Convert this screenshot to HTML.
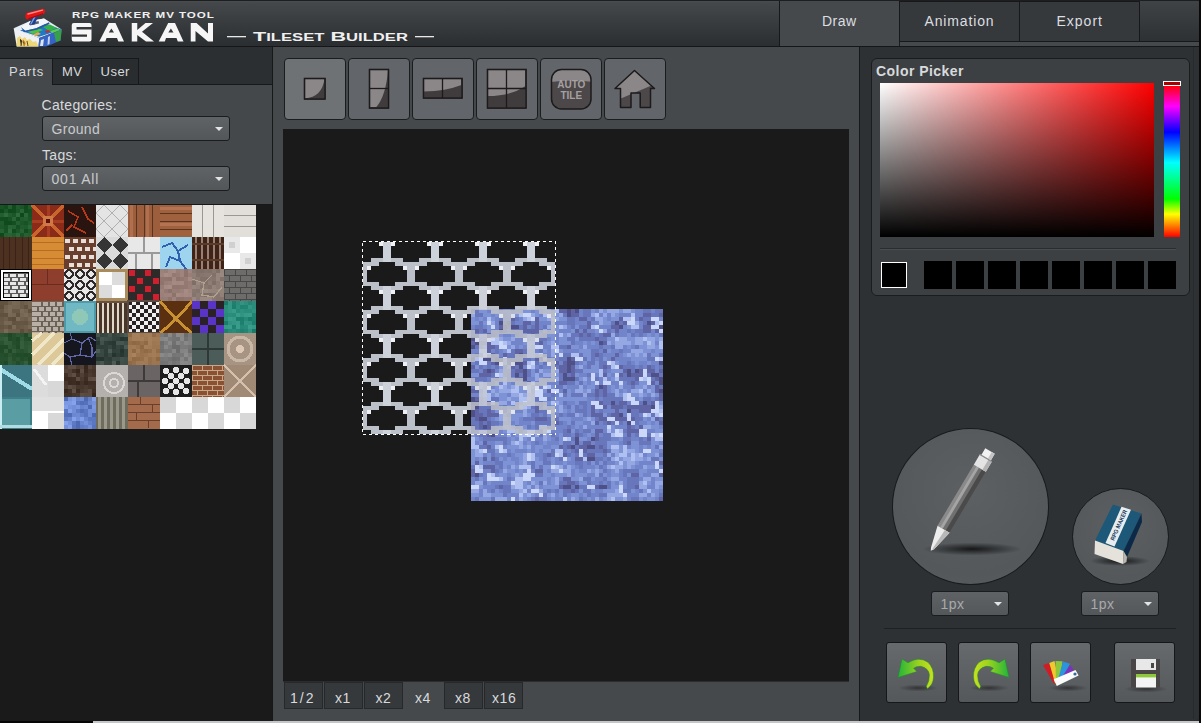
<!DOCTYPE html>
<html><head><meta charset="utf-8">
<style>
*{box-sizing:border-box;margin:0;padding:0}
html,body{width:1201px;height:723px;overflow:hidden;background:#2c2f32;font-family:"Liberation Sans",sans-serif;position:relative}
.a{position:absolute}
.t{white-space:nowrap;line-height:normal}
.dd{border:1px solid #1a1c1e;border-radius:3px;background:linear-gradient(#606366,#54575a)}
.dd:after{content:"";position:absolute;right:6px;top:10px;border-left:4px solid transparent;border-right:4px solid transparent;border-top:4px solid #e4e4e4}
.tb{top:58px;width:62px;height:62px;border:1.5px solid #1a1c1e;border-radius:4px}
.rb{top:642px;width:61px;height:61px;border:1.5px solid #151719;border-radius:3px;background:linear-gradient(#676a6d,#55585b)}
.circ{border-radius:50%;border:1.5px solid #181a1c;background:radial-gradient(circle at 50% 40%,#5c6063,#54585b 70%,#5a5e61)}
</style></head><body>
<div class="a" style="left:0;top:0;width:1201px;height:47px;background:linear-gradient(#4a4d50,#45484b 4%,#2c2f32 96%);border-top:1px solid #1c1e20;border-bottom:1px solid #141618"></div>
<svg class="a" style="left:0;top:0" width="70" height="47">
<path d="M13.7 28.3L30 21L44 18.6L49 21.6L61.7 29.6L39.2 38L16 30Z" fill="#e4eef8"/>
<path d="M20 30.5L44 23.5L61.7 29.6L39.2 36.8Z" fill="#1e78c8"/>
<path d="M27 31.5L38 28L43 30L33 34Z" fill="#4cc43c"/>
<path d="M42 26L50 24.5L57 28L49 31Z" fill="#38b048"/>
<path d="M50 31L58 28.5L60 30L52 33Z" fill="#5ad040"/>
<path d="M33 34.5L38 32L41 34L36 36Z" fill="#e0a848"/>
<path d="M45 31L49 30L50 32L46 33Z" fill="#d02828"/>
<path d="M21 27.1L30.1 21L44.1 18.6L49 22.3L36.2 28.3L25.2 30.8Z" fill="#f2f6fa"/>
<path d="M21 27.1L25.2 30.8L36.2 28.3L49 22.3L49.5 24L37 29.8L24 32.5Z" fill="#2a58a8"/>
<path d="M29.5 23L38.6 21L39 23.5L30 25.5Z" fill="#5a6274"/>
<path d="M13.7 28.3L39.2 38L38.6 46.6H16.7Z" fill="#eef0f2"/>
<path d="M16.7 46.6L17 38L20 36L22 39L25 37L27 40L30 39L33 42L36 41L38.6 46.6Z" fill="#ecd878"/>
<path d="M20 39L22 41L21 46M27 41L28 46" stroke="#6a4a20" stroke-width="1"/>
<path d="M23 40L25 43L24 46" stroke="#d07a30" stroke-width="1.2"/>
<path d="M39.2 38L61.7 29.6L60.5 40.5L46.5 46.6H38.6Z" fill="#3564c4"/>
<path d="M54 33L61.7 29.6L60.5 40.5L56 42Z" fill="#38a048"/>
<path d="M41 40L44 39L43 46H40Z" fill="#dfe6f0"/>
<path d="M48 37L50 36L49.5 44L47.5 45Z" fill="#c8d4ec"/>
<path d="M33.5 15L39 14.5L34.5 24.5L29 24.8Z" fill="#1e3c90"/>
<path d="M34.5 15.5L36.5 15.2L31.5 24.3L30 24.5Z" fill="#7aa0e0"/>
<path d="M25.3 16.2Q25.3 12.8 28.5 12.3L42 8.9Q45 8.6 45.2 11.2Q45.3 13.5 42.8 14.2L29.5 19.2Q25.3 20 25.3 16.2Z" fill="#e41414"/>
<path d="M28 14L42.5 10.2" stroke="#ff8a8a" stroke-width="1.3" stroke-linecap="round"/>
<path d="M28.5 18.7L43 13.8" stroke="#9a0a14" stroke-width="1.1"/>
</svg>
<svg class="a" style="left:60px;top:0" width="400" height="47">
<text transform="translate(12,17.8) scale(1.32,1)" font-family="Liberation Sans" font-weight="bold" font-size="8.8" fill="#f0f0f0" textLength="107.5" lengthAdjust="spacing">RPG MAKER MV TOOL</text>
<path transform="translate(-60,0)" fill="#f6f6f6" fill-rule="evenodd" d="M73.8 23H89.5Q91.5 23 91.5 25V39.5Q91.5 41.5 89.5 41.5H73.8Q71.75 41.5 71.75 39.5V25Q71.75 23 73.8 23ZM76.5 27H91.6V29.5H76.5ZM71.6 34.5H87V36.75H71.6Z
M108.7 23H115.5L124 41.5H118.3L117 38H106.5L105.3 41.5H99.2ZM111.4 28.6L114 32.4H108.8Z
M168.2 23H175L183.5 41.5H177.8L176.5 38H166L164.8 41.5H158.7ZM170.9 28.6L173.5 32.4H168.3Z
M131.75 23H137.25V30L145.5 23H153L142 31.75L154 41.5H146L137.25 35V41.5H131.75Z
M190.75 23H196.5L208 33.5V23H213V41.5H208L195.5 31V41.5H190.75Z"/>
<rect x="167" y="36" width="19" height="1.3" fill="#e8e8e8"/>
<text x="193" y="40.5" font-family="Liberation Sans" font-weight="bold" font-size="13" fill="#f0f0f0" textLength="155" lengthAdjust="spacingAndGlyphs">T<tspan font-size="10">ILESET</tspan> B<tspan font-size="10">UILDER</tspan></text>
<rect x="355" y="36" width="19" height="1.3" fill="#e8e8e8"/>
</svg>
<div class="a" style="left:779px;top:1px;width:421px;height:45px;background:#46494c"></div>
<div class="a" style="left:779px;top:1px;width:121px;height:45px;border-left:1.5px solid #16181a;border-right:1px solid #1a1c1e"></div>
<div class="a" style="left:899px;top:1px;width:121px;height:41px;background:#36393c;border:1px solid #16181a"></div>
<div class="a" style="left:1019px;top:1px;width:121px;height:41px;background:#36393c;border:1px solid #16181a"></div>
<div class="a" style="left:1140px;top:1px;width:59px;height:41px;background:linear-gradient(#404346,#2e3134);border-bottom:1px solid #16181a"></div>
<div class="a" style="left:1199px;top:0;width:2px;height:723px;background:#0a0a0a"></div>
<div class="a t" style="left:822px;top:13.13px;font-size:14px;color:#dcdee0;letter-spacing:0.5px;">Draw</div>
<div class="a t" style="left:924.5px;top:13.13px;font-size:14px;color:#dcdee0;letter-spacing:0.85px;">Animation</div>
<div class="a t" style="left:1056.5px;top:13.13px;font-size:14px;color:#dcdee0;letter-spacing:1px;">Export</div>
<div class="a" style="left:0;top:85px;width:272px;height:119px;background:#45484b"></div>
<div class="a" style="left:0;top:58px;width:52.5px;height:27px;background:#45484b;border-top:1px solid #16181a"></div>
<div class="a" style="left:52px;top:58px;width:40px;height:27px;background:#2a2d30;border:1px solid #16181a;border-bottom:none"></div>
<div class="a" style="left:91px;top:58px;width:48px;height:27px;background:#2a2d30;border:1px solid #16181a;border-bottom:none"></div>
<div class="a" style="left:52px;top:84px;width:220px;height:1px;background:#16181a"></div>
<div class="a t" style="left:9px;top:63.94px;font-size:13px;color:#d8dadc;letter-spacing:1.0px;">Parts</div>
<div class="a t" style="left:62px;top:63.94px;font-size:13px;color:#d8dadc;letter-spacing:0.5px;">MV</div>
<div class="a t" style="left:100.5px;top:63.94px;font-size:13px;color:#d8dadc;letter-spacing:0.5px;">User</div>
<div class="a t" style="left:41.5px;top:97.33px;font-size:14px;color:#d8dadc;letter-spacing:0.35px;">Categories:</div>
<div class="a dd" style="left:42px;top:116px;width:188px;height:25px"></div>
<div class="a t" style="left:51.5px;top:121.33px;font-size:14px;color:#c8cacc;letter-spacing:0.3px;">Ground</div>
<div class="a t" style="left:42px;top:147.33px;font-size:14px;color:#d8dadc;letter-spacing:0.3px;">Tags:</div>
<div class="a dd" style="left:42px;top:166px;width:188px;height:25px"></div>
<div class="a t" style="left:51.5px;top:171.33px;font-size:14px;color:#c8cacc;letter-spacing:0.8px;">001 All</div>
<div class="a" style="left:0;top:204px;width:273px;height:1px;background:#16181a"></div>
<div class="a" style="left:0;top:205px;width:272px;height:516px;background:#1a1a1a"></div>
<svg class="a" style="left:0;top:205px" width="256" height="224" viewBox="0 0 256 224" shape-rendering="crispEdges"><rect x="0" y="0" width="4" height="4" fill="#185325"/><rect x="4" y="0" width="4" height="4" fill="#124d1f"/><rect x="8" y="0" width="4" height="4" fill="#245f31"/><rect x="12" y="0" width="4" height="4" fill="#0f4a1c"/><rect x="16" y="0" width="4" height="4" fill="#205b2d"/><rect x="20" y="0" width="4" height="4" fill="#1a5527"/><rect x="24" y="0" width="4" height="4" fill="#0f4a1c"/><rect x="28" y="0" width="4" height="4" fill="#1f5a2c"/><rect x="0" y="4" width="4" height="4" fill="#0e491b"/><rect x="4" y="4" width="4" height="4" fill="#1c5729"/><rect x="8" y="4" width="4" height="4" fill="#0f4a1c"/><rect x="12" y="4" width="4" height="4" fill="#104b1d"/><rect x="16" y="4" width="4" height="4" fill="#1c5729"/><rect x="20" y="4" width="4" height="4" fill="#2a6537"/><rect x="24" y="4" width="4" height="4" fill="#114c1e"/><rect x="28" y="4" width="4" height="4" fill="#155022"/><rect x="0" y="8" width="4" height="4" fill="#235e30"/><rect x="4" y="8" width="4" height="4" fill="#2f6a3c"/><rect x="8" y="8" width="4" height="4" fill="#215c2e"/><rect x="12" y="8" width="4" height="4" fill="#1b5628"/><rect x="16" y="8" width="4" height="4" fill="#306b3d"/><rect x="20" y="8" width="4" height="4" fill="#0e491b"/><rect x="24" y="8" width="4" height="4" fill="#2b6638"/><rect x="28" y="8" width="4" height="4" fill="#175224"/><rect x="0" y="12" width="4" height="4" fill="#124d1f"/><rect x="4" y="12" width="4" height="4" fill="#114c1e"/><rect x="8" y="12" width="4" height="4" fill="#185325"/><rect x="12" y="12" width="4" height="4" fill="#2a6537"/><rect x="16" y="12" width="4" height="4" fill="#134e20"/><rect x="20" y="12" width="4" height="4" fill="#215c2e"/><rect x="24" y="12" width="4" height="4" fill="#245f31"/><rect x="28" y="12" width="4" height="4" fill="#1a5527"/><rect x="0" y="16" width="4" height="4" fill="#205b2d"/><rect x="4" y="16" width="4" height="4" fill="#0f4a1c"/><rect x="8" y="16" width="4" height="4" fill="#0f4a1c"/><rect x="12" y="16" width="4" height="4" fill="#144f21"/><rect x="16" y="16" width="4" height="4" fill="#256032"/><rect x="20" y="16" width="4" height="4" fill="#1c5729"/><rect x="24" y="16" width="4" height="4" fill="#185325"/><rect x="28" y="16" width="4" height="4" fill="#225d2f"/><rect x="0" y="20" width="4" height="4" fill="#1d582a"/><rect x="4" y="20" width="4" height="4" fill="#175224"/><rect x="8" y="20" width="4" height="4" fill="#296436"/><rect x="12" y="20" width="4" height="4" fill="#266133"/><rect x="16" y="20" width="4" height="4" fill="#155022"/><rect x="20" y="20" width="4" height="4" fill="#215c2e"/><rect x="24" y="20" width="4" height="4" fill="#1f5a2c"/><rect x="28" y="20" width="4" height="4" fill="#2c6739"/><rect x="0" y="24" width="4" height="4" fill="#276234"/><rect x="4" y="24" width="4" height="4" fill="#175224"/><rect x="8" y="24" width="4" height="4" fill="#306b3d"/><rect x="12" y="24" width="4" height="4" fill="#114c1e"/><rect x="16" y="24" width="4" height="4" fill="#1c5729"/><rect x="20" y="24" width="4" height="4" fill="#286335"/><rect x="24" y="24" width="4" height="4" fill="#124d1f"/><rect x="28" y="24" width="4" height="4" fill="#1e592b"/><rect x="0" y="28" width="4" height="4" fill="#0e491b"/><rect x="4" y="28" width="4" height="4" fill="#256032"/><rect x="8" y="28" width="4" height="4" fill="#286335"/><rect x="12" y="28" width="4" height="4" fill="#215c2e"/><rect x="16" y="28" width="4" height="4" fill="#2c6739"/><rect x="20" y="28" width="4" height="4" fill="#185325"/><rect x="24" y="28" width="4" height="4" fill="#266133"/><rect x="28" y="28" width="4" height="4" fill="#225d2f"/><rect x="32" y="0" width="32" height="32" fill="#8a2a18"/><path d="M32 0L64 32M64 0L32 32" stroke="#c8642c" stroke-width="4"/><path d="M48 0V32M32 16H64" stroke="#a83c20" stroke-width="3"/><rect x="43" y="11" width="10" height="10" fill="#d07848"/><rect x="46" y="14" width="4" height="4" fill="#5a1408"/><rect x="64" y="0" width="32" height="32" fill="#2a1410"/><path d="M68 6L78 12L74 22L86 28M82 2L88 14L94 18M66 26L72 20" stroke="#b8381a" stroke-width="1.6" fill="none"/><rect x="96" y="0" width="32" height="32" fill="#e4e4e4"/><path d="M96 8L104 0M96 24L120 0M104 32L128 8M120 32L128 24M104 0L128 24M96 8L120 32M120 0L128 8M96 24L104 32" stroke="#b0b0b0" stroke-width="1"/><rect x="128" y="0" width="32" height="32" fill="#9c5e3c"/><rect x="136" y="0" width="1" height="32" fill="#5a3420"/><rect x="144" y="0" width="1" height="32" fill="#5a3420"/><rect x="152" y="0" width="1" height="32" fill="#5a3420"/><rect x="130" y="0" width="3" height="32" fill="#b07050"/><rect x="146" y="0" width="3" height="32" fill="#b07050"/><rect x="160" y="0" width="32" height="32" fill="#a0623e"/><rect x="160" y="8" width="32" height="1" fill="#5a3420"/><rect x="160" y="16" width="32" height="1" fill="#5a3420"/><rect x="160" y="24" width="32" height="1" fill="#5a3420"/><rect x="160" y="2" width="32" height="3" fill="#b47454"/><rect x="160" y="18" width="32" height="3" fill="#b47454"/><rect x="192" y="0" width="32" height="32" fill="#e6e3df"/><rect x="202" y="0" width="1" height="32" fill="#9a9894"/><rect x="213" y="0" width="1" height="32" fill="#9a9894"/><rect x="224" y="0" width="32" height="32" fill="#e2dfdb"/><rect x="224" y="10" width="32" height="1" fill="#9a9894"/><rect x="224" y="21" width="32" height="1" fill="#9a9894"/><rect x="0" y="32" width="32" height="32" fill="#4c3020"/><rect x="3" y="32" width="1" height="32" fill="#3a2216"/><rect x="9" y="32" width="1" height="32" fill="#3a2216"/><rect x="15" y="32" width="1" height="32" fill="#3a2216"/><rect x="22" y="32" width="1" height="32" fill="#3a2216"/><rect x="28" y="32" width="1" height="32" fill="#3a2216"/><rect x="32" y="32" width="32" height="32" fill="#d68c34"/><rect x="32" y="37" width="32" height="1" fill="#b86c20"/><rect x="32" y="45" width="32" height="1" fill="#b86c20"/><rect x="32" y="53" width="32" height="1" fill="#b86c20"/><rect x="32" y="59" width="32" height="1" fill="#b86c20"/><rect x="64" y="32" width="32" height="32" fill="#6a3e2c"/><rect x="65" y="34" width="5" height="4" fill="#e8e0d8"/><rect x="73" y="34" width="5" height="4" fill="#e8e0d8"/><rect x="81" y="34" width="5" height="4" fill="#e8e0d8"/><rect x="89" y="34" width="5" height="4" fill="#e8e0d8"/><rect x="69" y="42" width="5" height="4" fill="#e8e0d8"/><rect x="77" y="42" width="5" height="4" fill="#e8e0d8"/><rect x="85" y="42" width="5" height="4" fill="#e8e0d8"/><rect x="93" y="42" width="5" height="4" fill="#e8e0d8"/><rect x="65" y="50" width="5" height="4" fill="#e8e0d8"/><rect x="73" y="50" width="5" height="4" fill="#e8e0d8"/><rect x="81" y="50" width="5" height="4" fill="#e8e0d8"/><rect x="89" y="50" width="5" height="4" fill="#e8e0d8"/><rect x="69" y="58" width="5" height="4" fill="#e8e0d8"/><rect x="77" y="58" width="5" height="4" fill="#e8e0d8"/><rect x="85" y="58" width="5" height="4" fill="#e8e0d8"/><rect x="93" y="58" width="5" height="4" fill="#e8e0d8"/><rect x="96" y="32" width="32" height="32" fill="#dadada"/><path d="M104 32L112 40L104 48L96 40ZM120 32L128 40L120 48L112 40ZM104 48L112 56L104 64L96 56ZM120 48L128 56L120 64L112 56Z" fill="#353535"/><rect x="128" y="32" width="32" height="32" fill="#e8e8e8"/><rect x="128" y="47" width="32" height="2" fill="#9a9a9a"/><rect x="143" y="32" width="2" height="15" fill="#9a9a9a"/><rect x="135" y="49" width="2" height="15" fill="#9a9a9a"/><rect x="151" y="49" width="2" height="15" fill="#9a9a9a"/><rect x="160" y="32" width="32" height="32" fill="#9ed4ee"/><path d="M162 42L172 38L178 46L188 40M166 62L170 52L180 56L186 64M178 46L180 56" stroke="#3060b0" stroke-width="2" fill="none"/><rect x="192" y="32" width="32" height="32" fill="#3e2418"/><rect x="195" y="32" width="2" height="32" fill="#9a8070"/><rect x="201" y="32" width="2" height="32" fill="#9a8070"/><rect x="207" y="32" width="2" height="32" fill="#9a8070"/><rect x="213" y="32" width="2" height="32" fill="#9a8070"/><rect x="219" y="32" width="2" height="32" fill="#9a8070"/><rect x="192" y="38" width="32" height="2" fill="#5a3a28"/><rect x="192" y="54" width="32" height="2" fill="#5a3a28"/><rect x="224" y="32" width="32" height="32" fill="#ffffff"/><rect x="224" y="32" width="16" height="16" fill="#e8e8e8"/><rect x="240" y="48" width="16" height="16" fill="#e8e8e8"/><rect x="229" y="37" width="6" height="6" fill="#d0d0d0"/><rect x="245" y="53" width="6" height="6" fill="#d0d0d0"/><rect x="0" y="64" width="32" height="32" fill="#000"/><rect x="1" y="65" width="30" height="30" fill="#fff"/><rect x="3" y="67" width="26" height="26" fill="#000"/><rect x="4" y="68" width="24" height="24" fill="#5a5a5a"/><rect x="4" y="68.5" width="4" height="3" fill="#e6e6e6"/><rect x="10" y="68.5" width="6" height="3" fill="#e6e6e6"/><rect x="18" y="68.5" width="6" height="3" fill="#e6e6e6"/><rect x="26" y="68.5" width="2" height="3" fill="#e6e6e6"/><rect x="4" y="72.5" width="6" height="3" fill="#e6e6e6"/><rect x="12" y="72.5" width="6" height="3" fill="#e6e6e6"/><rect x="20" y="72.5" width="6" height="3" fill="#e6e6e6"/><rect x="4" y="76.5" width="4" height="3" fill="#e6e6e6"/><rect x="10" y="76.5" width="6" height="3" fill="#e6e6e6"/><rect x="18" y="76.5" width="6" height="3" fill="#e6e6e6"/><rect x="26" y="76.5" width="2" height="3" fill="#e6e6e6"/><rect x="4" y="80.5" width="6" height="3" fill="#e6e6e6"/><rect x="12" y="80.5" width="6" height="3" fill="#e6e6e6"/><rect x="20" y="80.5" width="6" height="3" fill="#e6e6e6"/><rect x="4" y="84.5" width="4" height="3" fill="#e6e6e6"/><rect x="10" y="84.5" width="6" height="3" fill="#e6e6e6"/><rect x="18" y="84.5" width="6" height="3" fill="#e6e6e6"/><rect x="26" y="84.5" width="2" height="3" fill="#e6e6e6"/><rect x="4" y="88.5" width="6" height="3" fill="#e6e6e6"/><rect x="12" y="88.5" width="6" height="3" fill="#e6e6e6"/><rect x="20" y="88.5" width="6" height="3" fill="#e6e6e6"/><rect x="32" y="64" width="32" height="32" fill="#8e3e2c"/><rect x="32" y="79" width="32" height="1" fill="#6a2c20"/><rect x="47" y="64" width="1" height="15" fill="#6a2c20"/><rect x="64" y="64" width="32" height="32" fill="#e8e8e8"/><circle cx="69" cy="69" r="3.8" fill="none" stroke="#2e2828" stroke-width="2.2"/><circle cx="80" cy="69" r="3.8" fill="none" stroke="#2e2828" stroke-width="2.2"/><circle cx="91" cy="69" r="3.8" fill="none" stroke="#2e2828" stroke-width="2.2"/><circle cx="69" cy="80" r="3.8" fill="none" stroke="#2e2828" stroke-width="2.2"/><circle cx="80" cy="80" r="3.8" fill="none" stroke="#2e2828" stroke-width="2.2"/><circle cx="91" cy="80" r="3.8" fill="none" stroke="#2e2828" stroke-width="2.2"/><circle cx="69" cy="91" r="3.8" fill="none" stroke="#2e2828" stroke-width="2.2"/><circle cx="80" cy="91" r="3.8" fill="none" stroke="#2e2828" stroke-width="2.2"/><circle cx="91" cy="91" r="3.8" fill="none" stroke="#2e2828" stroke-width="2.2"/><rect x="96" y="64" width="32" height="32" fill="#a88c5c"/><rect x="99" y="67" width="26" height="26" fill="#dcdcdc"/><rect x="99" y="67" width="13" height="13" fill="#ffffff"/><rect x="112" y="80" width="13" height="13" fill="#ffffff"/><rect x="128" y="64" width="32" height="32" fill="#2e2a2a"/><rect x="129" y="65" width="6" height="6" fill="#d02030"/><rect x="145" y="65" width="6" height="6" fill="#d02030"/><rect x="137" y="73" width="6" height="6" fill="#d02030"/><rect x="153" y="73" width="6" height="6" fill="#d02030"/><rect x="129" y="81" width="6" height="6" fill="#d02030"/><rect x="145" y="81" width="6" height="6" fill="#d02030"/><rect x="137" y="89" width="6" height="6" fill="#d02030"/><rect x="153" y="89" width="6" height="6" fill="#d02030"/><rect x="160" y="64" width="4" height="4" fill="#9c827a"/><rect x="164" y="64" width="4" height="4" fill="#987e76"/><rect x="168" y="64" width="4" height="4" fill="#a38981"/><rect x="172" y="64" width="4" height="4" fill="#a68c84"/><rect x="176" y="64" width="4" height="4" fill="#997f77"/><rect x="180" y="64" width="4" height="4" fill="#9e847c"/><rect x="184" y="64" width="4" height="4" fill="#8d736b"/><rect x="188" y="64" width="4" height="4" fill="#9f857d"/><rect x="160" y="68" width="4" height="4" fill="#9e847c"/><rect x="164" y="68" width="4" height="4" fill="#a78d85"/><rect x="168" y="68" width="4" height="4" fill="#a38981"/><rect x="172" y="68" width="4" height="4" fill="#937971"/><rect x="176" y="68" width="4" height="4" fill="#967c74"/><rect x="180" y="68" width="4" height="4" fill="#9e847c"/><rect x="184" y="68" width="4" height="4" fill="#8c726a"/><rect x="188" y="68" width="4" height="4" fill="#987e76"/><rect x="160" y="72" width="4" height="4" fill="#90766e"/><rect x="164" y="72" width="4" height="4" fill="#8f756d"/><rect x="168" y="72" width="4" height="4" fill="#8d736b"/><rect x="172" y="72" width="4" height="4" fill="#a1877f"/><rect x="176" y="72" width="4" height="4" fill="#8f756d"/><rect x="180" y="72" width="4" height="4" fill="#927870"/><rect x="184" y="72" width="4" height="4" fill="#967c74"/><rect x="188" y="72" width="4" height="4" fill="#a48a82"/><rect x="160" y="76" width="4" height="4" fill="#8e746c"/><rect x="164" y="76" width="4" height="4" fill="#987e76"/><rect x="168" y="76" width="4" height="4" fill="#9b8179"/><rect x="172" y="76" width="4" height="4" fill="#a48a82"/><rect x="176" y="76" width="4" height="4" fill="#a28880"/><rect x="180" y="76" width="4" height="4" fill="#a48a82"/><rect x="184" y="76" width="4" height="4" fill="#937971"/><rect x="188" y="76" width="4" height="4" fill="#977d75"/><rect x="160" y="80" width="4" height="4" fill="#967c74"/><rect x="164" y="80" width="4" height="4" fill="#a48a82"/><rect x="168" y="80" width="4" height="4" fill="#a68c84"/><rect x="172" y="80" width="4" height="4" fill="#90766e"/><rect x="176" y="80" width="4" height="4" fill="#90766e"/><rect x="180" y="80" width="4" height="4" fill="#927870"/><rect x="184" y="80" width="4" height="4" fill="#927870"/><rect x="188" y="80" width="4" height="4" fill="#997f77"/><rect x="160" y="84" width="4" height="4" fill="#9c827a"/><rect x="164" y="84" width="4" height="4" fill="#937971"/><rect x="168" y="84" width="4" height="4" fill="#8c726a"/><rect x="172" y="84" width="4" height="4" fill="#977d75"/><rect x="176" y="84" width="4" height="4" fill="#967c74"/><rect x="180" y="84" width="4" height="4" fill="#9b8179"/><rect x="184" y="84" width="4" height="4" fill="#a68c84"/><rect x="188" y="84" width="4" height="4" fill="#9f857d"/><rect x="160" y="88" width="4" height="4" fill="#9a8078"/><rect x="164" y="88" width="4" height="4" fill="#9d837b"/><rect x="168" y="88" width="4" height="4" fill="#9e847c"/><rect x="172" y="88" width="4" height="4" fill="#8d736b"/><rect x="176" y="88" width="4" height="4" fill="#a58b83"/><rect x="180" y="88" width="4" height="4" fill="#a1877f"/><rect x="184" y="88" width="4" height="4" fill="#a48a82"/><rect x="188" y="88" width="4" height="4" fill="#a28880"/><rect x="160" y="92" width="4" height="4" fill="#967c74"/><rect x="164" y="92" width="4" height="4" fill="#977d75"/><rect x="168" y="92" width="4" height="4" fill="#8e746c"/><rect x="172" y="92" width="4" height="4" fill="#9d837b"/><rect x="176" y="92" width="4" height="4" fill="#8d736b"/><rect x="180" y="92" width="4" height="4" fill="#8d736b"/><rect x="184" y="92" width="4" height="4" fill="#91776f"/><rect x="188" y="92" width="4" height="4" fill="#90766e"/><rect x="192" y="64" width="4" height="4" fill="#87776f"/><rect x="196" y="64" width="4" height="4" fill="#7f6f67"/><rect x="200" y="64" width="4" height="4" fill="#7e6e66"/><rect x="204" y="64" width="4" height="4" fill="#82726a"/><rect x="208" y="64" width="4" height="4" fill="#807068"/><rect x="212" y="64" width="4" height="4" fill="#887870"/><rect x="216" y="64" width="4" height="4" fill="#7e6e66"/><rect x="220" y="64" width="4" height="4" fill="#96867e"/><rect x="192" y="68" width="4" height="4" fill="#8f7f77"/><rect x="196" y="68" width="4" height="4" fill="#82726a"/><rect x="200" y="68" width="4" height="4" fill="#85756d"/><rect x="204" y="68" width="4" height="4" fill="#87776f"/><rect x="208" y="68" width="4" height="4" fill="#887870"/><rect x="212" y="68" width="4" height="4" fill="#817169"/><rect x="216" y="68" width="4" height="4" fill="#95857d"/><rect x="220" y="68" width="4" height="4" fill="#998981"/><rect x="192" y="72" width="4" height="4" fill="#8b7b73"/><rect x="196" y="72" width="4" height="4" fill="#8b7b73"/><rect x="200" y="72" width="4" height="4" fill="#807068"/><rect x="204" y="72" width="4" height="4" fill="#807068"/><rect x="208" y="72" width="4" height="4" fill="#87776f"/><rect x="212" y="72" width="4" height="4" fill="#85756d"/><rect x="216" y="72" width="4" height="4" fill="#95857d"/><rect x="220" y="72" width="4" height="4" fill="#82726a"/><rect x="192" y="76" width="4" height="4" fill="#7e6e66"/><rect x="196" y="76" width="4" height="4" fill="#988880"/><rect x="200" y="76" width="4" height="4" fill="#8c7c74"/><rect x="204" y="76" width="4" height="4" fill="#82726a"/><rect x="208" y="76" width="4" height="4" fill="#8d7d75"/><rect x="212" y="76" width="4" height="4" fill="#7e6e66"/><rect x="216" y="76" width="4" height="4" fill="#8c7c74"/><rect x="220" y="76" width="4" height="4" fill="#998981"/><rect x="192" y="80" width="4" height="4" fill="#96867e"/><rect x="196" y="80" width="4" height="4" fill="#918179"/><rect x="200" y="80" width="4" height="4" fill="#85756d"/><rect x="204" y="80" width="4" height="4" fill="#887870"/><rect x="208" y="80" width="4" height="4" fill="#82726a"/><rect x="212" y="80" width="4" height="4" fill="#93837b"/><rect x="216" y="80" width="4" height="4" fill="#8c7c74"/><rect x="220" y="80" width="4" height="4" fill="#93837b"/><rect x="192" y="84" width="4" height="4" fill="#87776f"/><rect x="196" y="84" width="4" height="4" fill="#84746c"/><rect x="200" y="84" width="4" height="4" fill="#94847c"/><rect x="204" y="84" width="4" height="4" fill="#998981"/><rect x="208" y="84" width="4" height="4" fill="#95857d"/><rect x="212" y="84" width="4" height="4" fill="#94847c"/><rect x="216" y="84" width="4" height="4" fill="#94847c"/><rect x="220" y="84" width="4" height="4" fill="#92827a"/><rect x="192" y="88" width="4" height="4" fill="#84746c"/><rect x="196" y="88" width="4" height="4" fill="#8c7c74"/><rect x="200" y="88" width="4" height="4" fill="#87776f"/><rect x="204" y="88" width="4" height="4" fill="#7e6e66"/><rect x="208" y="88" width="4" height="4" fill="#7e6e66"/><rect x="212" y="88" width="4" height="4" fill="#85756d"/><rect x="216" y="88" width="4" height="4" fill="#85756d"/><rect x="220" y="88" width="4" height="4" fill="#918179"/><rect x="192" y="92" width="4" height="4" fill="#988880"/><rect x="196" y="92" width="4" height="4" fill="#8a7a72"/><rect x="200" y="92" width="4" height="4" fill="#988880"/><rect x="204" y="92" width="4" height="4" fill="#998981"/><rect x="208" y="92" width="4" height="4" fill="#988880"/><rect x="212" y="92" width="4" height="4" fill="#887870"/><rect x="216" y="92" width="4" height="4" fill="#84746c"/><rect x="220" y="92" width="4" height="4" fill="#84746c"/><path d="M192 74L204 78L212 70M204 78L202 90L214 92L222 82" stroke="#b0a090" stroke-width="1.2" fill="none"/><rect x="224" y="64" width="32" height="32" fill="#6e6c6a"/><rect x="224" y="64" width="32" height="1" fill="#4a4846"/><rect x="224" y="64" width="1" height="6" fill="#4a4846"/><rect x="235" y="64" width="1" height="6" fill="#4a4846"/><rect x="246" y="64" width="1" height="6" fill="#4a4846"/><rect x="224" y="70" width="32" height="1" fill="#4a4846"/><rect x="229" y="70" width="1" height="6" fill="#4a4846"/><rect x="240" y="70" width="1" height="6" fill="#4a4846"/><rect x="251" y="70" width="1" height="6" fill="#4a4846"/><rect x="224" y="76" width="32" height="1" fill="#4a4846"/><rect x="224" y="76" width="1" height="6" fill="#4a4846"/><rect x="235" y="76" width="1" height="6" fill="#4a4846"/><rect x="246" y="76" width="1" height="6" fill="#4a4846"/><rect x="224" y="82" width="32" height="1" fill="#4a4846"/><rect x="229" y="82" width="1" height="6" fill="#4a4846"/><rect x="240" y="82" width="1" height="6" fill="#4a4846"/><rect x="251" y="82" width="1" height="6" fill="#4a4846"/><rect x="224" y="88" width="32" height="1" fill="#4a4846"/><rect x="224" y="88" width="1" height="6" fill="#4a4846"/><rect x="235" y="88" width="1" height="6" fill="#4a4846"/><rect x="246" y="88" width="1" height="6" fill="#4a4846"/><rect x="224" y="94" width="32" height="1" fill="#4a4846"/><rect x="229" y="94" width="1" height="6" fill="#4a4846"/><rect x="240" y="94" width="1" height="6" fill="#4a4846"/><rect x="251" y="94" width="1" height="6" fill="#4a4846"/><rect x="0" y="96" width="4" height="4" fill="#625240"/><rect x="4" y="96" width="4" height="4" fill="#625240"/><rect x="8" y="96" width="4" height="4" fill="#6f5f4d"/><rect x="12" y="96" width="4" height="4" fill="#786856"/><rect x="16" y="96" width="4" height="4" fill="#766654"/><rect x="20" y="96" width="4" height="4" fill="#6b5b49"/><rect x="24" y="96" width="4" height="4" fill="#70604e"/><rect x="28" y="96" width="4" height="4" fill="#756553"/><rect x="0" y="100" width="4" height="4" fill="#5e4e3c"/><rect x="4" y="100" width="4" height="4" fill="#71614f"/><rect x="8" y="100" width="4" height="4" fill="#796957"/><rect x="12" y="100" width="4" height="4" fill="#756553"/><rect x="16" y="100" width="4" height="4" fill="#746452"/><rect x="20" y="100" width="4" height="4" fill="#6b5b49"/><rect x="24" y="100" width="4" height="4" fill="#61513f"/><rect x="28" y="100" width="4" height="4" fill="#756553"/><rect x="0" y="104" width="4" height="4" fill="#665644"/><rect x="4" y="104" width="4" height="4" fill="#756553"/><rect x="8" y="104" width="4" height="4" fill="#7b6b59"/><rect x="12" y="104" width="4" height="4" fill="#685846"/><rect x="16" y="104" width="4" height="4" fill="#685846"/><rect x="20" y="104" width="4" height="4" fill="#7a6a58"/><rect x="24" y="104" width="4" height="4" fill="#736351"/><rect x="28" y="104" width="4" height="4" fill="#61513f"/><rect x="0" y="108" width="4" height="4" fill="#60503e"/><rect x="4" y="108" width="4" height="4" fill="#60503e"/><rect x="8" y="108" width="4" height="4" fill="#786856"/><rect x="12" y="108" width="4" height="4" fill="#756553"/><rect x="16" y="108" width="4" height="4" fill="#60503e"/><rect x="20" y="108" width="4" height="4" fill="#766654"/><rect x="24" y="108" width="4" height="4" fill="#7b6b59"/><rect x="28" y="108" width="4" height="4" fill="#71614f"/><rect x="0" y="112" width="4" height="4" fill="#675745"/><rect x="4" y="112" width="4" height="4" fill="#6d5d4b"/><rect x="8" y="112" width="4" height="4" fill="#60503e"/><rect x="12" y="112" width="4" height="4" fill="#5c4c3a"/><rect x="16" y="112" width="4" height="4" fill="#7b6b59"/><rect x="20" y="112" width="4" height="4" fill="#70604e"/><rect x="24" y="112" width="4" height="4" fill="#6c5c4a"/><rect x="28" y="112" width="4" height="4" fill="#796957"/><rect x="0" y="116" width="4" height="4" fill="#695947"/><rect x="4" y="116" width="4" height="4" fill="#776755"/><rect x="8" y="116" width="4" height="4" fill="#766654"/><rect x="12" y="116" width="4" height="4" fill="#625240"/><rect x="16" y="116" width="4" height="4" fill="#645442"/><rect x="20" y="116" width="4" height="4" fill="#655543"/><rect x="24" y="116" width="4" height="4" fill="#635341"/><rect x="28" y="116" width="4" height="4" fill="#6e5e4c"/><rect x="0" y="120" width="4" height="4" fill="#645442"/><rect x="4" y="120" width="4" height="4" fill="#695947"/><rect x="8" y="120" width="4" height="4" fill="#60503e"/><rect x="12" y="120" width="4" height="4" fill="#796957"/><rect x="16" y="120" width="4" height="4" fill="#675745"/><rect x="20" y="120" width="4" height="4" fill="#6a5a48"/><rect x="24" y="120" width="4" height="4" fill="#6e5e4c"/><rect x="28" y="120" width="4" height="4" fill="#786856"/><rect x="0" y="124" width="4" height="4" fill="#695947"/><rect x="4" y="124" width="4" height="4" fill="#796957"/><rect x="8" y="124" width="4" height="4" fill="#6c5c4a"/><rect x="12" y="124" width="4" height="4" fill="#6d5d4b"/><rect x="16" y="124" width="4" height="4" fill="#6c5c4a"/><rect x="20" y="124" width="4" height="4" fill="#5c4c3a"/><rect x="24" y="124" width="4" height="4" fill="#6a5a48"/><rect x="28" y="124" width="4" height="4" fill="#61513f"/><rect x="32" y="96" width="32" height="32" fill="#6a6258"/><rect x="32" y="97" width="5" height="3.5" fill="#b8b0a4"/><rect x="36" y="97" width="5" height="3.5" fill="#b8b0a4"/><rect x="43" y="97" width="5" height="3.5" fill="#b8b0a4"/><rect x="50" y="97" width="5" height="3.5" fill="#b8b0a4"/><rect x="57" y="97" width="5" height="3.5" fill="#b8b0a4"/><rect x="32" y="102" width="5" height="3.5" fill="#b8b0a4"/><rect x="39" y="102" width="5" height="3.5" fill="#b8b0a4"/><rect x="46" y="102" width="5" height="3.5" fill="#b8b0a4"/><rect x="53" y="102" width="5" height="3.5" fill="#b8b0a4"/><rect x="60" y="102" width="4" height="3.5" fill="#b8b0a4"/><rect x="32" y="107" width="5" height="3.5" fill="#b8b0a4"/><rect x="36" y="107" width="5" height="3.5" fill="#b8b0a4"/><rect x="43" y="107" width="5" height="3.5" fill="#b8b0a4"/><rect x="50" y="107" width="5" height="3.5" fill="#b8b0a4"/><rect x="57" y="107" width="5" height="3.5" fill="#b8b0a4"/><rect x="32" y="112" width="5" height="3.5" fill="#b8b0a4"/><rect x="39" y="112" width="5" height="3.5" fill="#b8b0a4"/><rect x="46" y="112" width="5" height="3.5" fill="#b8b0a4"/><rect x="53" y="112" width="5" height="3.5" fill="#b8b0a4"/><rect x="60" y="112" width="4" height="3.5" fill="#b8b0a4"/><rect x="32" y="117" width="5" height="3.5" fill="#b8b0a4"/><rect x="36" y="117" width="5" height="3.5" fill="#b8b0a4"/><rect x="43" y="117" width="5" height="3.5" fill="#b8b0a4"/><rect x="50" y="117" width="5" height="3.5" fill="#b8b0a4"/><rect x="57" y="117" width="5" height="3.5" fill="#b8b0a4"/><rect x="32" y="122" width="5" height="3.5" fill="#b8b0a4"/><rect x="39" y="122" width="5" height="3.5" fill="#b8b0a4"/><rect x="46" y="122" width="5" height="3.5" fill="#b8b0a4"/><rect x="53" y="122" width="5" height="3.5" fill="#b8b0a4"/><rect x="60" y="122" width="4" height="3.5" fill="#b8b0a4"/><rect x="32" y="127" width="5" height="3.5" fill="#b8b0a4"/><rect x="36" y="127" width="5" height="3.5" fill="#b8b0a4"/><rect x="43" y="127" width="5" height="3.5" fill="#b8b0a4"/><rect x="50" y="127" width="5" height="3.5" fill="#b8b0a4"/><rect x="57" y="127" width="5" height="3.5" fill="#b8b0a4"/><rect x="64" y="96" width="32" height="32" fill="#4e9aa8"/><rect x="66" y="98" width="28" height="28" fill="#70b8c4"/><circle cx="80" cy="112" r="8" fill="#90c8b8"/><rect x="96" y="96" width="32" height="32" fill="#4a3628"/><rect x="97" y="98" width="2" height="30" fill="#e0d8c8"/><rect x="102" y="98" width="2" height="30" fill="#e0d8c8"/><rect x="107" y="98" width="2" height="30" fill="#e0d8c8"/><rect x="112" y="98" width="2" height="30" fill="#e0d8c8"/><rect x="117" y="98" width="2" height="30" fill="#e0d8c8"/><rect x="122" y="98" width="2" height="30" fill="#e0d8c8"/><rect x="127" y="98" width="2" height="30" fill="#e0d8c8"/><rect x="96" y="96" width="32" height="2" fill="#6a5040"/><rect x="128" y="96" width="32" height="32" fill="#f0f0f0"/><rect x="128" y="96" width="4" height="4" fill="#2a2222"/><rect x="136" y="96" width="4" height="4" fill="#2a2222"/><rect x="144" y="96" width="4" height="4" fill="#2a2222"/><rect x="152" y="96" width="4" height="4" fill="#2a2222"/><rect x="132" y="100" width="4" height="4" fill="#2a2222"/><rect x="140" y="100" width="4" height="4" fill="#2a2222"/><rect x="148" y="100" width="4" height="4" fill="#2a2222"/><rect x="156" y="100" width="4" height="4" fill="#2a2222"/><rect x="128" y="104" width="4" height="4" fill="#2a2222"/><rect x="136" y="104" width="4" height="4" fill="#2a2222"/><rect x="144" y="104" width="4" height="4" fill="#2a2222"/><rect x="152" y="104" width="4" height="4" fill="#2a2222"/><rect x="132" y="108" width="4" height="4" fill="#2a2222"/><rect x="140" y="108" width="4" height="4" fill="#2a2222"/><rect x="148" y="108" width="4" height="4" fill="#2a2222"/><rect x="156" y="108" width="4" height="4" fill="#2a2222"/><rect x="128" y="112" width="4" height="4" fill="#2a2222"/><rect x="136" y="112" width="4" height="4" fill="#2a2222"/><rect x="144" y="112" width="4" height="4" fill="#2a2222"/><rect x="152" y="112" width="4" height="4" fill="#2a2222"/><rect x="132" y="116" width="4" height="4" fill="#2a2222"/><rect x="140" y="116" width="4" height="4" fill="#2a2222"/><rect x="148" y="116" width="4" height="4" fill="#2a2222"/><rect x="156" y="116" width="4" height="4" fill="#2a2222"/><rect x="128" y="120" width="4" height="4" fill="#2a2222"/><rect x="136" y="120" width="4" height="4" fill="#2a2222"/><rect x="144" y="120" width="4" height="4" fill="#2a2222"/><rect x="152" y="120" width="4" height="4" fill="#2a2222"/><rect x="132" y="124" width="4" height="4" fill="#2a2222"/><rect x="140" y="124" width="4" height="4" fill="#2a2222"/><rect x="148" y="124" width="4" height="4" fill="#2a2222"/><rect x="156" y="124" width="4" height="4" fill="#2a2222"/><rect x="128" y="96" width="32" height="32" fill="none" stroke="#5a4a40" stroke-width="2"/><rect x="160" y="96" width="32" height="32" fill="#5a3010"/><path d="M160 96Q176 116 192 128M192 96Q176 116 160 128" stroke="#c89030" stroke-width="3" fill="none"/><rect x="192" y="96" width="32" height="32" fill="#2a2226"/><rect x="192" y="96" width="8" height="8" fill="#5a34c8"/><rect x="208" y="96" width="8" height="8" fill="#5a34c8"/><rect x="200" y="104" width="8" height="8" fill="#5a34c8"/><rect x="216" y="104" width="8" height="8" fill="#5a34c8"/><rect x="192" y="112" width="8" height="8" fill="#5a34c8"/><rect x="208" y="112" width="8" height="8" fill="#5a34c8"/><rect x="200" y="120" width="8" height="8" fill="#5a34c8"/><rect x="216" y="120" width="8" height="8" fill="#5a34c8"/><rect x="224" y="96" width="4" height="4" fill="#187a68"/><rect x="228" y="96" width="4" height="4" fill="#349684"/><rect x="232" y="96" width="4" height="4" fill="#1e806e"/><rect x="236" y="96" width="4" height="4" fill="#298b79"/><rect x="240" y="96" width="4" height="4" fill="#329482"/><rect x="244" y="96" width="4" height="4" fill="#2c8e7c"/><rect x="248" y="96" width="4" height="4" fill="#238573"/><rect x="252" y="96" width="4" height="4" fill="#2a8c7a"/><rect x="224" y="100" width="4" height="4" fill="#2b8d7b"/><rect x="228" y="100" width="4" height="4" fill="#349684"/><rect x="232" y="100" width="4" height="4" fill="#1b7d6b"/><rect x="236" y="100" width="4" height="4" fill="#2c8e7c"/><rect x="240" y="100" width="4" height="4" fill="#208270"/><rect x="244" y="100" width="4" height="4" fill="#218371"/><rect x="248" y="100" width="4" height="4" fill="#339583"/><rect x="252" y="100" width="4" height="4" fill="#2a8c7a"/><rect x="224" y="104" width="4" height="4" fill="#2c8e7c"/><rect x="228" y="104" width="4" height="4" fill="#339583"/><rect x="232" y="104" width="4" height="4" fill="#389a88"/><rect x="236" y="104" width="4" height="4" fill="#278977"/><rect x="240" y="104" width="4" height="4" fill="#2e907e"/><rect x="244" y="104" width="4" height="4" fill="#2a8c7a"/><rect x="248" y="104" width="4" height="4" fill="#2a8c7a"/><rect x="252" y="104" width="4" height="4" fill="#309280"/><rect x="224" y="108" width="4" height="4" fill="#288a78"/><rect x="228" y="108" width="4" height="4" fill="#2b8d7b"/><rect x="232" y="108" width="4" height="4" fill="#298b79"/><rect x="236" y="108" width="4" height="4" fill="#399b89"/><rect x="240" y="108" width="4" height="4" fill="#319381"/><rect x="244" y="108" width="4" height="4" fill="#379987"/><rect x="248" y="108" width="4" height="4" fill="#399b89"/><rect x="252" y="108" width="4" height="4" fill="#218371"/><rect x="224" y="112" width="4" height="4" fill="#2c8e7c"/><rect x="228" y="112" width="4" height="4" fill="#399b89"/><rect x="232" y="112" width="4" height="4" fill="#369886"/><rect x="236" y="112" width="4" height="4" fill="#1c7e6c"/><rect x="240" y="112" width="4" height="4" fill="#1c7e6c"/><rect x="244" y="112" width="4" height="4" fill="#278977"/><rect x="248" y="112" width="4" height="4" fill="#1a7c6a"/><rect x="252" y="112" width="4" height="4" fill="#208270"/><rect x="224" y="116" width="4" height="4" fill="#1a7c6a"/><rect x="228" y="116" width="4" height="4" fill="#309280"/><rect x="232" y="116" width="4" height="4" fill="#349684"/><rect x="236" y="116" width="4" height="4" fill="#389a88"/><rect x="240" y="116" width="4" height="4" fill="#1d7f6d"/><rect x="244" y="116" width="4" height="4" fill="#319381"/><rect x="248" y="116" width="4" height="4" fill="#2f917f"/><rect x="252" y="116" width="4" height="4" fill="#1d7f6d"/><rect x="224" y="120" width="4" height="4" fill="#379987"/><rect x="228" y="120" width="4" height="4" fill="#3a9c8a"/><rect x="232" y="120" width="4" height="4" fill="#1f816f"/><rect x="236" y="120" width="4" height="4" fill="#3a9c8a"/><rect x="240" y="120" width="4" height="4" fill="#268876"/><rect x="244" y="120" width="4" height="4" fill="#298b79"/><rect x="248" y="120" width="4" height="4" fill="#3b9d8b"/><rect x="252" y="120" width="4" height="4" fill="#359785"/><rect x="224" y="124" width="4" height="4" fill="#1d7f6d"/><rect x="228" y="124" width="4" height="4" fill="#278977"/><rect x="232" y="124" width="4" height="4" fill="#2a8c7a"/><rect x="236" y="124" width="4" height="4" fill="#248674"/><rect x="240" y="124" width="4" height="4" fill="#1f816f"/><rect x="244" y="124" width="4" height="4" fill="#238573"/><rect x="248" y="124" width="4" height="4" fill="#319381"/><rect x="252" y="124" width="4" height="4" fill="#187a68"/><rect x="0" y="128" width="4" height="4" fill="#2b5533"/><rect x="4" y="128" width="4" height="4" fill="#285230"/><rect x="8" y="128" width="4" height="4" fill="#1e4826"/><rect x="12" y="128" width="4" height="4" fill="#254f2d"/><rect x="16" y="128" width="4" height="4" fill="#2c5634"/><rect x="20" y="128" width="4" height="4" fill="#2a5432"/><rect x="24" y="128" width="4" height="4" fill="#1f4927"/><rect x="28" y="128" width="4" height="4" fill="#355f3d"/><rect x="0" y="132" width="4" height="4" fill="#305a38"/><rect x="4" y="132" width="4" height="4" fill="#355f3d"/><rect x="8" y="132" width="4" height="4" fill="#204a28"/><rect x="12" y="132" width="4" height="4" fill="#244e2c"/><rect x="16" y="132" width="4" height="4" fill="#1e4826"/><rect x="20" y="132" width="4" height="4" fill="#305a38"/><rect x="24" y="132" width="4" height="4" fill="#244e2c"/><rect x="28" y="132" width="4" height="4" fill="#214b29"/><rect x="0" y="136" width="4" height="4" fill="#285230"/><rect x="4" y="136" width="4" height="4" fill="#335d3b"/><rect x="8" y="136" width="4" height="4" fill="#315b39"/><rect x="12" y="136" width="4" height="4" fill="#244e2c"/><rect x="16" y="136" width="4" height="4" fill="#214b29"/><rect x="20" y="136" width="4" height="4" fill="#345e3c"/><rect x="24" y="136" width="4" height="4" fill="#2b5533"/><rect x="28" y="136" width="4" height="4" fill="#2e5836"/><rect x="0" y="140" width="4" height="4" fill="#204a28"/><rect x="4" y="140" width="4" height="4" fill="#1f4927"/><rect x="8" y="140" width="4" height="4" fill="#2e5836"/><rect x="12" y="140" width="4" height="4" fill="#285230"/><rect x="16" y="140" width="4" height="4" fill="#1f4927"/><rect x="20" y="140" width="4" height="4" fill="#345e3c"/><rect x="24" y="140" width="4" height="4" fill="#2d5735"/><rect x="28" y="140" width="4" height="4" fill="#315b39"/><rect x="0" y="144" width="4" height="4" fill="#204a28"/><rect x="4" y="144" width="4" height="4" fill="#325c3a"/><rect x="8" y="144" width="4" height="4" fill="#1f4927"/><rect x="12" y="144" width="4" height="4" fill="#325c3a"/><rect x="16" y="144" width="4" height="4" fill="#285230"/><rect x="20" y="144" width="4" height="4" fill="#26502e"/><rect x="24" y="144" width="4" height="4" fill="#2b5533"/><rect x="28" y="144" width="4" height="4" fill="#345e3c"/><rect x="0" y="148" width="4" height="4" fill="#244e2c"/><rect x="4" y="148" width="4" height="4" fill="#214b29"/><rect x="8" y="148" width="4" height="4" fill="#2a5432"/><rect x="12" y="148" width="4" height="4" fill="#234d2b"/><rect x="16" y="148" width="4" height="4" fill="#204a28"/><rect x="20" y="148" width="4" height="4" fill="#214b29"/><rect x="24" y="148" width="4" height="4" fill="#1f4927"/><rect x="28" y="148" width="4" height="4" fill="#224c2a"/><rect x="0" y="152" width="4" height="4" fill="#254f2d"/><rect x="4" y="152" width="4" height="4" fill="#254f2d"/><rect x="8" y="152" width="4" height="4" fill="#305a38"/><rect x="12" y="152" width="4" height="4" fill="#244e2c"/><rect x="16" y="152" width="4" height="4" fill="#2a5432"/><rect x="20" y="152" width="4" height="4" fill="#224c2a"/><rect x="24" y="152" width="4" height="4" fill="#26502e"/><rect x="28" y="152" width="4" height="4" fill="#1e4826"/><rect x="0" y="156" width="4" height="4" fill="#244e2c"/><rect x="4" y="156" width="4" height="4" fill="#1e4826"/><rect x="8" y="156" width="4" height="4" fill="#2f5937"/><rect x="12" y="156" width="4" height="4" fill="#2b5533"/><rect x="16" y="156" width="4" height="4" fill="#224c2a"/><rect x="20" y="156" width="4" height="4" fill="#295331"/><rect x="24" y="156" width="4" height="4" fill="#345e3c"/><rect x="28" y="156" width="4" height="4" fill="#204a28"/><rect x="32" y="128" width="32" height="32" fill="#dcc898"/><path d="M32 136L42 128M32 150L54 128M38 160L64 134M52 160L64 148" stroke="#f0e6c8" stroke-width="3"/><rect x="64" y="128" width="32" height="32" fill="#16161e"/><path d="M64 138L72 134L82 138L90 132L96 136M72 134L70 128M82 138L80 150L70 152L64 148M80 150L92 152L96 146M70 152L72 160M88 132L92 142L92 152" stroke="#6068a8" stroke-width="1.2" fill="none"/><rect x="96" y="128" width="4" height="4" fill="#465450"/><rect x="100" y="128" width="4" height="4" fill="#374541"/><rect x="104" y="128" width="4" height="4" fill="#394743"/><rect x="108" y="128" width="4" height="4" fill="#475551"/><rect x="112" y="128" width="4" height="4" fill="#35433f"/><rect x="116" y="128" width="4" height="4" fill="#3a4844"/><rect x="120" y="128" width="4" height="4" fill="#414f4b"/><rect x="124" y="128" width="4" height="4" fill="#4d5b57"/><rect x="96" y="132" width="4" height="4" fill="#33413d"/><rect x="100" y="132" width="4" height="4" fill="#475551"/><rect x="104" y="132" width="4" height="4" fill="#42504c"/><rect x="108" y="132" width="4" height="4" fill="#3f4d49"/><rect x="112" y="132" width="4" height="4" fill="#364440"/><rect x="116" y="132" width="4" height="4" fill="#33413d"/><rect x="120" y="132" width="4" height="4" fill="#283632"/><rect x="124" y="132" width="4" height="4" fill="#2b3935"/><rect x="96" y="136" width="4" height="4" fill="#283632"/><rect x="100" y="136" width="4" height="4" fill="#43514d"/><rect x="104" y="136" width="4" height="4" fill="#303e3a"/><rect x="108" y="136" width="4" height="4" fill="#2c3a36"/><rect x="112" y="136" width="4" height="4" fill="#293733"/><rect x="116" y="136" width="4" height="4" fill="#475551"/><rect x="120" y="136" width="4" height="4" fill="#485652"/><rect x="124" y="136" width="4" height="4" fill="#404e4a"/><rect x="96" y="140" width="4" height="4" fill="#313f3b"/><rect x="100" y="140" width="4" height="4" fill="#2f3d39"/><rect x="104" y="140" width="4" height="4" fill="#313f3b"/><rect x="108" y="140" width="4" height="4" fill="#384642"/><rect x="112" y="140" width="4" height="4" fill="#2c3a36"/><rect x="116" y="140" width="4" height="4" fill="#374541"/><rect x="120" y="140" width="4" height="4" fill="#303e3a"/><rect x="124" y="140" width="4" height="4" fill="#4c5a56"/><rect x="96" y="144" width="4" height="4" fill="#4c5a56"/><rect x="100" y="144" width="4" height="4" fill="#3b4945"/><rect x="104" y="144" width="4" height="4" fill="#2f3d39"/><rect x="108" y="144" width="4" height="4" fill="#4c5a56"/><rect x="112" y="144" width="4" height="4" fill="#32403c"/><rect x="116" y="144" width="4" height="4" fill="#34423e"/><rect x="120" y="144" width="4" height="4" fill="#263430"/><rect x="124" y="144" width="4" height="4" fill="#35433f"/><rect x="96" y="148" width="4" height="4" fill="#384642"/><rect x="100" y="148" width="4" height="4" fill="#3a4844"/><rect x="104" y="148" width="4" height="4" fill="#2e3c38"/><rect x="108" y="148" width="4" height="4" fill="#3a4844"/><rect x="112" y="148" width="4" height="4" fill="#263430"/><rect x="116" y="148" width="4" height="4" fill="#303e3a"/><rect x="120" y="148" width="4" height="4" fill="#293733"/><rect x="124" y="148" width="4" height="4" fill="#35433f"/><rect x="96" y="152" width="4" height="4" fill="#273531"/><rect x="100" y="152" width="4" height="4" fill="#263430"/><rect x="104" y="152" width="4" height="4" fill="#32403c"/><rect x="108" y="152" width="4" height="4" fill="#2f3d39"/><rect x="112" y="152" width="4" height="4" fill="#3d4b47"/><rect x="116" y="152" width="4" height="4" fill="#3b4945"/><rect x="120" y="152" width="4" height="4" fill="#44524e"/><rect x="124" y="152" width="4" height="4" fill="#404e4a"/><rect x="96" y="156" width="4" height="4" fill="#42504c"/><rect x="100" y="156" width="4" height="4" fill="#495753"/><rect x="104" y="156" width="4" height="4" fill="#35433f"/><rect x="108" y="156" width="4" height="4" fill="#33413d"/><rect x="112" y="156" width="4" height="4" fill="#4d5b57"/><rect x="116" y="156" width="4" height="4" fill="#2b3935"/><rect x="120" y="156" width="4" height="4" fill="#42504c"/><rect x="124" y="156" width="4" height="4" fill="#3f4d49"/><rect x="128" y="128" width="4" height="4" fill="#8f6943"/><rect x="132" y="128" width="4" height="4" fill="#a57f59"/><rect x="136" y="128" width="4" height="4" fill="#a6805a"/><rect x="140" y="128" width="4" height="4" fill="#9f7953"/><rect x="144" y="128" width="4" height="4" fill="#a27c56"/><rect x="148" y="128" width="4" height="4" fill="#a47e58"/><rect x="152" y="128" width="4" height="4" fill="#916b45"/><rect x="156" y="128" width="4" height="4" fill="#9c7650"/><rect x="128" y="132" width="4" height="4" fill="#9c7650"/><rect x="132" y="132" width="4" height="4" fill="#a57f59"/><rect x="136" y="132" width="4" height="4" fill="#a47e58"/><rect x="140" y="132" width="4" height="4" fill="#a57f59"/><rect x="144" y="132" width="4" height="4" fill="#9e7852"/><rect x="148" y="132" width="4" height="4" fill="#a6805a"/><rect x="152" y="132" width="4" height="4" fill="#a17b55"/><rect x="156" y="132" width="4" height="4" fill="#a17b55"/><rect x="128" y="136" width="4" height="4" fill="#946e48"/><rect x="132" y="136" width="4" height="4" fill="#8e6842"/><rect x="136" y="136" width="4" height="4" fill="#916b45"/><rect x="140" y="136" width="4" height="4" fill="#98724c"/><rect x="144" y="136" width="4" height="4" fill="#906a44"/><rect x="148" y="136" width="4" height="4" fill="#a57f59"/><rect x="152" y="136" width="4" height="4" fill="#9d7751"/><rect x="156" y="136" width="4" height="4" fill="#9f7953"/><rect x="128" y="140" width="4" height="4" fill="#9f7953"/><rect x="132" y="140" width="4" height="4" fill="#a17b55"/><rect x="136" y="140" width="4" height="4" fill="#9b754f"/><rect x="140" y="140" width="4" height="4" fill="#8e6842"/><rect x="144" y="140" width="4" height="4" fill="#a47e58"/><rect x="148" y="140" width="4" height="4" fill="#a27c56"/><rect x="152" y="140" width="4" height="4" fill="#9c7650"/><rect x="156" y="140" width="4" height="4" fill="#9c7650"/><rect x="128" y="144" width="4" height="4" fill="#a07a54"/><rect x="132" y="144" width="4" height="4" fill="#8f6943"/><rect x="136" y="144" width="4" height="4" fill="#a27c56"/><rect x="140" y="144" width="4" height="4" fill="#956f49"/><rect x="144" y="144" width="4" height="4" fill="#906a44"/><rect x="148" y="144" width="4" height="4" fill="#956f49"/><rect x="152" y="144" width="4" height="4" fill="#a27c56"/><rect x="156" y="144" width="4" height="4" fill="#936d47"/><rect x="128" y="148" width="4" height="4" fill="#a27c56"/><rect x="132" y="148" width="4" height="4" fill="#a9835d"/><rect x="136" y="148" width="4" height="4" fill="#9b754f"/><rect x="140" y="148" width="4" height="4" fill="#98724c"/><rect x="144" y="148" width="4" height="4" fill="#9b754f"/><rect x="148" y="148" width="4" height="4" fill="#a17b55"/><rect x="152" y="148" width="4" height="4" fill="#a37d57"/><rect x="156" y="148" width="4" height="4" fill="#9f7953"/><rect x="128" y="152" width="4" height="4" fill="#9f7953"/><rect x="132" y="152" width="4" height="4" fill="#906a44"/><rect x="136" y="152" width="4" height="4" fill="#926c46"/><rect x="140" y="152" width="4" height="4" fill="#956f49"/><rect x="144" y="152" width="4" height="4" fill="#a27c56"/><rect x="148" y="152" width="4" height="4" fill="#96704a"/><rect x="152" y="152" width="4" height="4" fill="#9d7751"/><rect x="156" y="152" width="4" height="4" fill="#8e6842"/><rect x="128" y="156" width="4" height="4" fill="#8f6943"/><rect x="132" y="156" width="4" height="4" fill="#956f49"/><rect x="136" y="156" width="4" height="4" fill="#a07a54"/><rect x="140" y="156" width="4" height="4" fill="#a17b55"/><rect x="144" y="156" width="4" height="4" fill="#a07a54"/><rect x="148" y="156" width="4" height="4" fill="#96704a"/><rect x="152" y="156" width="4" height="4" fill="#9c7650"/><rect x="156" y="156" width="4" height="4" fill="#9b754f"/><rect x="160" y="128" width="4" height="4" fill="#7a7a7a"/><rect x="164" y="128" width="4" height="4" fill="#6f6f6f"/><rect x="168" y="128" width="4" height="4" fill="#888888"/><rect x="172" y="128" width="4" height="4" fill="#727272"/><rect x="176" y="128" width="4" height="4" fill="#8b8b8b"/><rect x="180" y="128" width="4" height="4" fill="#898989"/><rect x="184" y="128" width="4" height="4" fill="#6c6c6c"/><rect x="188" y="128" width="4" height="4" fill="#7a7a7a"/><rect x="160" y="132" width="4" height="4" fill="#868686"/><rect x="164" y="132" width="4" height="4" fill="#8a8a8a"/><rect x="168" y="132" width="4" height="4" fill="#7a7a7a"/><rect x="172" y="132" width="4" height="4" fill="#747474"/><rect x="176" y="132" width="4" height="4" fill="#727272"/><rect x="180" y="132" width="4" height="4" fill="#8a8a8a"/><rect x="184" y="132" width="4" height="4" fill="#727272"/><rect x="188" y="132" width="4" height="4" fill="#7e7e7e"/><rect x="160" y="136" width="4" height="4" fill="#707070"/><rect x="164" y="136" width="4" height="4" fill="#7c7c7c"/><rect x="168" y="136" width="4" height="4" fill="#8a8a8a"/><rect x="172" y="136" width="4" height="4" fill="#707070"/><rect x="176" y="136" width="4" height="4" fill="#868686"/><rect x="180" y="136" width="4" height="4" fill="#7c7c7c"/><rect x="184" y="136" width="4" height="4" fill="#888888"/><rect x="188" y="136" width="4" height="4" fill="#828282"/><rect x="160" y="140" width="4" height="4" fill="#737373"/><rect x="164" y="140" width="4" height="4" fill="#888888"/><rect x="168" y="140" width="4" height="4" fill="#7b7b7b"/><rect x="172" y="140" width="4" height="4" fill="#6c6c6c"/><rect x="176" y="140" width="4" height="4" fill="#6c6c6c"/><rect x="180" y="140" width="4" height="4" fill="#7b7b7b"/><rect x="184" y="140" width="4" height="4" fill="#7a7a7a"/><rect x="188" y="140" width="4" height="4" fill="#757575"/><rect x="160" y="144" width="4" height="4" fill="#707070"/><rect x="164" y="144" width="4" height="4" fill="#777777"/><rect x="168" y="144" width="4" height="4" fill="#767676"/><rect x="172" y="144" width="4" height="4" fill="#868686"/><rect x="176" y="144" width="4" height="4" fill="#6c6c6c"/><rect x="180" y="144" width="4" height="4" fill="#848484"/><rect x="184" y="144" width="4" height="4" fill="#868686"/><rect x="188" y="144" width="4" height="4" fill="#6f6f6f"/><rect x="160" y="148" width="4" height="4" fill="#898989"/><rect x="164" y="148" width="4" height="4" fill="#828282"/><rect x="168" y="148" width="4" height="4" fill="#888888"/><rect x="172" y="148" width="4" height="4" fill="#757575"/><rect x="176" y="148" width="4" height="4" fill="#777777"/><rect x="180" y="148" width="4" height="4" fill="#787878"/><rect x="184" y="148" width="4" height="4" fill="#8b8b8b"/><rect x="188" y="148" width="4" height="4" fill="#7e7e7e"/><rect x="160" y="152" width="4" height="4" fill="#777777"/><rect x="164" y="152" width="4" height="4" fill="#797979"/><rect x="168" y="152" width="4" height="4" fill="#747474"/><rect x="172" y="152" width="4" height="4" fill="#6d6d6d"/><rect x="176" y="152" width="4" height="4" fill="#6f6f6f"/><rect x="180" y="152" width="4" height="4" fill="#868686"/><rect x="184" y="152" width="4" height="4" fill="#757575"/><rect x="188" y="152" width="4" height="4" fill="#898989"/><rect x="160" y="156" width="4" height="4" fill="#737373"/><rect x="164" y="156" width="4" height="4" fill="#747474"/><rect x="168" y="156" width="4" height="4" fill="#7c7c7c"/><rect x="172" y="156" width="4" height="4" fill="#727272"/><rect x="176" y="156" width="4" height="4" fill="#777777"/><rect x="180" y="156" width="4" height="4" fill="#8a8a8a"/><rect x="184" y="156" width="4" height="4" fill="#888888"/><rect x="188" y="156" width="4" height="4" fill="#858585"/><rect x="192" y="128" width="32" height="32" fill="#4c5c58"/><rect x="192" y="143" width="32" height="2" fill="#2e3836"/><rect x="207" y="128" width="2" height="32" fill="#2e3836"/><rect x="224" y="128" width="32" height="32" fill="#a89482"/><circle cx="240" cy="144" r="12" fill="none" stroke="#cab8a6" stroke-width="3"/><circle cx="240" cy="144" r="4" fill="#dcc8b4"/><rect x="0" y="160" width="32" height="32" fill="#3c7480"/><path d="M0 164L32 184" stroke="#a0dce8" stroke-width="4"/><rect x="0" y="160" width="2" height="32" fill="#c8eef4"/><rect x="32" y="160" width="32" height="32" fill="#ffffff"/><rect x="48" y="176" width="16" height="16" fill="#d8d8d8"/><rect x="32" y="160" width="16" height="32" fill="#dcdcdc"/><path d="M34 164L46 180" stroke="#f4f4f4" stroke-width="3"/><rect x="64" y="160" width="4" height="4" fill="#4f3f35"/><rect x="68" y="160" width="4" height="4" fill="#5c4c42"/><rect x="72" y="160" width="4" height="4" fill="#5d4d43"/><rect x="76" y="160" width="4" height="4" fill="#4c3c32"/><rect x="80" y="160" width="4" height="4" fill="#534339"/><rect x="84" y="160" width="4" height="4" fill="#36261c"/><rect x="88" y="160" width="4" height="4" fill="#54443a"/><rect x="92" y="160" width="4" height="4" fill="#47372d"/><rect x="64" y="164" width="4" height="4" fill="#55453b"/><rect x="68" y="164" width="4" height="4" fill="#504036"/><rect x="72" y="164" width="4" height="4" fill="#403026"/><rect x="76" y="164" width="4" height="4" fill="#36261c"/><rect x="80" y="164" width="4" height="4" fill="#5c4c42"/><rect x="84" y="164" width="4" height="4" fill="#39291f"/><rect x="88" y="164" width="4" height="4" fill="#48382e"/><rect x="92" y="164" width="4" height="4" fill="#433329"/><rect x="64" y="168" width="4" height="4" fill="#413127"/><rect x="68" y="168" width="4" height="4" fill="#54443a"/><rect x="72" y="168" width="4" height="4" fill="#5e4e44"/><rect x="76" y="168" width="4" height="4" fill="#3f2f25"/><rect x="80" y="168" width="4" height="4" fill="#504036"/><rect x="84" y="168" width="4" height="4" fill="#413127"/><rect x="88" y="168" width="4" height="4" fill="#4c3c32"/><rect x="92" y="168" width="4" height="4" fill="#45352b"/><rect x="64" y="172" width="4" height="4" fill="#3b2b21"/><rect x="68" y="172" width="4" height="4" fill="#3b2b21"/><rect x="72" y="172" width="4" height="4" fill="#3d2d23"/><rect x="76" y="172" width="4" height="4" fill="#5b4b41"/><rect x="80" y="172" width="4" height="4" fill="#49392f"/><rect x="84" y="172" width="4" height="4" fill="#3d2d23"/><rect x="88" y="172" width="4" height="4" fill="#5b4b41"/><rect x="92" y="172" width="4" height="4" fill="#5f4f45"/><rect x="64" y="176" width="4" height="4" fill="#47372d"/><rect x="68" y="176" width="4" height="4" fill="#3a2a20"/><rect x="72" y="176" width="4" height="4" fill="#3c2c22"/><rect x="76" y="176" width="4" height="4" fill="#37271d"/><rect x="80" y="176" width="4" height="4" fill="#433329"/><rect x="84" y="176" width="4" height="4" fill="#38281e"/><rect x="88" y="176" width="4" height="4" fill="#3e2e24"/><rect x="92" y="176" width="4" height="4" fill="#3f2f25"/><rect x="64" y="180" width="4" height="4" fill="#4d3d33"/><rect x="68" y="180" width="4" height="4" fill="#5b4b41"/><rect x="72" y="180" width="4" height="4" fill="#54443a"/><rect x="76" y="180" width="4" height="4" fill="#46362c"/><rect x="80" y="180" width="4" height="4" fill="#46362c"/><rect x="84" y="180" width="4" height="4" fill="#4b3b31"/><rect x="88" y="180" width="4" height="4" fill="#44342a"/><rect x="92" y="180" width="4" height="4" fill="#423228"/><rect x="64" y="184" width="4" height="4" fill="#36261c"/><rect x="68" y="184" width="4" height="4" fill="#403026"/><rect x="72" y="184" width="4" height="4" fill="#5e4e44"/><rect x="76" y="184" width="4" height="4" fill="#39291f"/><rect x="80" y="184" width="4" height="4" fill="#4a3a30"/><rect x="84" y="184" width="4" height="4" fill="#4f3f35"/><rect x="88" y="184" width="4" height="4" fill="#59493f"/><rect x="92" y="184" width="4" height="4" fill="#3d2d23"/><rect x="64" y="188" width="4" height="4" fill="#3f2f25"/><rect x="68" y="188" width="4" height="4" fill="#3e2e24"/><rect x="72" y="188" width="4" height="4" fill="#45352b"/><rect x="76" y="188" width="4" height="4" fill="#47372d"/><rect x="80" y="188" width="4" height="4" fill="#5d4d43"/><rect x="84" y="188" width="4" height="4" fill="#59493f"/><rect x="88" y="188" width="4" height="4" fill="#5a4a40"/><rect x="92" y="188" width="4" height="4" fill="#34241a"/><rect x="96" y="160" width="32" height="32" fill="#b4b0ae"/><circle cx="114" cy="178" r="10" fill="none" stroke="#dcd8d6" stroke-width="2"/><circle cx="114" cy="178" r="4" fill="none" stroke="#dcd8d6" stroke-width="2"/><rect x="128" y="160" width="32" height="32" fill="#6a6464"/><rect x="128" y="175" width="32" height="2" fill="#3e3a3a"/><rect x="143" y="160" width="2" height="15" fill="#3e3a3a"/><rect x="137" y="177" width="2" height="15" fill="#3e3a3a"/><rect x="160" y="160" width="32" height="32" fill="#1e1e1e"/><circle cx="166" cy="166" r="3.2" fill="#e6e6e6"/><circle cx="176" cy="165" r="3.2" fill="#e6e6e6"/><circle cx="186" cy="166" r="3.2" fill="#e6e6e6"/><circle cx="165" cy="176" r="3.2" fill="#e6e6e6"/><circle cx="176" cy="176" r="3.2" fill="#e6e6e6"/><circle cx="187" cy="176" r="3.2" fill="#e6e6e6"/><circle cx="166" cy="186" r="3.2" fill="#e6e6e6"/><circle cx="176" cy="187" r="3.2" fill="#e6e6e6"/><circle cx="186" cy="186" r="3.2" fill="#e6e6e6"/><circle cx="171" cy="171" r="3.2" fill="#e6e6e6"/><circle cx="181" cy="171" r="3.2" fill="#e6e6e6"/><circle cx="171" cy="181" r="3.2" fill="#e6e6e6"/><circle cx="181" cy="181" r="3.2" fill="#e6e6e6"/><rect x="192" y="160" width="32" height="32" fill="#8a5232"/><rect x="192" y="160" width="32" height="1" fill="#c8a888"/><rect x="192" y="160" width="1" height="5" fill="#c8a888"/><rect x="202" y="160" width="1" height="5" fill="#c8a888"/><rect x="212" y="160" width="1" height="5" fill="#c8a888"/><rect x="222" y="160" width="1" height="5" fill="#c8a888"/><rect x="192" y="165" width="32" height="1" fill="#c8a888"/><rect x="197" y="165" width="1" height="5" fill="#c8a888"/><rect x="207" y="165" width="1" height="5" fill="#c8a888"/><rect x="217" y="165" width="1" height="5" fill="#c8a888"/><rect x="192" y="170" width="32" height="1" fill="#c8a888"/><rect x="192" y="170" width="1" height="5" fill="#c8a888"/><rect x="202" y="170" width="1" height="5" fill="#c8a888"/><rect x="212" y="170" width="1" height="5" fill="#c8a888"/><rect x="222" y="170" width="1" height="5" fill="#c8a888"/><rect x="192" y="175" width="32" height="1" fill="#c8a888"/><rect x="197" y="175" width="1" height="5" fill="#c8a888"/><rect x="207" y="175" width="1" height="5" fill="#c8a888"/><rect x="217" y="175" width="1" height="5" fill="#c8a888"/><rect x="192" y="180" width="32" height="1" fill="#c8a888"/><rect x="192" y="180" width="1" height="5" fill="#c8a888"/><rect x="202" y="180" width="1" height="5" fill="#c8a888"/><rect x="212" y="180" width="1" height="5" fill="#c8a888"/><rect x="222" y="180" width="1" height="5" fill="#c8a888"/><rect x="192" y="185" width="32" height="1" fill="#c8a888"/><rect x="197" y="185" width="1" height="5" fill="#c8a888"/><rect x="207" y="185" width="1" height="5" fill="#c8a888"/><rect x="217" y="185" width="1" height="5" fill="#c8a888"/><rect x="192" y="190" width="32" height="1" fill="#c8a888"/><rect x="192" y="190" width="1" height="5" fill="#c8a888"/><rect x="202" y="190" width="1" height="5" fill="#c8a888"/><rect x="212" y="190" width="1" height="5" fill="#c8a888"/><rect x="222" y="190" width="1" height="5" fill="#c8a888"/><rect x="224" y="160" width="32" height="32" fill="#a08a76"/><path d="M224 160L256 192M256 160L224 192" stroke="#d4c0ac" stroke-width="2"/><rect x="0" y="192" width="32" height="32" fill="#3e8088"/><rect x="2" y="194" width="28" height="26" fill="#5a9ea4"/><rect x="0" y="192" width="2" height="32" fill="#c8eef4"/><rect x="0" y="220" width="32" height="3" fill="#b0dce4"/><rect x="32" y="192" width="32" height="32" fill="#ffffff"/><rect x="48" y="208" width="16" height="16" fill="#d8d8d8"/><rect x="32" y="192" width="32" height="14" fill="#e0e0e0"/><rect x="64" y="192" width="4" height="4" fill="#4d69b3"/><rect x="68" y="192" width="4" height="4" fill="#7692dc"/><rect x="72" y="192" width="4" height="4" fill="#819de7"/><rect x="76" y="192" width="4" height="4" fill="#6884ce"/><rect x="80" y="192" width="4" height="4" fill="#6f8bd5"/><rect x="84" y="192" width="4" height="4" fill="#4c68b2"/><rect x="88" y="192" width="4" height="4" fill="#637fc9"/><rect x="92" y="192" width="4" height="4" fill="#839fe9"/><rect x="64" y="196" width="4" height="4" fill="#7d99e3"/><rect x="68" y="196" width="4" height="4" fill="#7f9be5"/><rect x="72" y="196" width="4" height="4" fill="#86a2ec"/><rect x="76" y="196" width="4" height="4" fill="#5a76c0"/><rect x="80" y="196" width="4" height="4" fill="#526eb8"/><rect x="84" y="196" width="4" height="4" fill="#5571bb"/><rect x="88" y="196" width="4" height="4" fill="#6b87d1"/><rect x="92" y="196" width="4" height="4" fill="#7490da"/><rect x="64" y="200" width="4" height="4" fill="#84a0ea"/><rect x="68" y="200" width="4" height="4" fill="#7793dd"/><rect x="72" y="200" width="4" height="4" fill="#728ed8"/><rect x="76" y="200" width="4" height="4" fill="#7995df"/><rect x="80" y="200" width="4" height="4" fill="#6783cd"/><rect x="84" y="200" width="4" height="4" fill="#6d89d3"/><rect x="88" y="200" width="4" height="4" fill="#4e6ab4"/><rect x="92" y="200" width="4" height="4" fill="#7a96e0"/><rect x="64" y="204" width="4" height="4" fill="#5975bf"/><rect x="68" y="204" width="4" height="4" fill="#839fe9"/><rect x="72" y="204" width="4" height="4" fill="#728ed8"/><rect x="76" y="204" width="4" height="4" fill="#5e7ac4"/><rect x="80" y="204" width="4" height="4" fill="#536fb9"/><rect x="84" y="204" width="4" height="4" fill="#5b77c1"/><rect x="88" y="204" width="4" height="4" fill="#728ed8"/><rect x="92" y="204" width="4" height="4" fill="#7591db"/><rect x="64" y="208" width="4" height="4" fill="#526eb8"/><rect x="68" y="208" width="4" height="4" fill="#506cb6"/><rect x="72" y="208" width="4" height="4" fill="#6b87d1"/><rect x="76" y="208" width="4" height="4" fill="#6e8ad4"/><rect x="80" y="208" width="4" height="4" fill="#637fc9"/><rect x="84" y="208" width="4" height="4" fill="#5975bf"/><rect x="88" y="208" width="4" height="4" fill="#708cd6"/><rect x="92" y="208" width="4" height="4" fill="#4c68b2"/><rect x="64" y="212" width="4" height="4" fill="#5e7ac4"/><rect x="68" y="212" width="4" height="4" fill="#6783cd"/><rect x="72" y="212" width="4" height="4" fill="#85a1eb"/><rect x="76" y="212" width="4" height="4" fill="#728ed8"/><rect x="80" y="212" width="4" height="4" fill="#819de7"/><rect x="84" y="212" width="4" height="4" fill="#6884ce"/><rect x="88" y="212" width="4" height="4" fill="#5a76c0"/><rect x="92" y="212" width="4" height="4" fill="#5a76c0"/><rect x="64" y="216" width="4" height="4" fill="#85a1eb"/><rect x="68" y="216" width="4" height="4" fill="#7692dc"/><rect x="72" y="216" width="4" height="4" fill="#5e7ac4"/><rect x="76" y="216" width="4" height="4" fill="#4d69b3"/><rect x="80" y="216" width="4" height="4" fill="#6985cf"/><rect x="84" y="216" width="4" height="4" fill="#7490da"/><rect x="88" y="216" width="4" height="4" fill="#6581cb"/><rect x="92" y="216" width="4" height="4" fill="#5b77c1"/><rect x="64" y="220" width="4" height="4" fill="#7490da"/><rect x="68" y="220" width="4" height="4" fill="#839fe9"/><rect x="72" y="220" width="4" height="4" fill="#5975bf"/><rect x="76" y="220" width="4" height="4" fill="#4e6ab4"/><rect x="80" y="220" width="4" height="4" fill="#607cc6"/><rect x="84" y="220" width="4" height="4" fill="#6581cb"/><rect x="88" y="220" width="4" height="4" fill="#7490da"/><rect x="92" y="220" width="4" height="4" fill="#5773bd"/><rect x="96" y="192" width="32" height="32" fill="#6e6c5c"/><rect x="98" y="192" width="3" height="32" fill="#9a988a"/><rect x="104" y="192" width="3" height="32" fill="#9a988a"/><rect x="110" y="192" width="3" height="32" fill="#9a988a"/><rect x="116" y="192" width="3" height="32" fill="#9a988a"/><rect x="122" y="192" width="3" height="32" fill="#9a988a"/><rect x="128" y="192" width="32" height="32" fill="#a46a4c"/><rect x="128" y="199" width="32" height="1" fill="#6a3e2a"/><rect x="128" y="207" width="32" height="1" fill="#6a3e2a"/><rect x="128" y="215" width="32" height="1" fill="#6a3e2a"/><rect x="140" y="192" width="1" height="7" fill="#6a3e2a"/><rect x="152" y="200" width="1" height="7" fill="#6a3e2a"/><rect x="136" y="208" width="1" height="7" fill="#6a3e2a"/><rect x="148" y="216" width="1" height="7" fill="#6a3e2a"/><rect x="160" y="192" width="32" height="32" fill="#ffffff"/><rect x="160" y="192" width="16" height="16" fill="#d8d8d8"/><rect x="176" y="208" width="16" height="16" fill="#d8d8d8"/><rect x="192" y="192" width="32" height="32" fill="#ffffff"/><rect x="192" y="192" width="16" height="16" fill="#d8d8d8"/><rect x="208" y="208" width="16" height="16" fill="#d8d8d8"/><rect x="224" y="192" width="32" height="32" fill="#ffffff"/><rect x="224" y="192" width="16" height="16" fill="#d8d8d8"/><rect x="240" y="208" width="16" height="16" fill="#d8d8d8"/></svg>
<div class="a" style="left:272px;top:47px;width:1px;height:674px;background:#16181a"></div>
<div class="a" style="left:273px;top:47px;width:586px;height:674px;background:#46494c"></div>
<div class="a" style="left:859px;top:47px;width:1px;height:674px;background:#16181a"></div>
<div class="a tb" style="left:284px;background:#6e7275"></div>
<div class="a tb" style="left:348px;background:#62666a"></div>
<div class="a tb" style="left:412px;background:#62666a"></div>
<div class="a tb" style="left:476px;background:#62666a"></div>
<div class="a tb" style="left:540px;background:#62666a"></div>
<div class="a tb" style="left:604px;background:#62666a"></div>
<div class="a" style="left:283px;top:129px;width:566px;height:553px;background:#1a1a1a;border-bottom:1px solid #2a2c2e"></div>
<svg class="a" style="left:283px;top:129px" width="566" height="553" shape-rendering="crispEdges">
<defs><pattern id="pt" x="80" y="113" width="48" height="48" patternUnits="userSpaceOnUse"><rect x="0" y="20" width="4" height="4" fill="#bcc0c8"/><rect x="0" y="24" width="4" height="4" fill="#bcc0c8"/><rect x="0" y="28" width="4" height="4" fill="#bcc0c8"/><rect x="0" y="32" width="4" height="4" fill="#bcc0c8"/><rect x="0" y="36" width="4" height="4" fill="#bcc0c8"/><rect x="0" y="40" width="4" height="4" fill="#bcc0c8"/><rect x="4" y="20" width="4" height="4" fill="#bcc0c8"/><rect x="4" y="40" width="4" height="4" fill="#bcc0c8"/><rect x="8" y="16" width="4" height="4" fill="#bcc0c8"/><rect x="8" y="20" width="4" height="4" fill="#bcc0c8"/><rect x="8" y="40" width="4" height="4" fill="#bcc0c8"/><rect x="8" y="44" width="4" height="4" fill="#bcc0c8"/><rect x="12" y="16" width="4" height="4" fill="#bcc0c8"/><rect x="12" y="20" width="4" height="4" fill="#bcc0c8"/><rect x="12" y="40" width="4" height="4" fill="#bcc0c8"/><rect x="12" y="44" width="4" height="4" fill="#bcc0c8"/><rect x="16" y="16" width="4" height="4" fill="#bcc0c8"/><rect x="16" y="44" width="4" height="4" fill="#bcc0c8"/><rect x="20" y="0" width="4" height="4" fill="#cdd1d9"/><rect x="20" y="4" width="4" height="4" fill="#cdd1d9"/><rect x="20" y="8" width="4" height="4" fill="#cdd1d9"/><rect x="20" y="12" width="4" height="4" fill="#cdd1d9"/><rect x="20" y="16" width="4" height="4" fill="#cdd1d9"/><rect x="20" y="44" width="4" height="4" fill="#cdd1d9"/><rect x="24" y="0" width="4" height="4" fill="#cdd1d9"/><rect x="24" y="4" width="4" height="4" fill="#cdd1d9"/><rect x="24" y="8" width="4" height="4" fill="#cdd1d9"/><rect x="24" y="12" width="4" height="4" fill="#cdd1d9"/><rect x="24" y="16" width="4" height="4" fill="#cdd1d9"/><rect x="24" y="44" width="4" height="4" fill="#cdd1d9"/><rect x="28" y="16" width="4" height="4" fill="#bcc0c8"/><rect x="28" y="44" width="4" height="4" fill="#bcc0c8"/><rect x="32" y="16" width="4" height="4" fill="#bcc0c8"/><rect x="32" y="20" width="4" height="4" fill="#bcc0c8"/><rect x="32" y="40" width="4" height="4" fill="#bcc0c8"/><rect x="32" y="44" width="4" height="4" fill="#bcc0c8"/><rect x="36" y="16" width="4" height="4" fill="#bcc0c8"/><rect x="36" y="20" width="4" height="4" fill="#bcc0c8"/><rect x="36" y="40" width="4" height="4" fill="#bcc0c8"/><rect x="36" y="44" width="4" height="4" fill="#bcc0c8"/><rect x="40" y="20" width="4" height="4" fill="#bcc0c8"/><rect x="40" y="40" width="4" height="4" fill="#bcc0c8"/><rect x="44" y="20" width="4" height="4" fill="#bcc0c8"/><rect x="44" y="24" width="4" height="4" fill="#bcc0c8"/><rect x="44" y="28" width="4" height="4" fill="#bcc0c8"/><rect x="44" y="32" width="4" height="4" fill="#bcc0c8"/><rect x="44" y="36" width="4" height="4" fill="#bcc0c8"/><rect x="44" y="40" width="4" height="4" fill="#bcc0c8"/><rect x="4" y="24" width="4" height="4" fill="#eef0f4"/><rect x="16" y="0" width="4" height="4" fill="#eef0f4"/><rect x="28" y="0" width="4" height="4" fill="#eef0f4"/><rect x="40" y="24" width="4" height="4" fill="#eef0f4"/></pattern></defs>
<rect x="80" y="113" width="192" height="192" fill="url(#pt)"/>
<g transform="translate(188,180)"><rect x="0" y="0" width="8" height="4" fill="#6876bc"/><rect x="8" y="0" width="8" height="4" fill="#7e92d6"/><rect x="16" y="0" width="4" height="4" fill="#7284ca"/><rect x="20" y="0" width="8" height="4" fill="#96a8e4"/><rect x="28" y="0" width="4" height="4" fill="#7284ca"/><rect x="32" y="0" width="8" height="4" fill="#7e92d6"/><rect x="40" y="0" width="4" height="4" fill="#7284ca"/><rect x="44" y="0" width="16" height="4" fill="#7e92d6"/><rect x="60" y="0" width="4" height="4" fill="#7284ca"/><rect x="64" y="0" width="8" height="4" fill="#7e92d6"/><rect x="72" y="0" width="8" height="4" fill="#96a8e4"/><rect x="80" y="0" width="4" height="4" fill="#7e92d6"/><rect x="84" y="0" width="4" height="4" fill="#b0c0f0"/><rect x="88" y="0" width="8" height="4" fill="#5e64a4"/><rect x="96" y="0" width="4" height="4" fill="#505088"/><rect x="100" y="0" width="4" height="4" fill="#5e64a4"/><rect x="104" y="0" width="4" height="4" fill="#505088"/><rect x="108" y="0" width="4" height="4" fill="#7284ca"/><rect x="112" y="0" width="8" height="4" fill="#6876bc"/><rect x="120" y="0" width="4" height="4" fill="#7e92d6"/><rect x="124" y="0" width="4" height="4" fill="#7284ca"/><rect x="128" y="0" width="4" height="4" fill="#96a8e4"/><rect x="132" y="0" width="4" height="4" fill="#7e92d6"/><rect x="136" y="0" width="12" height="4" fill="#96a8e4"/><rect x="148" y="0" width="4" height="4" fill="#7e92d6"/><rect x="152" y="0" width="8" height="4" fill="#96a8e4"/><rect x="160" y="0" width="4" height="4" fill="#7e92d6"/><rect x="164" y="0" width="8" height="4" fill="#7284ca"/><rect x="172" y="0" width="8" height="4" fill="#6876bc"/><rect x="180" y="0" width="4" height="4" fill="#7284ca"/><rect x="184" y="0" width="8" height="4" fill="#6876bc"/><rect x="0" y="4" width="4" height="4" fill="#96a8e4"/><rect x="4" y="4" width="8" height="4" fill="#6876bc"/><rect x="12" y="4" width="8" height="4" fill="#7e92d6"/><rect x="20" y="4" width="4" height="4" fill="#7284ca"/><rect x="24" y="4" width="4" height="4" fill="#7e92d6"/><rect x="28" y="4" width="4" height="4" fill="#96a8e4"/><rect x="32" y="4" width="4" height="4" fill="#7284ca"/><rect x="36" y="4" width="4" height="4" fill="#7e92d6"/><rect x="40" y="4" width="4" height="4" fill="#7284ca"/><rect x="44" y="4" width="4" height="4" fill="#7e92d6"/><rect x="48" y="4" width="4" height="4" fill="#b0c0f0"/><rect x="52" y="4" width="8" height="4" fill="#ccd8fa"/><rect x="60" y="4" width="4" height="4" fill="#96a8e4"/><rect x="64" y="4" width="4" height="4" fill="#7e92d6"/><rect x="68" y="4" width="4" height="4" fill="#7284ca"/><rect x="72" y="4" width="4" height="4" fill="#b0c0f0"/><rect x="76" y="4" width="8" height="4" fill="#96a8e4"/><rect x="84" y="4" width="4" height="4" fill="#7e92d6"/><rect x="88" y="4" width="4" height="4" fill="#96a8e4"/><rect x="92" y="4" width="4" height="4" fill="#6876bc"/><rect x="96" y="4" width="4" height="4" fill="#505088"/><rect x="100" y="4" width="8" height="4" fill="#5e64a4"/><rect x="108" y="4" width="4" height="4" fill="#7284ca"/><rect x="112" y="4" width="8" height="4" fill="#6876bc"/><rect x="120" y="4" width="4" height="4" fill="#96a8e4"/><rect x="124" y="4" width="4" height="4" fill="#b0c0f0"/><rect x="128" y="4" width="4" height="4" fill="#7284ca"/><rect x="132" y="4" width="4" height="4" fill="#96a8e4"/><rect x="136" y="4" width="4" height="4" fill="#7284ca"/><rect x="140" y="4" width="4" height="4" fill="#96a8e4"/><rect x="144" y="4" width="4" height="4" fill="#7e92d6"/><rect x="148" y="4" width="12" height="4" fill="#7284ca"/><rect x="160" y="4" width="4" height="4" fill="#b0c0f0"/><rect x="164" y="4" width="8" height="4" fill="#7284ca"/><rect x="172" y="4" width="8" height="4" fill="#5e64a4"/><rect x="180" y="4" width="8" height="4" fill="#6876bc"/><rect x="188" y="4" width="4" height="4" fill="#5e64a4"/><rect x="0" y="8" width="4" height="4" fill="#7e92d6"/><rect x="4" y="8" width="4" height="4" fill="#7284ca"/><rect x="8" y="8" width="4" height="4" fill="#7e92d6"/><rect x="12" y="8" width="4" height="4" fill="#7284ca"/><rect x="16" y="8" width="4" height="4" fill="#b0c0f0"/><rect x="20" y="8" width="4" height="4" fill="#7e92d6"/><rect x="24" y="8" width="4" height="4" fill="#7284ca"/><rect x="28" y="8" width="4" height="4" fill="#6876bc"/><rect x="32" y="8" width="8" height="4" fill="#7284ca"/><rect x="40" y="8" width="4" height="4" fill="#5e64a4"/><rect x="44" y="8" width="4" height="4" fill="#6876bc"/><rect x="48" y="8" width="4" height="4" fill="#7284ca"/><rect x="52" y="8" width="4" height="4" fill="#96a8e4"/><rect x="56" y="8" width="4" height="4" fill="#b0c0f0"/><rect x="60" y="8" width="4" height="4" fill="#ccd8fa"/><rect x="64" y="8" width="4" height="4" fill="#5e64a4"/><rect x="68" y="8" width="8" height="4" fill="#7e92d6"/><rect x="76" y="8" width="4" height="4" fill="#96a8e4"/><rect x="80" y="8" width="4" height="4" fill="#b0c0f0"/><rect x="84" y="8" width="4" height="4" fill="#96a8e4"/><rect x="88" y="8" width="8" height="4" fill="#7e92d6"/><rect x="96" y="8" width="8" height="4" fill="#6876bc"/><rect x="104" y="8" width="4" height="4" fill="#7284ca"/><rect x="108" y="8" width="8" height="4" fill="#5e64a4"/><rect x="116" y="8" width="4" height="4" fill="#7284ca"/><rect x="120" y="8" width="4" height="4" fill="#6876bc"/><rect x="124" y="8" width="8" height="4" fill="#96a8e4"/><rect x="132" y="8" width="4" height="4" fill="#7e92d6"/><rect x="136" y="8" width="4" height="4" fill="#7284ca"/><rect x="140" y="8" width="8" height="4" fill="#7e92d6"/><rect x="148" y="8" width="4" height="4" fill="#5e64a4"/><rect x="152" y="8" width="8" height="4" fill="#b0c0f0"/><rect x="160" y="8" width="4" height="4" fill="#ccd8fa"/><rect x="164" y="8" width="4" height="4" fill="#7284ca"/><rect x="168" y="8" width="4" height="4" fill="#5e64a4"/><rect x="172" y="8" width="8" height="4" fill="#6876bc"/><rect x="180" y="8" width="8" height="4" fill="#ccd8fa"/><rect x="188" y="8" width="4" height="4" fill="#7284ca"/><rect x="0" y="12" width="8" height="4" fill="#7e92d6"/><rect x="8" y="12" width="4" height="4" fill="#6876bc"/><rect x="12" y="12" width="4" height="4" fill="#7e92d6"/><rect x="16" y="12" width="4" height="4" fill="#ccd8fa"/><rect x="20" y="12" width="4" height="4" fill="#96a8e4"/><rect x="24" y="12" width="4" height="4" fill="#7284ca"/><rect x="28" y="12" width="4" height="4" fill="#505088"/><rect x="32" y="12" width="4" height="4" fill="#6876bc"/><rect x="36" y="12" width="4" height="4" fill="#505088"/><rect x="40" y="12" width="4" height="4" fill="#6876bc"/><rect x="44" y="12" width="8" height="4" fill="#7284ca"/><rect x="52" y="12" width="8" height="4" fill="#5e64a4"/><rect x="60" y="12" width="4" height="4" fill="#7284ca"/><rect x="64" y="12" width="4" height="4" fill="#5e64a4"/><rect x="68" y="12" width="12" height="4" fill="#7284ca"/><rect x="80" y="12" width="4" height="4" fill="#96a8e4"/><rect x="84" y="12" width="12" height="4" fill="#7284ca"/><rect x="96" y="12" width="8" height="4" fill="#6876bc"/><rect x="104" y="12" width="12" height="4" fill="#7284ca"/><rect x="116" y="12" width="4" height="4" fill="#5e64a4"/><rect x="120" y="12" width="8" height="4" fill="#7284ca"/><rect x="128" y="12" width="4" height="4" fill="#96a8e4"/><rect x="132" y="12" width="8" height="4" fill="#7e92d6"/><rect x="140" y="12" width="4" height="4" fill="#6876bc"/><rect x="144" y="12" width="4" height="4" fill="#505088"/><rect x="148" y="12" width="4" height="4" fill="#6876bc"/><rect x="152" y="12" width="4" height="4" fill="#5e64a4"/><rect x="156" y="12" width="8" height="4" fill="#ccd8fa"/><rect x="164" y="12" width="4" height="4" fill="#96a8e4"/><rect x="168" y="12" width="4" height="4" fill="#7284ca"/><rect x="172" y="12" width="4" height="4" fill="#6876bc"/><rect x="176" y="12" width="4" height="4" fill="#505088"/><rect x="180" y="12" width="4" height="4" fill="#5e64a4"/><rect x="184" y="12" width="4" height="4" fill="#b0c0f0"/><rect x="188" y="12" width="4" height="4" fill="#ccd8fa"/><rect x="0" y="16" width="4" height="4" fill="#7284ca"/><rect x="4" y="16" width="8" height="4" fill="#6876bc"/><rect x="12" y="16" width="4" height="4" fill="#7284ca"/><rect x="16" y="16" width="4" height="4" fill="#7e92d6"/><rect x="20" y="16" width="4" height="4" fill="#ccd8fa"/><rect x="24" y="16" width="4" height="4" fill="#7284ca"/><rect x="28" y="16" width="4" height="4" fill="#5e64a4"/><rect x="32" y="16" width="4" height="4" fill="#505088"/><rect x="36" y="16" width="4" height="4" fill="#5e64a4"/><rect x="40" y="16" width="8" height="4" fill="#505088"/><rect x="48" y="16" width="4" height="4" fill="#6876bc"/><rect x="52" y="16" width="4" height="4" fill="#5e64a4"/><rect x="56" y="16" width="4" height="4" fill="#7284ca"/><rect x="60" y="16" width="4" height="4" fill="#6876bc"/><rect x="64" y="16" width="4" height="4" fill="#5e64a4"/><rect x="68" y="16" width="4" height="4" fill="#7284ca"/><rect x="72" y="16" width="4" height="4" fill="#6876bc"/><rect x="76" y="16" width="4" height="4" fill="#96a8e4"/><rect x="80" y="16" width="4" height="4" fill="#7284ca"/><rect x="84" y="16" width="4" height="4" fill="#7e92d6"/><rect x="88" y="16" width="4" height="4" fill="#b0c0f0"/><rect x="92" y="16" width="4" height="4" fill="#96a8e4"/><rect x="96" y="16" width="4" height="4" fill="#7284ca"/><rect x="100" y="16" width="4" height="4" fill="#6876bc"/><rect x="104" y="16" width="4" height="4" fill="#7e92d6"/><rect x="108" y="16" width="8" height="4" fill="#6876bc"/><rect x="116" y="16" width="4" height="4" fill="#5e64a4"/><rect x="120" y="16" width="4" height="4" fill="#b0c0f0"/><rect x="124" y="16" width="4" height="4" fill="#ccd8fa"/><rect x="128" y="16" width="12" height="4" fill="#7284ca"/><rect x="140" y="16" width="8" height="4" fill="#5e64a4"/><rect x="148" y="16" width="4" height="4" fill="#505088"/><rect x="152" y="16" width="4" height="4" fill="#7284ca"/><rect x="156" y="16" width="4" height="4" fill="#7e92d6"/><rect x="160" y="16" width="8" height="4" fill="#b0c0f0"/><rect x="168" y="16" width="4" height="4" fill="#7284ca"/><rect x="172" y="16" width="8" height="4" fill="#5e64a4"/><rect x="180" y="16" width="8" height="4" fill="#ccd8fa"/><rect x="188" y="16" width="4" height="4" fill="#505088"/><rect x="0" y="20" width="4" height="4" fill="#6876bc"/><rect x="4" y="20" width="4" height="4" fill="#5e64a4"/><rect x="8" y="20" width="4" height="4" fill="#6876bc"/><rect x="12" y="20" width="4" height="4" fill="#5e64a4"/><rect x="16" y="20" width="4" height="4" fill="#7e92d6"/><rect x="20" y="20" width="8" height="4" fill="#7284ca"/><rect x="28" y="20" width="4" height="4" fill="#505088"/><rect x="32" y="20" width="4" height="4" fill="#5e64a4"/><rect x="36" y="20" width="4" height="4" fill="#7284ca"/><rect x="40" y="20" width="12" height="4" fill="#6876bc"/><rect x="52" y="20" width="16" height="4" fill="#5e64a4"/><rect x="68" y="20" width="4" height="4" fill="#6876bc"/><rect x="72" y="20" width="4" height="4" fill="#96a8e4"/><rect x="76" y="20" width="4" height="4" fill="#7284ca"/><rect x="80" y="20" width="8" height="4" fill="#7e92d6"/><rect x="88" y="20" width="12" height="4" fill="#7284ca"/><rect x="100" y="20" width="4" height="4" fill="#7e92d6"/><rect x="104" y="20" width="4" height="4" fill="#5e64a4"/><rect x="108" y="20" width="4" height="4" fill="#7284ca"/><rect x="112" y="20" width="4" height="4" fill="#5e64a4"/><rect x="116" y="20" width="8" height="4" fill="#7284ca"/><rect x="124" y="20" width="4" height="4" fill="#7e92d6"/><rect x="128" y="20" width="4" height="4" fill="#ccd8fa"/><rect x="132" y="20" width="4" height="4" fill="#96a8e4"/><rect x="136" y="20" width="4" height="4" fill="#6876bc"/><rect x="140" y="20" width="4" height="4" fill="#7284ca"/><rect x="144" y="20" width="4" height="4" fill="#5e64a4"/><rect x="148" y="20" width="8" height="4" fill="#7284ca"/><rect x="156" y="20" width="4" height="4" fill="#6876bc"/><rect x="160" y="20" width="4" height="4" fill="#7284ca"/><rect x="164" y="20" width="8" height="4" fill="#6876bc"/><rect x="172" y="20" width="8" height="4" fill="#5e64a4"/><rect x="180" y="20" width="4" height="4" fill="#7284ca"/><rect x="184" y="20" width="4" height="4" fill="#5e64a4"/><rect x="188" y="20" width="4" height="4" fill="#ccd8fa"/><rect x="0" y="24" width="8" height="4" fill="#6876bc"/><rect x="8" y="24" width="8" height="4" fill="#7284ca"/><rect x="16" y="24" width="4" height="4" fill="#5e64a4"/><rect x="20" y="24" width="4" height="4" fill="#6876bc"/><rect x="24" y="24" width="4" height="4" fill="#7284ca"/><rect x="28" y="24" width="4" height="4" fill="#7e92d6"/><rect x="32" y="24" width="8" height="4" fill="#7284ca"/><rect x="40" y="24" width="4" height="4" fill="#7e92d6"/><rect x="44" y="24" width="4" height="4" fill="#5e64a4"/><rect x="48" y="24" width="4" height="4" fill="#6876bc"/><rect x="52" y="24" width="4" height="4" fill="#7e92d6"/><rect x="56" y="24" width="4" height="4" fill="#6876bc"/><rect x="60" y="24" width="4" height="4" fill="#5e64a4"/><rect x="64" y="24" width="4" height="4" fill="#6876bc"/><rect x="68" y="24" width="4" height="4" fill="#7e92d6"/><rect x="72" y="24" width="4" height="4" fill="#7284ca"/><rect x="76" y="24" width="8" height="4" fill="#7e92d6"/><rect x="84" y="24" width="4" height="4" fill="#7284ca"/><rect x="88" y="24" width="4" height="4" fill="#b0c0f0"/><rect x="92" y="24" width="4" height="4" fill="#7e92d6"/><rect x="96" y="24" width="4" height="4" fill="#96a8e4"/><rect x="100" y="24" width="8" height="4" fill="#6876bc"/><rect x="108" y="24" width="4" height="4" fill="#5e64a4"/><rect x="112" y="24" width="4" height="4" fill="#6876bc"/><rect x="116" y="24" width="4" height="4" fill="#5e64a4"/><rect x="120" y="24" width="4" height="4" fill="#6876bc"/><rect x="124" y="24" width="4" height="4" fill="#7284ca"/><rect x="128" y="24" width="4" height="4" fill="#6876bc"/><rect x="132" y="24" width="8" height="4" fill="#5e64a4"/><rect x="140" y="24" width="4" height="4" fill="#96a8e4"/><rect x="144" y="24" width="4" height="4" fill="#6876bc"/><rect x="148" y="24" width="8" height="4" fill="#7284ca"/><rect x="156" y="24" width="4" height="4" fill="#7e92d6"/><rect x="160" y="24" width="4" height="4" fill="#6876bc"/><rect x="164" y="24" width="4" height="4" fill="#7284ca"/><rect x="168" y="24" width="4" height="4" fill="#6876bc"/><rect x="172" y="24" width="4" height="4" fill="#7284ca"/><rect x="176" y="24" width="4" height="4" fill="#7e92d6"/><rect x="180" y="24" width="4" height="4" fill="#7284ca"/><rect x="184" y="24" width="4" height="4" fill="#7e92d6"/><rect x="188" y="24" width="4" height="4" fill="#6876bc"/><rect x="0" y="28" width="4" height="4" fill="#505088"/><rect x="4" y="28" width="12" height="4" fill="#6876bc"/><rect x="16" y="28" width="4" height="4" fill="#5e64a4"/><rect x="20" y="28" width="4" height="4" fill="#ccd8fa"/><rect x="24" y="28" width="4" height="4" fill="#b0c0f0"/><rect x="28" y="28" width="4" height="4" fill="#96a8e4"/><rect x="32" y="28" width="8" height="4" fill="#7e92d6"/><rect x="40" y="28" width="4" height="4" fill="#96a8e4"/><rect x="44" y="28" width="12" height="4" fill="#7284ca"/><rect x="56" y="28" width="4" height="4" fill="#6876bc"/><rect x="60" y="28" width="8" height="4" fill="#7284ca"/><rect x="68" y="28" width="8" height="4" fill="#6876bc"/><rect x="76" y="28" width="4" height="4" fill="#7284ca"/><rect x="80" y="28" width="4" height="4" fill="#7e92d6"/><rect x="84" y="28" width="4" height="4" fill="#7284ca"/><rect x="88" y="28" width="8" height="4" fill="#7e92d6"/><rect x="96" y="28" width="8" height="4" fill="#6876bc"/><rect x="104" y="28" width="4" height="4" fill="#7e92d6"/><rect x="108" y="28" width="16" height="4" fill="#6876bc"/><rect x="124" y="28" width="4" height="4" fill="#5e64a4"/><rect x="128" y="28" width="8" height="4" fill="#6876bc"/><rect x="136" y="28" width="8" height="4" fill="#7e92d6"/><rect x="144" y="28" width="4" height="4" fill="#b0c0f0"/><rect x="148" y="28" width="8" height="4" fill="#96a8e4"/><rect x="156" y="28" width="8" height="4" fill="#7e92d6"/><rect x="164" y="28" width="8" height="4" fill="#96a8e4"/><rect x="172" y="28" width="4" height="4" fill="#b0c0f0"/><rect x="176" y="28" width="8" height="4" fill="#96a8e4"/><rect x="184" y="28" width="4" height="4" fill="#7e92d6"/><rect x="188" y="28" width="4" height="4" fill="#96a8e4"/><rect x="0" y="32" width="4" height="4" fill="#5e64a4"/><rect x="4" y="32" width="12" height="4" fill="#505088"/><rect x="16" y="32" width="4" height="4" fill="#5e64a4"/><rect x="20" y="32" width="8" height="4" fill="#b0c0f0"/><rect x="28" y="32" width="4" height="4" fill="#ccd8fa"/><rect x="32" y="32" width="4" height="4" fill="#b0c0f0"/><rect x="36" y="32" width="4" height="4" fill="#96a8e4"/><rect x="40" y="32" width="12" height="4" fill="#7284ca"/><rect x="52" y="32" width="12" height="4" fill="#7e92d6"/><rect x="64" y="32" width="4" height="4" fill="#6876bc"/><rect x="68" y="32" width="4" height="4" fill="#5e64a4"/><rect x="72" y="32" width="4" height="4" fill="#7284ca"/><rect x="76" y="32" width="4" height="4" fill="#7e92d6"/><rect x="80" y="32" width="4" height="4" fill="#96a8e4"/><rect x="84" y="32" width="4" height="4" fill="#7284ca"/><rect x="88" y="32" width="12" height="4" fill="#7e92d6"/><rect x="100" y="32" width="4" height="4" fill="#6876bc"/><rect x="104" y="32" width="8" height="4" fill="#7284ca"/><rect x="112" y="32" width="4" height="4" fill="#7e92d6"/><rect x="116" y="32" width="4" height="4" fill="#7284ca"/><rect x="120" y="32" width="4" height="4" fill="#7e92d6"/><rect x="124" y="32" width="4" height="4" fill="#7284ca"/><rect x="128" y="32" width="4" height="4" fill="#505088"/><rect x="132" y="32" width="4" height="4" fill="#5e64a4"/><rect x="136" y="32" width="4" height="4" fill="#96a8e4"/><rect x="140" y="32" width="4" height="4" fill="#7e92d6"/><rect x="144" y="32" width="16" height="4" fill="#96a8e4"/><rect x="160" y="32" width="4" height="4" fill="#7e92d6"/><rect x="164" y="32" width="8" height="4" fill="#96a8e4"/><rect x="172" y="32" width="4" height="4" fill="#7e92d6"/><rect x="176" y="32" width="4" height="4" fill="#b0c0f0"/><rect x="180" y="32" width="4" height="4" fill="#96a8e4"/><rect x="184" y="32" width="4" height="4" fill="#7284ca"/><rect x="188" y="32" width="4" height="4" fill="#b0c0f0"/><rect x="0" y="36" width="4" height="4" fill="#505088"/><rect x="4" y="36" width="4" height="4" fill="#6876bc"/><rect x="8" y="36" width="4" height="4" fill="#5e64a4"/><rect x="12" y="36" width="4" height="4" fill="#7284ca"/><rect x="16" y="36" width="8" height="4" fill="#5e64a4"/><rect x="24" y="36" width="4" height="4" fill="#6876bc"/><rect x="28" y="36" width="8" height="4" fill="#ccd8fa"/><rect x="36" y="36" width="4" height="4" fill="#7e92d6"/><rect x="40" y="36" width="4" height="4" fill="#96a8e4"/><rect x="44" y="36" width="4" height="4" fill="#7284ca"/><rect x="48" y="36" width="4" height="4" fill="#7e92d6"/><rect x="52" y="36" width="4" height="4" fill="#7284ca"/><rect x="56" y="36" width="4" height="4" fill="#7e92d6"/><rect x="60" y="36" width="4" height="4" fill="#7284ca"/><rect x="64" y="36" width="8" height="4" fill="#ccd8fa"/><rect x="72" y="36" width="8" height="4" fill="#7284ca"/><rect x="80" y="36" width="8" height="4" fill="#b0c0f0"/><rect x="88" y="36" width="8" height="4" fill="#6876bc"/><rect x="96" y="36" width="4" height="4" fill="#5e64a4"/><rect x="100" y="36" width="8" height="4" fill="#7e92d6"/><rect x="108" y="36" width="4" height="4" fill="#7284ca"/><rect x="112" y="36" width="4" height="4" fill="#96a8e4"/><rect x="116" y="36" width="12" height="4" fill="#7284ca"/><rect x="128" y="36" width="4" height="4" fill="#6876bc"/><rect x="132" y="36" width="8" height="4" fill="#7284ca"/><rect x="140" y="36" width="4" height="4" fill="#6876bc"/><rect x="144" y="36" width="8" height="4" fill="#96a8e4"/><rect x="152" y="36" width="4" height="4" fill="#7284ca"/><rect x="156" y="36" width="4" height="4" fill="#7e92d6"/><rect x="160" y="36" width="4" height="4" fill="#7284ca"/><rect x="164" y="36" width="4" height="4" fill="#6876bc"/><rect x="168" y="36" width="8" height="4" fill="#7e92d6"/><rect x="176" y="36" width="8" height="4" fill="#96a8e4"/><rect x="184" y="36" width="4" height="4" fill="#7e92d6"/><rect x="188" y="36" width="4" height="4" fill="#b0c0f0"/><rect x="0" y="40" width="8" height="4" fill="#7284ca"/><rect x="8" y="40" width="8" height="4" fill="#b0c0f0"/><rect x="16" y="40" width="4" height="4" fill="#5e64a4"/><rect x="20" y="40" width="4" height="4" fill="#7284ca"/><rect x="24" y="40" width="4" height="4" fill="#6876bc"/><rect x="28" y="40" width="4" height="4" fill="#7284ca"/><rect x="32" y="40" width="4" height="4" fill="#7e92d6"/><rect x="36" y="40" width="4" height="4" fill="#b0c0f0"/><rect x="40" y="40" width="4" height="4" fill="#6876bc"/><rect x="44" y="40" width="8" height="4" fill="#5e64a4"/><rect x="52" y="40" width="4" height="4" fill="#6876bc"/><rect x="56" y="40" width="12" height="4" fill="#7284ca"/><rect x="68" y="40" width="4" height="4" fill="#6876bc"/><rect x="72" y="40" width="4" height="4" fill="#7e92d6"/><rect x="76" y="40" width="4" height="4" fill="#7284ca"/><rect x="80" y="40" width="4" height="4" fill="#96a8e4"/><rect x="84" y="40" width="4" height="4" fill="#ccd8fa"/><rect x="88" y="40" width="4" height="4" fill="#7e92d6"/><rect x="92" y="40" width="16" height="4" fill="#7284ca"/><rect x="108" y="40" width="12" height="4" fill="#7e92d6"/><rect x="120" y="40" width="8" height="4" fill="#6876bc"/><rect x="128" y="40" width="4" height="4" fill="#7284ca"/><rect x="132" y="40" width="4" height="4" fill="#5e64a4"/><rect x="136" y="40" width="4" height="4" fill="#7e92d6"/><rect x="140" y="40" width="8" height="4" fill="#7284ca"/><rect x="148" y="40" width="4" height="4" fill="#6876bc"/><rect x="152" y="40" width="8" height="4" fill="#7284ca"/><rect x="160" y="40" width="12" height="4" fill="#96a8e4"/><rect x="172" y="40" width="8" height="4" fill="#7e92d6"/><rect x="180" y="40" width="4" height="4" fill="#7284ca"/><rect x="184" y="40" width="8" height="4" fill="#7e92d6"/><rect x="0" y="44" width="4" height="4" fill="#7284ca"/><rect x="4" y="44" width="4" height="4" fill="#6876bc"/><rect x="8" y="44" width="4" height="4" fill="#7284ca"/><rect x="12" y="44" width="8" height="4" fill="#ccd8fa"/><rect x="20" y="44" width="4" height="4" fill="#5e64a4"/><rect x="24" y="44" width="4" height="4" fill="#6876bc"/><rect x="28" y="44" width="4" height="4" fill="#7284ca"/><rect x="32" y="44" width="4" height="4" fill="#5e64a4"/><rect x="36" y="44" width="8" height="4" fill="#6876bc"/><rect x="44" y="44" width="4" height="4" fill="#5e64a4"/><rect x="48" y="44" width="4" height="4" fill="#505088"/><rect x="52" y="44" width="4" height="4" fill="#6876bc"/><rect x="56" y="44" width="8" height="4" fill="#7284ca"/><rect x="64" y="44" width="4" height="4" fill="#b0c0f0"/><rect x="68" y="44" width="4" height="4" fill="#ccd8fa"/><rect x="72" y="44" width="8" height="4" fill="#7284ca"/><rect x="80" y="44" width="4" height="4" fill="#96a8e4"/><rect x="84" y="44" width="4" height="4" fill="#7284ca"/><rect x="88" y="44" width="4" height="4" fill="#ccd8fa"/><rect x="92" y="44" width="8" height="4" fill="#6876bc"/><rect x="100" y="44" width="8" height="4" fill="#b0c0f0"/><rect x="108" y="44" width="4" height="4" fill="#6876bc"/><rect x="112" y="44" width="8" height="4" fill="#7e92d6"/><rect x="120" y="44" width="4" height="4" fill="#6876bc"/><rect x="124" y="44" width="4" height="4" fill="#5e64a4"/><rect x="128" y="44" width="4" height="4" fill="#6876bc"/><rect x="132" y="44" width="12" height="4" fill="#7284ca"/><rect x="144" y="44" width="4" height="4" fill="#5e64a4"/><rect x="148" y="44" width="4" height="4" fill="#7284ca"/><rect x="152" y="44" width="4" height="4" fill="#7e92d6"/><rect x="156" y="44" width="4" height="4" fill="#96a8e4"/><rect x="160" y="44" width="4" height="4" fill="#7e92d6"/><rect x="164" y="44" width="4" height="4" fill="#96a8e4"/><rect x="168" y="44" width="4" height="4" fill="#7e92d6"/><rect x="172" y="44" width="4" height="4" fill="#96a8e4"/><rect x="176" y="44" width="4" height="4" fill="#6876bc"/><rect x="180" y="44" width="8" height="4" fill="#7e92d6"/><rect x="188" y="44" width="4" height="4" fill="#6876bc"/><rect x="0" y="48" width="4" height="4" fill="#5e64a4"/><rect x="4" y="48" width="4" height="4" fill="#b0c0f0"/><rect x="8" y="48" width="4" height="4" fill="#ccd8fa"/><rect x="12" y="48" width="8" height="4" fill="#505088"/><rect x="20" y="48" width="4" height="4" fill="#6876bc"/><rect x="24" y="48" width="4" height="4" fill="#505088"/><rect x="28" y="48" width="4" height="4" fill="#6876bc"/><rect x="32" y="48" width="4" height="4" fill="#ccd8fa"/><rect x="36" y="48" width="24" height="4" fill="#6876bc"/><rect x="60" y="48" width="4" height="4" fill="#7284ca"/><rect x="64" y="48" width="8" height="4" fill="#5e64a4"/><rect x="72" y="48" width="4" height="4" fill="#ccd8fa"/><rect x="76" y="48" width="4" height="4" fill="#6876bc"/><rect x="80" y="48" width="8" height="4" fill="#7284ca"/><rect x="88" y="48" width="8" height="4" fill="#6876bc"/><rect x="96" y="48" width="4" height="4" fill="#505088"/><rect x="100" y="48" width="4" height="4" fill="#5e64a4"/><rect x="104" y="48" width="8" height="4" fill="#ccd8fa"/><rect x="112" y="48" width="4" height="4" fill="#6876bc"/><rect x="116" y="48" width="4" height="4" fill="#7e92d6"/><rect x="120" y="48" width="4" height="4" fill="#6876bc"/><rect x="124" y="48" width="4" height="4" fill="#7284ca"/><rect x="128" y="48" width="4" height="4" fill="#6876bc"/><rect x="132" y="48" width="4" height="4" fill="#7e92d6"/><rect x="136" y="48" width="4" height="4" fill="#7284ca"/><rect x="140" y="48" width="4" height="4" fill="#5e64a4"/><rect x="144" y="48" width="16" height="4" fill="#7284ca"/><rect x="160" y="48" width="16" height="4" fill="#7e92d6"/><rect x="176" y="48" width="8" height="4" fill="#6876bc"/><rect x="184" y="48" width="4" height="4" fill="#ccd8fa"/><rect x="188" y="48" width="4" height="4" fill="#b0c0f0"/><rect x="0" y="52" width="4" height="4" fill="#7284ca"/><rect x="4" y="52" width="4" height="4" fill="#6876bc"/><rect x="8" y="52" width="8" height="4" fill="#ccd8fa"/><rect x="16" y="52" width="4" height="4" fill="#6876bc"/><rect x="20" y="52" width="4" height="4" fill="#5e64a4"/><rect x="24" y="52" width="4" height="4" fill="#505088"/><rect x="28" y="52" width="4" height="4" fill="#5e64a4"/><rect x="32" y="52" width="4" height="4" fill="#ccd8fa"/><rect x="36" y="52" width="4" height="4" fill="#6876bc"/><rect x="40" y="52" width="12" height="4" fill="#505088"/><rect x="52" y="52" width="4" height="4" fill="#5e64a4"/><rect x="56" y="52" width="4" height="4" fill="#b0c0f0"/><rect x="60" y="52" width="4" height="4" fill="#ccd8fa"/><rect x="64" y="52" width="4" height="4" fill="#6876bc"/><rect x="68" y="52" width="4" height="4" fill="#7e92d6"/><rect x="72" y="52" width="4" height="4" fill="#6876bc"/><rect x="76" y="52" width="4" height="4" fill="#7284ca"/><rect x="80" y="52" width="4" height="4" fill="#96a8e4"/><rect x="84" y="52" width="4" height="4" fill="#5e64a4"/><rect x="88" y="52" width="4" height="4" fill="#7284ca"/><rect x="92" y="52" width="4" height="4" fill="#5e64a4"/><rect x="96" y="52" width="8" height="4" fill="#505088"/><rect x="104" y="52" width="4" height="4" fill="#6876bc"/><rect x="108" y="52" width="4" height="4" fill="#7284ca"/><rect x="112" y="52" width="4" height="4" fill="#7e92d6"/><rect x="116" y="52" width="8" height="4" fill="#6876bc"/><rect x="124" y="52" width="4" height="4" fill="#7e92d6"/><rect x="128" y="52" width="8" height="4" fill="#6876bc"/><rect x="136" y="52" width="4" height="4" fill="#ccd8fa"/><rect x="140" y="52" width="4" height="4" fill="#b0c0f0"/><rect x="144" y="52" width="4" height="4" fill="#7e92d6"/><rect x="148" y="52" width="8" height="4" fill="#7284ca"/><rect x="156" y="52" width="4" height="4" fill="#6876bc"/><rect x="160" y="52" width="4" height="4" fill="#7284ca"/><rect x="164" y="52" width="4" height="4" fill="#7e92d6"/><rect x="168" y="52" width="8" height="4" fill="#7284ca"/><rect x="176" y="52" width="4" height="4" fill="#7e92d6"/><rect x="180" y="52" width="8" height="4" fill="#7284ca"/><rect x="188" y="52" width="4" height="4" fill="#505088"/><rect x="0" y="56" width="4" height="4" fill="#5e64a4"/><rect x="4" y="56" width="4" height="4" fill="#7e92d6"/><rect x="8" y="56" width="4" height="4" fill="#6876bc"/><rect x="12" y="56" width="4" height="4" fill="#7284ca"/><rect x="16" y="56" width="4" height="4" fill="#6876bc"/><rect x="20" y="56" width="4" height="4" fill="#7284ca"/><rect x="24" y="56" width="4" height="4" fill="#6876bc"/><rect x="28" y="56" width="8" height="4" fill="#7e92d6"/><rect x="36" y="56" width="4" height="4" fill="#b0c0f0"/><rect x="40" y="56" width="4" height="4" fill="#5e64a4"/><rect x="44" y="56" width="4" height="4" fill="#6876bc"/><rect x="48" y="56" width="4" height="4" fill="#505088"/><rect x="52" y="56" width="4" height="4" fill="#7284ca"/><rect x="56" y="56" width="4" height="4" fill="#ccd8fa"/><rect x="60" y="56" width="4" height="4" fill="#b0c0f0"/><rect x="64" y="56" width="4" height="4" fill="#7284ca"/><rect x="68" y="56" width="4" height="4" fill="#6876bc"/><rect x="72" y="56" width="8" height="4" fill="#7284ca"/><rect x="80" y="56" width="4" height="4" fill="#7e92d6"/><rect x="84" y="56" width="4" height="4" fill="#6876bc"/><rect x="88" y="56" width="8" height="4" fill="#5e64a4"/><rect x="96" y="56" width="4" height="4" fill="#505088"/><rect x="100" y="56" width="4" height="4" fill="#5e64a4"/><rect x="104" y="56" width="4" height="4" fill="#7e92d6"/><rect x="108" y="56" width="4" height="4" fill="#96a8e4"/><rect x="112" y="56" width="4" height="4" fill="#7284ca"/><rect x="116" y="56" width="4" height="4" fill="#6876bc"/><rect x="120" y="56" width="8" height="4" fill="#7e92d6"/><rect x="128" y="56" width="4" height="4" fill="#6876bc"/><rect x="132" y="56" width="4" height="4" fill="#5e64a4"/><rect x="136" y="56" width="4" height="4" fill="#6876bc"/><rect x="140" y="56" width="4" height="4" fill="#b0c0f0"/><rect x="144" y="56" width="4" height="4" fill="#ccd8fa"/><rect x="148" y="56" width="4" height="4" fill="#5e64a4"/><rect x="152" y="56" width="12" height="4" fill="#6876bc"/><rect x="164" y="56" width="4" height="4" fill="#7284ca"/><rect x="168" y="56" width="4" height="4" fill="#6876bc"/><rect x="172" y="56" width="4" height="4" fill="#7284ca"/><rect x="176" y="56" width="4" height="4" fill="#5e64a4"/><rect x="180" y="56" width="4" height="4" fill="#6876bc"/><rect x="184" y="56" width="4" height="4" fill="#7284ca"/><rect x="188" y="56" width="4" height="4" fill="#6876bc"/><rect x="0" y="60" width="8" height="4" fill="#6876bc"/><rect x="8" y="60" width="4" height="4" fill="#7284ca"/><rect x="12" y="60" width="4" height="4" fill="#5e64a4"/><rect x="16" y="60" width="4" height="4" fill="#505088"/><rect x="20" y="60" width="4" height="4" fill="#5e64a4"/><rect x="24" y="60" width="4" height="4" fill="#7284ca"/><rect x="28" y="60" width="4" height="4" fill="#96a8e4"/><rect x="32" y="60" width="8" height="4" fill="#7e92d6"/><rect x="40" y="60" width="4" height="4" fill="#6876bc"/><rect x="44" y="60" width="8" height="4" fill="#5e64a4"/><rect x="52" y="60" width="4" height="4" fill="#505088"/><rect x="56" y="60" width="4" height="4" fill="#6876bc"/><rect x="60" y="60" width="4" height="4" fill="#7e92d6"/><rect x="64" y="60" width="4" height="4" fill="#6876bc"/><rect x="68" y="60" width="4" height="4" fill="#96a8e4"/><rect x="72" y="60" width="8" height="4" fill="#7e92d6"/><rect x="80" y="60" width="8" height="4" fill="#96a8e4"/><rect x="88" y="60" width="8" height="4" fill="#5e64a4"/><rect x="96" y="60" width="4" height="4" fill="#505088"/><rect x="100" y="60" width="4" height="4" fill="#5e64a4"/><rect x="104" y="60" width="8" height="4" fill="#6876bc"/><rect x="112" y="60" width="16" height="4" fill="#7e92d6"/><rect x="128" y="60" width="4" height="4" fill="#b0c0f0"/><rect x="132" y="60" width="4" height="4" fill="#6876bc"/><rect x="136" y="60" width="4" height="4" fill="#7284ca"/><rect x="140" y="60" width="12" height="4" fill="#7e92d6"/><rect x="152" y="60" width="4" height="4" fill="#5e64a4"/><rect x="156" y="60" width="4" height="4" fill="#505088"/><rect x="160" y="60" width="4" height="4" fill="#6876bc"/><rect x="164" y="60" width="4" height="4" fill="#505088"/><rect x="168" y="60" width="4" height="4" fill="#5e64a4"/><rect x="172" y="60" width="4" height="4" fill="#ccd8fa"/><rect x="176" y="60" width="8" height="4" fill="#5e64a4"/><rect x="184" y="60" width="4" height="4" fill="#7284ca"/><rect x="188" y="60" width="4" height="4" fill="#5e64a4"/><rect x="0" y="64" width="8" height="4" fill="#7e92d6"/><rect x="8" y="64" width="12" height="4" fill="#5e64a4"/><rect x="20" y="64" width="4" height="4" fill="#6876bc"/><rect x="24" y="64" width="4" height="4" fill="#ccd8fa"/><rect x="28" y="64" width="4" height="4" fill="#b0c0f0"/><rect x="32" y="64" width="4" height="4" fill="#7e92d6"/><rect x="36" y="64" width="4" height="4" fill="#7284ca"/><rect x="40" y="64" width="4" height="4" fill="#6876bc"/><rect x="44" y="64" width="4" height="4" fill="#505088"/><rect x="48" y="64" width="4" height="4" fill="#6876bc"/><rect x="52" y="64" width="4" height="4" fill="#505088"/><rect x="56" y="64" width="4" height="4" fill="#6876bc"/><rect x="60" y="64" width="4" height="4" fill="#7e92d6"/><rect x="64" y="64" width="4" height="4" fill="#96a8e4"/><rect x="68" y="64" width="4" height="4" fill="#7284ca"/><rect x="72" y="64" width="8" height="4" fill="#96a8e4"/><rect x="80" y="64" width="8" height="4" fill="#7e92d6"/><rect x="88" y="64" width="4" height="4" fill="#6876bc"/><rect x="92" y="64" width="4" height="4" fill="#505088"/><rect x="96" y="64" width="4" height="4" fill="#6876bc"/><rect x="100" y="64" width="4" height="4" fill="#5e64a4"/><rect x="104" y="64" width="4" height="4" fill="#7e92d6"/><rect x="108" y="64" width="8" height="4" fill="#7284ca"/><rect x="116" y="64" width="4" height="4" fill="#6876bc"/><rect x="120" y="64" width="4" height="4" fill="#ccd8fa"/><rect x="124" y="64" width="4" height="4" fill="#7284ca"/><rect x="128" y="64" width="4" height="4" fill="#b0c0f0"/><rect x="132" y="64" width="4" height="4" fill="#5e64a4"/><rect x="136" y="64" width="4" height="4" fill="#7e92d6"/><rect x="140" y="64" width="4" height="4" fill="#7284ca"/><rect x="144" y="64" width="4" height="4" fill="#ccd8fa"/><rect x="148" y="64" width="4" height="4" fill="#5e64a4"/><rect x="152" y="64" width="4" height="4" fill="#6876bc"/><rect x="156" y="64" width="4" height="4" fill="#505088"/><rect x="160" y="64" width="12" height="4" fill="#5e64a4"/><rect x="172" y="64" width="4" height="4" fill="#ccd8fa"/><rect x="176" y="64" width="4" height="4" fill="#6876bc"/><rect x="180" y="64" width="8" height="4" fill="#505088"/><rect x="188" y="64" width="4" height="4" fill="#6876bc"/><rect x="0" y="68" width="16" height="4" fill="#6876bc"/><rect x="16" y="68" width="8" height="4" fill="#7284ca"/><rect x="24" y="68" width="4" height="4" fill="#6876bc"/><rect x="28" y="68" width="4" height="4" fill="#96a8e4"/><rect x="32" y="68" width="4" height="4" fill="#b0c0f0"/><rect x="36" y="68" width="4" height="4" fill="#7284ca"/><rect x="40" y="68" width="4" height="4" fill="#7e92d6"/><rect x="44" y="68" width="8" height="4" fill="#5e64a4"/><rect x="52" y="68" width="4" height="4" fill="#505088"/><rect x="56" y="68" width="8" height="4" fill="#7284ca"/><rect x="64" y="68" width="4" height="4" fill="#96a8e4"/><rect x="68" y="68" width="4" height="4" fill="#7e92d6"/><rect x="72" y="68" width="12" height="4" fill="#7284ca"/><rect x="84" y="68" width="4" height="4" fill="#96a8e4"/><rect x="88" y="68" width="4" height="4" fill="#6876bc"/><rect x="92" y="68" width="12" height="4" fill="#505088"/><rect x="104" y="68" width="4" height="4" fill="#6876bc"/><rect x="108" y="68" width="4" height="4" fill="#7e92d6"/><rect x="112" y="68" width="4" height="4" fill="#96a8e4"/><rect x="116" y="68" width="4" height="4" fill="#7284ca"/><rect x="120" y="68" width="4" height="4" fill="#ccd8fa"/><rect x="124" y="68" width="4" height="4" fill="#6876bc"/><rect x="128" y="68" width="4" height="4" fill="#7284ca"/><rect x="132" y="68" width="4" height="4" fill="#b0c0f0"/><rect x="136" y="68" width="4" height="4" fill="#7284ca"/><rect x="140" y="68" width="4" height="4" fill="#7e92d6"/><rect x="144" y="68" width="4" height="4" fill="#b0c0f0"/><rect x="148" y="68" width="16" height="4" fill="#6876bc"/><rect x="164" y="68" width="4" height="4" fill="#5e64a4"/><rect x="168" y="68" width="4" height="4" fill="#ccd8fa"/><rect x="172" y="68" width="4" height="4" fill="#b0c0f0"/><rect x="176" y="68" width="4" height="4" fill="#ccd8fa"/><rect x="180" y="68" width="4" height="4" fill="#6876bc"/><rect x="184" y="68" width="4" height="4" fill="#5e64a4"/><rect x="188" y="68" width="4" height="4" fill="#505088"/><rect x="0" y="72" width="8" height="4" fill="#6876bc"/><rect x="8" y="72" width="4" height="4" fill="#7e92d6"/><rect x="12" y="72" width="4" height="4" fill="#6876bc"/><rect x="16" y="72" width="8" height="4" fill="#7284ca"/><rect x="24" y="72" width="4" height="4" fill="#96a8e4"/><rect x="28" y="72" width="4" height="4" fill="#7284ca"/><rect x="32" y="72" width="4" height="4" fill="#b0c0f0"/><rect x="36" y="72" width="4" height="4" fill="#7e92d6"/><rect x="40" y="72" width="4" height="4" fill="#7284ca"/><rect x="44" y="72" width="8" height="4" fill="#7e92d6"/><rect x="52" y="72" width="4" height="4" fill="#7284ca"/><rect x="56" y="72" width="4" height="4" fill="#5e64a4"/><rect x="60" y="72" width="4" height="4" fill="#96a8e4"/><rect x="64" y="72" width="4" height="4" fill="#7284ca"/><rect x="68" y="72" width="8" height="4" fill="#7e92d6"/><rect x="76" y="72" width="12" height="4" fill="#7284ca"/><rect x="88" y="72" width="8" height="4" fill="#5e64a4"/><rect x="96" y="72" width="8" height="4" fill="#6876bc"/><rect x="104" y="72" width="4" height="4" fill="#7e92d6"/><rect x="108" y="72" width="4" height="4" fill="#6876bc"/><rect x="112" y="72" width="4" height="4" fill="#7e92d6"/><rect x="116" y="72" width="4" height="4" fill="#7284ca"/><rect x="120" y="72" width="4" height="4" fill="#7e92d6"/><rect x="124" y="72" width="4" height="4" fill="#ccd8fa"/><rect x="128" y="72" width="4" height="4" fill="#7284ca"/><rect x="132" y="72" width="8" height="4" fill="#ccd8fa"/><rect x="140" y="72" width="8" height="4" fill="#7284ca"/><rect x="148" y="72" width="4" height="4" fill="#ccd8fa"/><rect x="152" y="72" width="4" height="4" fill="#7284ca"/><rect x="156" y="72" width="4" height="4" fill="#6876bc"/><rect x="160" y="72" width="4" height="4" fill="#5e64a4"/><rect x="164" y="72" width="4" height="4" fill="#6876bc"/><rect x="168" y="72" width="8" height="4" fill="#7e92d6"/><rect x="176" y="72" width="4" height="4" fill="#ccd8fa"/><rect x="180" y="72" width="4" height="4" fill="#5e64a4"/><rect x="184" y="72" width="4" height="4" fill="#7284ca"/><rect x="188" y="72" width="4" height="4" fill="#505088"/><rect x="0" y="76" width="4" height="4" fill="#6876bc"/><rect x="4" y="76" width="4" height="4" fill="#5e64a4"/><rect x="8" y="76" width="4" height="4" fill="#7e92d6"/><rect x="12" y="76" width="12" height="4" fill="#7284ca"/><rect x="24" y="76" width="4" height="4" fill="#7e92d6"/><rect x="28" y="76" width="4" height="4" fill="#b0c0f0"/><rect x="32" y="76" width="4" height="4" fill="#96a8e4"/><rect x="36" y="76" width="4" height="4" fill="#7e92d6"/><rect x="40" y="76" width="4" height="4" fill="#96a8e4"/><rect x="44" y="76" width="4" height="4" fill="#b0c0f0"/><rect x="48" y="76" width="8" height="4" fill="#7e92d6"/><rect x="56" y="76" width="4" height="4" fill="#96a8e4"/><rect x="60" y="76" width="4" height="4" fill="#6876bc"/><rect x="64" y="76" width="8" height="4" fill="#7284ca"/><rect x="72" y="76" width="4" height="4" fill="#ccd8fa"/><rect x="76" y="76" width="4" height="4" fill="#b0c0f0"/><rect x="80" y="76" width="4" height="4" fill="#7e92d6"/><rect x="84" y="76" width="8" height="4" fill="#6876bc"/><rect x="92" y="76" width="4" height="4" fill="#7e92d6"/><rect x="96" y="76" width="12" height="4" fill="#7284ca"/><rect x="108" y="76" width="4" height="4" fill="#96a8e4"/><rect x="112" y="76" width="4" height="4" fill="#7284ca"/><rect x="116" y="76" width="8" height="4" fill="#7e92d6"/><rect x="124" y="76" width="4" height="4" fill="#6876bc"/><rect x="128" y="76" width="4" height="4" fill="#505088"/><rect x="132" y="76" width="4" height="4" fill="#5e64a4"/><rect x="136" y="76" width="4" height="4" fill="#7284ca"/><rect x="140" y="76" width="4" height="4" fill="#7e92d6"/><rect x="144" y="76" width="4" height="4" fill="#7284ca"/><rect x="148" y="76" width="4" height="4" fill="#96a8e4"/><rect x="152" y="76" width="8" height="4" fill="#7284ca"/><rect x="160" y="76" width="4" height="4" fill="#6876bc"/><rect x="164" y="76" width="8" height="4" fill="#7e92d6"/><rect x="172" y="76" width="4" height="4" fill="#96a8e4"/><rect x="176" y="76" width="4" height="4" fill="#7284ca"/><rect x="180" y="76" width="4" height="4" fill="#7e92d6"/><rect x="184" y="76" width="4" height="4" fill="#5e64a4"/><rect x="188" y="76" width="4" height="4" fill="#6876bc"/><rect x="0" y="80" width="12" height="4" fill="#5e64a4"/><rect x="12" y="80" width="4" height="4" fill="#7e92d6"/><rect x="16" y="80" width="4" height="4" fill="#7284ca"/><rect x="20" y="80" width="4" height="4" fill="#96a8e4"/><rect x="24" y="80" width="4" height="4" fill="#7e92d6"/><rect x="28" y="80" width="12" height="4" fill="#96a8e4"/><rect x="40" y="80" width="8" height="4" fill="#b0c0f0"/><rect x="48" y="80" width="8" height="4" fill="#7e92d6"/><rect x="56" y="80" width="4" height="4" fill="#96a8e4"/><rect x="60" y="80" width="4" height="4" fill="#5e64a4"/><rect x="64" y="80" width="8" height="4" fill="#ccd8fa"/><rect x="72" y="80" width="4" height="4" fill="#7e92d6"/><rect x="76" y="80" width="4" height="4" fill="#5e64a4"/><rect x="80" y="80" width="8" height="4" fill="#ccd8fa"/><rect x="88" y="80" width="4" height="4" fill="#7284ca"/><rect x="92" y="80" width="4" height="4" fill="#5e64a4"/><rect x="96" y="80" width="4" height="4" fill="#7e92d6"/><rect x="100" y="80" width="4" height="4" fill="#7284ca"/><rect x="104" y="80" width="8" height="4" fill="#96a8e4"/><rect x="112" y="80" width="4" height="4" fill="#7e92d6"/><rect x="116" y="80" width="4" height="4" fill="#96a8e4"/><rect x="120" y="80" width="4" height="4" fill="#7284ca"/><rect x="124" y="80" width="4" height="4" fill="#5e64a4"/><rect x="128" y="80" width="4" height="4" fill="#6876bc"/><rect x="132" y="80" width="4" height="4" fill="#5e64a4"/><rect x="136" y="80" width="4" height="4" fill="#7284ca"/><rect x="140" y="80" width="4" height="4" fill="#7e92d6"/><rect x="144" y="80" width="4" height="4" fill="#96a8e4"/><rect x="148" y="80" width="4" height="4" fill="#7284ca"/><rect x="152" y="80" width="4" height="4" fill="#7e92d6"/><rect x="156" y="80" width="4" height="4" fill="#7284ca"/><rect x="160" y="80" width="8" height="4" fill="#96a8e4"/><rect x="168" y="80" width="4" height="4" fill="#b0c0f0"/><rect x="172" y="80" width="4" height="4" fill="#7284ca"/><rect x="176" y="80" width="4" height="4" fill="#96a8e4"/><rect x="180" y="80" width="4" height="4" fill="#7e92d6"/><rect x="184" y="80" width="4" height="4" fill="#5e64a4"/><rect x="188" y="80" width="4" height="4" fill="#505088"/><rect x="0" y="84" width="8" height="4" fill="#7284ca"/><rect x="8" y="84" width="4" height="4" fill="#6876bc"/><rect x="12" y="84" width="4" height="4" fill="#7e92d6"/><rect x="16" y="84" width="4" height="4" fill="#b0c0f0"/><rect x="20" y="84" width="4" height="4" fill="#7e92d6"/><rect x="24" y="84" width="4" height="4" fill="#96a8e4"/><rect x="28" y="84" width="8" height="4" fill="#7e92d6"/><rect x="36" y="84" width="4" height="4" fill="#7284ca"/><rect x="40" y="84" width="8" height="4" fill="#96a8e4"/><rect x="48" y="84" width="4" height="4" fill="#b0c0f0"/><rect x="52" y="84" width="4" height="4" fill="#96a8e4"/><rect x="56" y="84" width="4" height="4" fill="#7284ca"/><rect x="60" y="84" width="4" height="4" fill="#6876bc"/><rect x="64" y="84" width="8" height="4" fill="#ccd8fa"/><rect x="72" y="84" width="8" height="4" fill="#7284ca"/><rect x="80" y="84" width="4" height="4" fill="#6876bc"/><rect x="84" y="84" width="4" height="4" fill="#7284ca"/><rect x="88" y="84" width="4" height="4" fill="#b0c0f0"/><rect x="92" y="84" width="4" height="4" fill="#6876bc"/><rect x="96" y="84" width="4" height="4" fill="#7e92d6"/><rect x="100" y="84" width="12" height="4" fill="#6876bc"/><rect x="112" y="84" width="4" height="4" fill="#96a8e4"/><rect x="116" y="84" width="8" height="4" fill="#6876bc"/><rect x="124" y="84" width="4" height="4" fill="#5e64a4"/><rect x="128" y="84" width="4" height="4" fill="#6876bc"/><rect x="132" y="84" width="4" height="4" fill="#5e64a4"/><rect x="136" y="84" width="8" height="4" fill="#6876bc"/><rect x="144" y="84" width="4" height="4" fill="#96a8e4"/><rect x="148" y="84" width="4" height="4" fill="#7e92d6"/><rect x="152" y="84" width="4" height="4" fill="#b0c0f0"/><rect x="156" y="84" width="4" height="4" fill="#ccd8fa"/><rect x="160" y="84" width="8" height="4" fill="#7e92d6"/><rect x="168" y="84" width="4" height="4" fill="#96a8e4"/><rect x="172" y="84" width="4" height="4" fill="#7e92d6"/><rect x="176" y="84" width="4" height="4" fill="#7284ca"/><rect x="180" y="84" width="4" height="4" fill="#96a8e4"/><rect x="184" y="84" width="4" height="4" fill="#7e92d6"/><rect x="188" y="84" width="4" height="4" fill="#5e64a4"/><rect x="0" y="88" width="4" height="4" fill="#505088"/><rect x="4" y="88" width="8" height="4" fill="#5e64a4"/><rect x="12" y="88" width="4" height="4" fill="#6876bc"/><rect x="16" y="88" width="4" height="4" fill="#b0c0f0"/><rect x="20" y="88" width="8" height="4" fill="#6876bc"/><rect x="28" y="88" width="8" height="4" fill="#7e92d6"/><rect x="36" y="88" width="4" height="4" fill="#96a8e4"/><rect x="40" y="88" width="8" height="4" fill="#7e92d6"/><rect x="48" y="88" width="8" height="4" fill="#b0c0f0"/><rect x="56" y="88" width="4" height="4" fill="#7e92d6"/><rect x="60" y="88" width="8" height="4" fill="#6876bc"/><rect x="68" y="88" width="8" height="4" fill="#ccd8fa"/><rect x="76" y="88" width="4" height="4" fill="#6876bc"/><rect x="80" y="88" width="4" height="4" fill="#7284ca"/><rect x="84" y="88" width="32" height="4" fill="#7e92d6"/><rect x="116" y="88" width="8" height="4" fill="#7284ca"/><rect x="124" y="88" width="4" height="4" fill="#6876bc"/><rect x="128" y="88" width="4" height="4" fill="#7284ca"/><rect x="132" y="88" width="20" height="4" fill="#6876bc"/><rect x="152" y="88" width="4" height="4" fill="#b0c0f0"/><rect x="156" y="88" width="8" height="4" fill="#ccd8fa"/><rect x="164" y="88" width="4" height="4" fill="#7284ca"/><rect x="168" y="88" width="4" height="4" fill="#7e92d6"/><rect x="172" y="88" width="8" height="4" fill="#6876bc"/><rect x="180" y="88" width="4" height="4" fill="#7284ca"/><rect x="184" y="88" width="4" height="4" fill="#6876bc"/><rect x="188" y="88" width="4" height="4" fill="#5e64a4"/><rect x="0" y="92" width="8" height="4" fill="#505088"/><rect x="8" y="92" width="4" height="4" fill="#5e64a4"/><rect x="12" y="92" width="4" height="4" fill="#6876bc"/><rect x="16" y="92" width="4" height="4" fill="#5e64a4"/><rect x="20" y="92" width="4" height="4" fill="#ccd8fa"/><rect x="24" y="92" width="4" height="4" fill="#7284ca"/><rect x="28" y="92" width="8" height="4" fill="#96a8e4"/><rect x="36" y="92" width="4" height="4" fill="#7284ca"/><rect x="40" y="92" width="4" height="4" fill="#b0c0f0"/><rect x="44" y="92" width="4" height="4" fill="#7284ca"/><rect x="48" y="92" width="4" height="4" fill="#b0c0f0"/><rect x="52" y="92" width="4" height="4" fill="#ccd8fa"/><rect x="56" y="92" width="4" height="4" fill="#6876bc"/><rect x="60" y="92" width="8" height="4" fill="#7284ca"/><rect x="68" y="92" width="4" height="4" fill="#6876bc"/><rect x="72" y="92" width="8" height="4" fill="#7e92d6"/><rect x="80" y="92" width="4" height="4" fill="#b0c0f0"/><rect x="84" y="92" width="4" height="4" fill="#96a8e4"/><rect x="88" y="92" width="4" height="4" fill="#7e92d6"/><rect x="92" y="92" width="4" height="4" fill="#6876bc"/><rect x="96" y="92" width="8" height="4" fill="#7284ca"/><rect x="104" y="92" width="4" height="4" fill="#7e92d6"/><rect x="108" y="92" width="8" height="4" fill="#6876bc"/><rect x="116" y="92" width="4" height="4" fill="#7284ca"/><rect x="120" y="92" width="8" height="4" fill="#ccd8fa"/><rect x="128" y="92" width="4" height="4" fill="#5e64a4"/><rect x="132" y="92" width="8" height="4" fill="#6876bc"/><rect x="140" y="92" width="4" height="4" fill="#505088"/><rect x="144" y="92" width="4" height="4" fill="#6876bc"/><rect x="148" y="92" width="8" height="4" fill="#5e64a4"/><rect x="156" y="92" width="4" height="4" fill="#7284ca"/><rect x="160" y="92" width="8" height="4" fill="#ccd8fa"/><rect x="168" y="92" width="4" height="4" fill="#6876bc"/><rect x="172" y="92" width="4" height="4" fill="#505088"/><rect x="176" y="92" width="4" height="4" fill="#6876bc"/><rect x="180" y="92" width="4" height="4" fill="#5e64a4"/><rect x="184" y="92" width="4" height="4" fill="#ccd8fa"/><rect x="188" y="92" width="4" height="4" fill="#7e92d6"/><rect x="0" y="96" width="4" height="4" fill="#5e64a4"/><rect x="4" y="96" width="4" height="4" fill="#505088"/><rect x="8" y="96" width="12" height="4" fill="#6876bc"/><rect x="20" y="96" width="4" height="4" fill="#5e64a4"/><rect x="24" y="96" width="4" height="4" fill="#6876bc"/><rect x="28" y="96" width="4" height="4" fill="#7284ca"/><rect x="32" y="96" width="4" height="4" fill="#6876bc"/><rect x="36" y="96" width="4" height="4" fill="#7e92d6"/><rect x="40" y="96" width="4" height="4" fill="#7284ca"/><rect x="44" y="96" width="4" height="4" fill="#7e92d6"/><rect x="48" y="96" width="4" height="4" fill="#ccd8fa"/><rect x="52" y="96" width="4" height="4" fill="#b0c0f0"/><rect x="56" y="96" width="4" height="4" fill="#96a8e4"/><rect x="60" y="96" width="4" height="4" fill="#6876bc"/><rect x="64" y="96" width="4" height="4" fill="#5e64a4"/><rect x="68" y="96" width="4" height="4" fill="#6876bc"/><rect x="72" y="96" width="4" height="4" fill="#96a8e4"/><rect x="76" y="96" width="4" height="4" fill="#7284ca"/><rect x="80" y="96" width="8" height="4" fill="#7e92d6"/><rect x="88" y="96" width="4" height="4" fill="#96a8e4"/><rect x="92" y="96" width="4" height="4" fill="#7284ca"/><rect x="96" y="96" width="4" height="4" fill="#6876bc"/><rect x="100" y="96" width="4" height="4" fill="#7e92d6"/><rect x="104" y="96" width="4" height="4" fill="#6876bc"/><rect x="108" y="96" width="4" height="4" fill="#7284ca"/><rect x="112" y="96" width="4" height="4" fill="#6876bc"/><rect x="116" y="96" width="4" height="4" fill="#7284ca"/><rect x="120" y="96" width="4" height="4" fill="#5e64a4"/><rect x="124" y="96" width="8" height="4" fill="#ccd8fa"/><rect x="132" y="96" width="4" height="4" fill="#5e64a4"/><rect x="136" y="96" width="4" height="4" fill="#7284ca"/><rect x="140" y="96" width="12" height="4" fill="#5e64a4"/><rect x="152" y="96" width="4" height="4" fill="#6876bc"/><rect x="156" y="96" width="24" height="4" fill="#5e64a4"/><rect x="180" y="96" width="4" height="4" fill="#505088"/><rect x="184" y="96" width="4" height="4" fill="#ccd8fa"/><rect x="188" y="96" width="4" height="4" fill="#96a8e4"/><rect x="0" y="100" width="4" height="4" fill="#505088"/><rect x="4" y="100" width="4" height="4" fill="#5e64a4"/><rect x="8" y="100" width="8" height="4" fill="#6876bc"/><rect x="16" y="100" width="4" height="4" fill="#5e64a4"/><rect x="20" y="100" width="4" height="4" fill="#6876bc"/><rect x="24" y="100" width="4" height="4" fill="#7e92d6"/><rect x="28" y="100" width="8" height="4" fill="#6876bc"/><rect x="36" y="100" width="8" height="4" fill="#96a8e4"/><rect x="44" y="100" width="8" height="4" fill="#7284ca"/><rect x="52" y="100" width="4" height="4" fill="#96a8e4"/><rect x="56" y="100" width="8" height="4" fill="#7284ca"/><rect x="64" y="100" width="4" height="4" fill="#5e64a4"/><rect x="68" y="100" width="8" height="4" fill="#6876bc"/><rect x="76" y="100" width="4" height="4" fill="#7284ca"/><rect x="80" y="100" width="4" height="4" fill="#96a8e4"/><rect x="84" y="100" width="4" height="4" fill="#7e92d6"/><rect x="88" y="100" width="4" height="4" fill="#96a8e4"/><rect x="92" y="100" width="4" height="4" fill="#7e92d6"/><rect x="96" y="100" width="4" height="4" fill="#7284ca"/><rect x="100" y="100" width="4" height="4" fill="#7e92d6"/><rect x="104" y="100" width="12" height="4" fill="#6876bc"/><rect x="116" y="100" width="4" height="4" fill="#7284ca"/><rect x="120" y="100" width="4" height="4" fill="#5e64a4"/><rect x="124" y="100" width="4" height="4" fill="#7284ca"/><rect x="128" y="100" width="4" height="4" fill="#6876bc"/><rect x="132" y="100" width="12" height="4" fill="#7284ca"/><rect x="144" y="100" width="4" height="4" fill="#5e64a4"/><rect x="148" y="100" width="8" height="4" fill="#7284ca"/><rect x="156" y="100" width="4" height="4" fill="#505088"/><rect x="160" y="100" width="8" height="4" fill="#6876bc"/><rect x="168" y="100" width="12" height="4" fill="#5e64a4"/><rect x="180" y="100" width="8" height="4" fill="#ccd8fa"/><rect x="188" y="100" width="4" height="4" fill="#b0c0f0"/><rect x="0" y="104" width="4" height="4" fill="#505088"/><rect x="4" y="104" width="8" height="4" fill="#5e64a4"/><rect x="12" y="104" width="4" height="4" fill="#6876bc"/><rect x="16" y="104" width="12" height="4" fill="#5e64a4"/><rect x="28" y="104" width="8" height="4" fill="#96a8e4"/><rect x="36" y="104" width="4" height="4" fill="#7284ca"/><rect x="40" y="104" width="12" height="4" fill="#7e92d6"/><rect x="52" y="104" width="4" height="4" fill="#96a8e4"/><rect x="56" y="104" width="4" height="4" fill="#7e92d6"/><rect x="60" y="104" width="8" height="4" fill="#6876bc"/><rect x="68" y="104" width="4" height="4" fill="#7284ca"/><rect x="72" y="104" width="4" height="4" fill="#6876bc"/><rect x="76" y="104" width="4" height="4" fill="#7e92d6"/><rect x="80" y="104" width="4" height="4" fill="#6876bc"/><rect x="84" y="104" width="4" height="4" fill="#7284ca"/><rect x="88" y="104" width="4" height="4" fill="#6876bc"/><rect x="92" y="104" width="4" height="4" fill="#7284ca"/><rect x="96" y="104" width="8" height="4" fill="#6876bc"/><rect x="104" y="104" width="4" height="4" fill="#96a8e4"/><rect x="108" y="104" width="4" height="4" fill="#7e92d6"/><rect x="112" y="104" width="4" height="4" fill="#6876bc"/><rect x="116" y="104" width="4" height="4" fill="#7284ca"/><rect x="120" y="104" width="12" height="4" fill="#5e64a4"/><rect x="132" y="104" width="4" height="4" fill="#7e92d6"/><rect x="136" y="104" width="4" height="4" fill="#6876bc"/><rect x="140" y="104" width="8" height="4" fill="#5e64a4"/><rect x="148" y="104" width="4" height="4" fill="#505088"/><rect x="152" y="104" width="4" height="4" fill="#7284ca"/><rect x="156" y="104" width="4" height="4" fill="#ccd8fa"/><rect x="160" y="104" width="8" height="4" fill="#6876bc"/><rect x="168" y="104" width="4" height="4" fill="#7284ca"/><rect x="172" y="104" width="4" height="4" fill="#ccd8fa"/><rect x="176" y="104" width="4" height="4" fill="#b0c0f0"/><rect x="180" y="104" width="4" height="4" fill="#6876bc"/><rect x="184" y="104" width="4" height="4" fill="#b0c0f0"/><rect x="188" y="104" width="4" height="4" fill="#ccd8fa"/><rect x="0" y="108" width="4" height="4" fill="#6876bc"/><rect x="4" y="108" width="4" height="4" fill="#5e64a4"/><rect x="8" y="108" width="8" height="4" fill="#505088"/><rect x="16" y="108" width="4" height="4" fill="#6876bc"/><rect x="20" y="108" width="4" height="4" fill="#7284ca"/><rect x="24" y="108" width="4" height="4" fill="#7e92d6"/><rect x="28" y="108" width="4" height="4" fill="#96a8e4"/><rect x="32" y="108" width="4" height="4" fill="#b0c0f0"/><rect x="36" y="108" width="4" height="4" fill="#96a8e4"/><rect x="40" y="108" width="8" height="4" fill="#7e92d6"/><rect x="48" y="108" width="4" height="4" fill="#7284ca"/><rect x="52" y="108" width="12" height="4" fill="#6876bc"/><rect x="64" y="108" width="12" height="4" fill="#5e64a4"/><rect x="76" y="108" width="4" height="4" fill="#6876bc"/><rect x="80" y="108" width="4" height="4" fill="#7e92d6"/><rect x="84" y="108" width="4" height="4" fill="#6876bc"/><rect x="88" y="108" width="12" height="4" fill="#7e92d6"/><rect x="100" y="108" width="12" height="4" fill="#7284ca"/><rect x="112" y="108" width="4" height="4" fill="#7e92d6"/><rect x="116" y="108" width="4" height="4" fill="#96a8e4"/><rect x="120" y="108" width="4" height="4" fill="#7e92d6"/><rect x="124" y="108" width="4" height="4" fill="#6876bc"/><rect x="128" y="108" width="8" height="4" fill="#5e64a4"/><rect x="136" y="108" width="8" height="4" fill="#ccd8fa"/><rect x="144" y="108" width="12" height="4" fill="#5e64a4"/><rect x="156" y="108" width="4" height="4" fill="#ccd8fa"/><rect x="160" y="108" width="4" height="4" fill="#5e64a4"/><rect x="164" y="108" width="8" height="4" fill="#6876bc"/><rect x="172" y="108" width="4" height="4" fill="#7e92d6"/><rect x="176" y="108" width="4" height="4" fill="#7284ca"/><rect x="180" y="108" width="4" height="4" fill="#96a8e4"/><rect x="184" y="108" width="4" height="4" fill="#5e64a4"/><rect x="188" y="108" width="4" height="4" fill="#6876bc"/><rect x="0" y="112" width="8" height="4" fill="#6876bc"/><rect x="8" y="112" width="4" height="4" fill="#5e64a4"/><rect x="12" y="112" width="4" height="4" fill="#6876bc"/><rect x="16" y="112" width="4" height="4" fill="#5e64a4"/><rect x="20" y="112" width="8" height="4" fill="#6876bc"/><rect x="28" y="112" width="4" height="4" fill="#7284ca"/><rect x="32" y="112" width="8" height="4" fill="#96a8e4"/><rect x="40" y="112" width="4" height="4" fill="#7284ca"/><rect x="44" y="112" width="4" height="4" fill="#7e92d6"/><rect x="48" y="112" width="12" height="4" fill="#7284ca"/><rect x="60" y="112" width="4" height="4" fill="#7e92d6"/><rect x="64" y="112" width="16" height="4" fill="#6876bc"/><rect x="80" y="112" width="8" height="4" fill="#5e64a4"/><rect x="88" y="112" width="4" height="4" fill="#6876bc"/><rect x="92" y="112" width="4" height="4" fill="#7284ca"/><rect x="96" y="112" width="4" height="4" fill="#7e92d6"/><rect x="100" y="112" width="4" height="4" fill="#6876bc"/><rect x="104" y="112" width="8" height="4" fill="#7e92d6"/><rect x="112" y="112" width="8" height="4" fill="#7284ca"/><rect x="120" y="112" width="4" height="4" fill="#96a8e4"/><rect x="124" y="112" width="4" height="4" fill="#5e64a4"/><rect x="128" y="112" width="4" height="4" fill="#7284ca"/><rect x="132" y="112" width="4" height="4" fill="#6876bc"/><rect x="136" y="112" width="4" height="4" fill="#5e64a4"/><rect x="140" y="112" width="4" height="4" fill="#6876bc"/><rect x="144" y="112" width="4" height="4" fill="#ccd8fa"/><rect x="148" y="112" width="4" height="4" fill="#6876bc"/><rect x="152" y="112" width="4" height="4" fill="#7284ca"/><rect x="156" y="112" width="4" height="4" fill="#505088"/><rect x="160" y="112" width="4" height="4" fill="#ccd8fa"/><rect x="164" y="112" width="4" height="4" fill="#6876bc"/><rect x="168" y="112" width="8" height="4" fill="#7284ca"/><rect x="176" y="112" width="4" height="4" fill="#7e92d6"/><rect x="180" y="112" width="4" height="4" fill="#7284ca"/><rect x="184" y="112" width="4" height="4" fill="#7e92d6"/><rect x="188" y="112" width="4" height="4" fill="#5e64a4"/><rect x="0" y="116" width="4" height="4" fill="#5e64a4"/><rect x="4" y="116" width="4" height="4" fill="#6876bc"/><rect x="8" y="116" width="4" height="4" fill="#5e64a4"/><rect x="12" y="116" width="4" height="4" fill="#505088"/><rect x="16" y="116" width="4" height="4" fill="#5e64a4"/><rect x="20" y="116" width="4" height="4" fill="#6876bc"/><rect x="24" y="116" width="4" height="4" fill="#7284ca"/><rect x="28" y="116" width="4" height="4" fill="#7e92d6"/><rect x="32" y="116" width="8" height="4" fill="#b0c0f0"/><rect x="40" y="116" width="4" height="4" fill="#96a8e4"/><rect x="44" y="116" width="4" height="4" fill="#6876bc"/><rect x="48" y="116" width="4" height="4" fill="#7284ca"/><rect x="52" y="116" width="4" height="4" fill="#7e92d6"/><rect x="56" y="116" width="4" height="4" fill="#6876bc"/><rect x="60" y="116" width="4" height="4" fill="#7284ca"/><rect x="64" y="116" width="4" height="4" fill="#6876bc"/><rect x="68" y="116" width="8" height="4" fill="#b0c0f0"/><rect x="76" y="116" width="20" height="4" fill="#7284ca"/><rect x="96" y="116" width="4" height="4" fill="#6876bc"/><rect x="100" y="116" width="4" height="4" fill="#7284ca"/><rect x="104" y="116" width="4" height="4" fill="#7e92d6"/><rect x="108" y="116" width="4" height="4" fill="#7284ca"/><rect x="112" y="116" width="4" height="4" fill="#96a8e4"/><rect x="116" y="116" width="20" height="4" fill="#7284ca"/><rect x="136" y="116" width="4" height="4" fill="#ccd8fa"/><rect x="140" y="116" width="4" height="4" fill="#7e92d6"/><rect x="144" y="116" width="12" height="4" fill="#7284ca"/><rect x="156" y="116" width="4" height="4" fill="#5e64a4"/><rect x="160" y="116" width="4" height="4" fill="#6876bc"/><rect x="164" y="116" width="4" height="4" fill="#7284ca"/><rect x="168" y="116" width="4" height="4" fill="#5e64a4"/><rect x="172" y="116" width="8" height="4" fill="#96a8e4"/><rect x="180" y="116" width="8" height="4" fill="#7e92d6"/><rect x="188" y="116" width="4" height="4" fill="#7284ca"/><rect x="0" y="120" width="4" height="4" fill="#6876bc"/><rect x="4" y="120" width="4" height="4" fill="#7284ca"/><rect x="8" y="120" width="16" height="4" fill="#6876bc"/><rect x="24" y="120" width="4" height="4" fill="#7e92d6"/><rect x="28" y="120" width="4" height="4" fill="#7284ca"/><rect x="32" y="120" width="4" height="4" fill="#7e92d6"/><rect x="36" y="120" width="8" height="4" fill="#b0c0f0"/><rect x="44" y="120" width="4" height="4" fill="#96a8e4"/><rect x="48" y="120" width="4" height="4" fill="#7284ca"/><rect x="52" y="120" width="4" height="4" fill="#96a8e4"/><rect x="56" y="120" width="8" height="4" fill="#7e92d6"/><rect x="64" y="120" width="4" height="4" fill="#7284ca"/><rect x="68" y="120" width="4" height="4" fill="#7e92d6"/><rect x="72" y="120" width="8" height="4" fill="#ccd8fa"/><rect x="80" y="120" width="12" height="4" fill="#7284ca"/><rect x="92" y="120" width="4" height="4" fill="#6876bc"/><rect x="96" y="120" width="4" height="4" fill="#5e64a4"/><rect x="100" y="120" width="4" height="4" fill="#7e92d6"/><rect x="104" y="120" width="4" height="4" fill="#6876bc"/><rect x="108" y="120" width="4" height="4" fill="#7284ca"/><rect x="112" y="120" width="8" height="4" fill="#6876bc"/><rect x="120" y="120" width="4" height="4" fill="#7e92d6"/><rect x="124" y="120" width="8" height="4" fill="#5e64a4"/><rect x="132" y="120" width="4" height="4" fill="#7284ca"/><rect x="136" y="120" width="4" height="4" fill="#b0c0f0"/><rect x="140" y="120" width="4" height="4" fill="#7e92d6"/><rect x="144" y="120" width="4" height="4" fill="#ccd8fa"/><rect x="148" y="120" width="4" height="4" fill="#b0c0f0"/><rect x="152" y="120" width="4" height="4" fill="#6876bc"/><rect x="156" y="120" width="12" height="4" fill="#5e64a4"/><rect x="168" y="120" width="8" height="4" fill="#ccd8fa"/><rect x="176" y="120" width="8" height="4" fill="#7284ca"/><rect x="184" y="120" width="8" height="4" fill="#7e92d6"/><rect x="0" y="124" width="4" height="4" fill="#7e92d6"/><rect x="4" y="124" width="4" height="4" fill="#7284ca"/><rect x="8" y="124" width="8" height="4" fill="#6876bc"/><rect x="16" y="124" width="4" height="4" fill="#5e64a4"/><rect x="20" y="124" width="4" height="4" fill="#505088"/><rect x="24" y="124" width="12" height="4" fill="#7284ca"/><rect x="36" y="124" width="4" height="4" fill="#96a8e4"/><rect x="40" y="124" width="4" height="4" fill="#7284ca"/><rect x="44" y="124" width="4" height="4" fill="#7e92d6"/><rect x="48" y="124" width="8" height="4" fill="#b0c0f0"/><rect x="56" y="124" width="4" height="4" fill="#ccd8fa"/><rect x="60" y="124" width="4" height="4" fill="#7284ca"/><rect x="64" y="124" width="4" height="4" fill="#96a8e4"/><rect x="68" y="124" width="4" height="4" fill="#6876bc"/><rect x="72" y="124" width="4" height="4" fill="#96a8e4"/><rect x="76" y="124" width="4" height="4" fill="#7e92d6"/><rect x="80" y="124" width="4" height="4" fill="#6876bc"/><rect x="84" y="124" width="4" height="4" fill="#7284ca"/><rect x="88" y="124" width="4" height="4" fill="#7e92d6"/><rect x="92" y="124" width="8" height="4" fill="#6876bc"/><rect x="100" y="124" width="4" height="4" fill="#7284ca"/><rect x="104" y="124" width="4" height="4" fill="#5e64a4"/><rect x="108" y="124" width="4" height="4" fill="#6876bc"/><rect x="112" y="124" width="4" height="4" fill="#7284ca"/><rect x="116" y="124" width="4" height="4" fill="#7e92d6"/><rect x="120" y="124" width="4" height="4" fill="#7284ca"/><rect x="124" y="124" width="4" height="4" fill="#5e64a4"/><rect x="128" y="124" width="4" height="4" fill="#7284ca"/><rect x="132" y="124" width="8" height="4" fill="#6876bc"/><rect x="140" y="124" width="4" height="4" fill="#b0c0f0"/><rect x="144" y="124" width="8" height="4" fill="#ccd8fa"/><rect x="152" y="124" width="4" height="4" fill="#7284ca"/><rect x="156" y="124" width="4" height="4" fill="#5e64a4"/><rect x="160" y="124" width="4" height="4" fill="#7284ca"/><rect x="164" y="124" width="4" height="4" fill="#6876bc"/><rect x="168" y="124" width="8" height="4" fill="#ccd8fa"/><rect x="176" y="124" width="4" height="4" fill="#6876bc"/><rect x="180" y="124" width="4" height="4" fill="#ccd8fa"/><rect x="184" y="124" width="4" height="4" fill="#b0c0f0"/><rect x="188" y="124" width="4" height="4" fill="#ccd8fa"/><rect x="0" y="128" width="4" height="4" fill="#b0c0f0"/><rect x="4" y="128" width="4" height="4" fill="#7e92d6"/><rect x="8" y="128" width="4" height="4" fill="#7284ca"/><rect x="12" y="128" width="24" height="4" fill="#6876bc"/><rect x="36" y="128" width="4" height="4" fill="#7284ca"/><rect x="40" y="128" width="4" height="4" fill="#7e92d6"/><rect x="44" y="128" width="4" height="4" fill="#7284ca"/><rect x="48" y="128" width="4" height="4" fill="#b0c0f0"/><rect x="52" y="128" width="4" height="4" fill="#7e92d6"/><rect x="56" y="128" width="4" height="4" fill="#7284ca"/><rect x="60" y="128" width="4" height="4" fill="#ccd8fa"/><rect x="64" y="128" width="8" height="4" fill="#7284ca"/><rect x="72" y="128" width="4" height="4" fill="#96a8e4"/><rect x="76" y="128" width="4" height="4" fill="#7e92d6"/><rect x="80" y="128" width="4" height="4" fill="#7284ca"/><rect x="84" y="128" width="4" height="4" fill="#6876bc"/><rect x="88" y="128" width="4" height="4" fill="#7e92d6"/><rect x="92" y="128" width="4" height="4" fill="#ccd8fa"/><rect x="96" y="128" width="4" height="4" fill="#b0c0f0"/><rect x="100" y="128" width="4" height="4" fill="#6876bc"/><rect x="104" y="128" width="4" height="4" fill="#505088"/><rect x="108" y="128" width="8" height="4" fill="#7e92d6"/><rect x="116" y="128" width="4" height="4" fill="#7284ca"/><rect x="120" y="128" width="4" height="4" fill="#505088"/><rect x="124" y="128" width="4" height="4" fill="#5e64a4"/><rect x="128" y="128" width="12" height="4" fill="#6876bc"/><rect x="140" y="128" width="8" height="4" fill="#7284ca"/><rect x="148" y="128" width="4" height="4" fill="#7e92d6"/><rect x="152" y="128" width="8" height="4" fill="#6876bc"/><rect x="160" y="128" width="8" height="4" fill="#7284ca"/><rect x="168" y="128" width="4" height="4" fill="#6876bc"/><rect x="172" y="128" width="4" height="4" fill="#7284ca"/><rect x="176" y="128" width="4" height="4" fill="#5e64a4"/><rect x="180" y="128" width="4" height="4" fill="#7e92d6"/><rect x="184" y="128" width="8" height="4" fill="#b0c0f0"/><rect x="0" y="132" width="4" height="4" fill="#b0c0f0"/><rect x="4" y="132" width="4" height="4" fill="#7284ca"/><rect x="8" y="132" width="4" height="4" fill="#7e92d6"/><rect x="12" y="132" width="4" height="4" fill="#5e64a4"/><rect x="16" y="132" width="8" height="4" fill="#7284ca"/><rect x="24" y="132" width="8" height="4" fill="#7e92d6"/><rect x="32" y="132" width="4" height="4" fill="#6876bc"/><rect x="36" y="132" width="4" height="4" fill="#7284ca"/><rect x="40" y="132" width="4" height="4" fill="#96a8e4"/><rect x="44" y="132" width="4" height="4" fill="#b0c0f0"/><rect x="48" y="132" width="4" height="4" fill="#96a8e4"/><rect x="52" y="132" width="4" height="4" fill="#7284ca"/><rect x="56" y="132" width="4" height="4" fill="#7e92d6"/><rect x="60" y="132" width="4" height="4" fill="#7284ca"/><rect x="64" y="132" width="4" height="4" fill="#6876bc"/><rect x="68" y="132" width="4" height="4" fill="#7284ca"/><rect x="72" y="132" width="4" height="4" fill="#7e92d6"/><rect x="76" y="132" width="12" height="4" fill="#7284ca"/><rect x="88" y="132" width="4" height="4" fill="#7e92d6"/><rect x="92" y="132" width="8" height="4" fill="#6876bc"/><rect x="100" y="132" width="4" height="4" fill="#7284ca"/><rect x="104" y="132" width="4" height="4" fill="#505088"/><rect x="108" y="132" width="4" height="4" fill="#7284ca"/><rect x="112" y="132" width="8" height="4" fill="#5e64a4"/><rect x="120" y="132" width="4" height="4" fill="#7284ca"/><rect x="124" y="132" width="12" height="4" fill="#6876bc"/><rect x="136" y="132" width="12" height="4" fill="#7e92d6"/><rect x="148" y="132" width="4" height="4" fill="#7284ca"/><rect x="152" y="132" width="4" height="4" fill="#6876bc"/><rect x="156" y="132" width="4" height="4" fill="#5e64a4"/><rect x="160" y="132" width="8" height="4" fill="#7e92d6"/><rect x="168" y="132" width="12" height="4" fill="#6876bc"/><rect x="180" y="132" width="8" height="4" fill="#7e92d6"/><rect x="188" y="132" width="4" height="4" fill="#7284ca"/><rect x="0" y="136" width="8" height="4" fill="#b0c0f0"/><rect x="8" y="136" width="8" height="4" fill="#6876bc"/><rect x="16" y="136" width="4" height="4" fill="#5e64a4"/><rect x="20" y="136" width="4" height="4" fill="#7284ca"/><rect x="24" y="136" width="4" height="4" fill="#b0c0f0"/><rect x="28" y="136" width="4" height="4" fill="#ccd8fa"/><rect x="32" y="136" width="4" height="4" fill="#7284ca"/><rect x="36" y="136" width="12" height="4" fill="#7e92d6"/><rect x="48" y="136" width="4" height="4" fill="#96a8e4"/><rect x="52" y="136" width="4" height="4" fill="#7e92d6"/><rect x="56" y="136" width="4" height="4" fill="#96a8e4"/><rect x="60" y="136" width="4" height="4" fill="#7284ca"/><rect x="64" y="136" width="8" height="4" fill="#7e92d6"/><rect x="72" y="136" width="8" height="4" fill="#7284ca"/><rect x="80" y="136" width="8" height="4" fill="#7e92d6"/><rect x="88" y="136" width="4" height="4" fill="#5e64a4"/><rect x="92" y="136" width="4" height="4" fill="#6876bc"/><rect x="96" y="136" width="4" height="4" fill="#5e64a4"/><rect x="100" y="136" width="4" height="4" fill="#505088"/><rect x="104" y="136" width="4" height="4" fill="#6876bc"/><rect x="108" y="136" width="8" height="4" fill="#5e64a4"/><rect x="116" y="136" width="8" height="4" fill="#505088"/><rect x="124" y="136" width="4" height="4" fill="#6876bc"/><rect x="128" y="136" width="4" height="4" fill="#5e64a4"/><rect x="132" y="136" width="4" height="4" fill="#6876bc"/><rect x="136" y="136" width="4" height="4" fill="#7e92d6"/><rect x="140" y="136" width="8" height="4" fill="#b0c0f0"/><rect x="148" y="136" width="4" height="4" fill="#7e92d6"/><rect x="152" y="136" width="4" height="4" fill="#b0c0f0"/><rect x="156" y="136" width="4" height="4" fill="#7284ca"/><rect x="160" y="136" width="8" height="4" fill="#7e92d6"/><rect x="168" y="136" width="4" height="4" fill="#7284ca"/><rect x="172" y="136" width="4" height="4" fill="#7e92d6"/><rect x="176" y="136" width="4" height="4" fill="#7284ca"/><rect x="180" y="136" width="4" height="4" fill="#7e92d6"/><rect x="184" y="136" width="4" height="4" fill="#6876bc"/><rect x="188" y="136" width="4" height="4" fill="#96a8e4"/><rect x="0" y="140" width="4" height="4" fill="#7e92d6"/><rect x="4" y="140" width="4" height="4" fill="#96a8e4"/><rect x="8" y="140" width="4" height="4" fill="#b0c0f0"/><rect x="12" y="140" width="4" height="4" fill="#ccd8fa"/><rect x="16" y="140" width="8" height="4" fill="#6876bc"/><rect x="24" y="140" width="4" height="4" fill="#7e92d6"/><rect x="28" y="140" width="4" height="4" fill="#ccd8fa"/><rect x="32" y="140" width="4" height="4" fill="#b0c0f0"/><rect x="36" y="140" width="4" height="4" fill="#7284ca"/><rect x="40" y="140" width="4" height="4" fill="#7e92d6"/><rect x="44" y="140" width="12" height="4" fill="#7284ca"/><rect x="56" y="140" width="4" height="4" fill="#7e92d6"/><rect x="60" y="140" width="4" height="4" fill="#7284ca"/><rect x="64" y="140" width="4" height="4" fill="#7e92d6"/><rect x="68" y="140" width="4" height="4" fill="#7284ca"/><rect x="72" y="140" width="8" height="4" fill="#7e92d6"/><rect x="80" y="140" width="4" height="4" fill="#6876bc"/><rect x="84" y="140" width="8" height="4" fill="#b0c0f0"/><rect x="92" y="140" width="4" height="4" fill="#6876bc"/><rect x="96" y="140" width="4" height="4" fill="#7284ca"/><rect x="100" y="140" width="4" height="4" fill="#6876bc"/><rect x="104" y="140" width="4" height="4" fill="#5e64a4"/><rect x="108" y="140" width="4" height="4" fill="#ccd8fa"/><rect x="112" y="140" width="4" height="4" fill="#5e64a4"/><rect x="116" y="140" width="16" height="4" fill="#6876bc"/><rect x="132" y="140" width="4" height="4" fill="#5e64a4"/><rect x="136" y="140" width="4" height="4" fill="#6876bc"/><rect x="140" y="140" width="8" height="4" fill="#96a8e4"/><rect x="148" y="140" width="4" height="4" fill="#7e92d6"/><rect x="152" y="140" width="4" height="4" fill="#b0c0f0"/><rect x="156" y="140" width="8" height="4" fill="#96a8e4"/><rect x="164" y="140" width="4" height="4" fill="#7e92d6"/><rect x="168" y="140" width="4" height="4" fill="#7284ca"/><rect x="172" y="140" width="8" height="4" fill="#ccd8fa"/><rect x="180" y="140" width="8" height="4" fill="#7e92d6"/><rect x="188" y="140" width="4" height="4" fill="#7284ca"/><rect x="0" y="144" width="4" height="4" fill="#7e92d6"/><rect x="4" y="144" width="8" height="4" fill="#96a8e4"/><rect x="12" y="144" width="4" height="4" fill="#7284ca"/><rect x="16" y="144" width="4" height="4" fill="#7e92d6"/><rect x="20" y="144" width="4" height="4" fill="#6876bc"/><rect x="24" y="144" width="12" height="4" fill="#7284ca"/><rect x="36" y="144" width="4" height="4" fill="#6876bc"/><rect x="40" y="144" width="4" height="4" fill="#7284ca"/><rect x="44" y="144" width="8" height="4" fill="#7e92d6"/><rect x="52" y="144" width="4" height="4" fill="#96a8e4"/><rect x="56" y="144" width="4" height="4" fill="#ccd8fa"/><rect x="60" y="144" width="4" height="4" fill="#b0c0f0"/><rect x="64" y="144" width="8" height="4" fill="#7284ca"/><rect x="72" y="144" width="4" height="4" fill="#6876bc"/><rect x="76" y="144" width="4" height="4" fill="#5e64a4"/><rect x="80" y="144" width="4" height="4" fill="#6876bc"/><rect x="84" y="144" width="4" height="4" fill="#ccd8fa"/><rect x="88" y="144" width="4" height="4" fill="#b0c0f0"/><rect x="92" y="144" width="4" height="4" fill="#5e64a4"/><rect x="96" y="144" width="4" height="4" fill="#6876bc"/><rect x="100" y="144" width="4" height="4" fill="#7284ca"/><rect x="104" y="144" width="4" height="4" fill="#6876bc"/><rect x="108" y="144" width="4" height="4" fill="#ccd8fa"/><rect x="112" y="144" width="4" height="4" fill="#6876bc"/><rect x="116" y="144" width="8" height="4" fill="#5e64a4"/><rect x="124" y="144" width="8" height="4" fill="#7284ca"/><rect x="132" y="144" width="4" height="4" fill="#6876bc"/><rect x="136" y="144" width="4" height="4" fill="#96a8e4"/><rect x="140" y="144" width="4" height="4" fill="#7284ca"/><rect x="144" y="144" width="4" height="4" fill="#96a8e4"/><rect x="148" y="144" width="8" height="4" fill="#b0c0f0"/><rect x="156" y="144" width="4" height="4" fill="#7e92d6"/><rect x="160" y="144" width="4" height="4" fill="#b0c0f0"/><rect x="164" y="144" width="4" height="4" fill="#96a8e4"/><rect x="168" y="144" width="4" height="4" fill="#b0c0f0"/><rect x="172" y="144" width="4" height="4" fill="#7284ca"/><rect x="176" y="144" width="8" height="4" fill="#7e92d6"/><rect x="184" y="144" width="4" height="4" fill="#96a8e4"/><rect x="188" y="144" width="4" height="4" fill="#6876bc"/><rect x="0" y="148" width="4" height="4" fill="#7e92d6"/><rect x="4" y="148" width="4" height="4" fill="#7284ca"/><rect x="8" y="148" width="4" height="4" fill="#7e92d6"/><rect x="12" y="148" width="4" height="4" fill="#5e64a4"/><rect x="16" y="148" width="4" height="4" fill="#7e92d6"/><rect x="20" y="148" width="4" height="4" fill="#5e64a4"/><rect x="24" y="148" width="4" height="4" fill="#6876bc"/><rect x="28" y="148" width="4" height="4" fill="#7e92d6"/><rect x="32" y="148" width="4" height="4" fill="#7284ca"/><rect x="36" y="148" width="4" height="4" fill="#7e92d6"/><rect x="40" y="148" width="8" height="4" fill="#7284ca"/><rect x="48" y="148" width="4" height="4" fill="#7e92d6"/><rect x="52" y="148" width="4" height="4" fill="#96a8e4"/><rect x="56" y="148" width="4" height="4" fill="#ccd8fa"/><rect x="60" y="148" width="4" height="4" fill="#b0c0f0"/><rect x="64" y="148" width="4" height="4" fill="#7e92d6"/><rect x="68" y="148" width="4" height="4" fill="#7284ca"/><rect x="72" y="148" width="4" height="4" fill="#6876bc"/><rect x="76" y="148" width="4" height="4" fill="#7284ca"/><rect x="80" y="148" width="4" height="4" fill="#7e92d6"/><rect x="84" y="148" width="4" height="4" fill="#7284ca"/><rect x="88" y="148" width="4" height="4" fill="#6876bc"/><rect x="92" y="148" width="4" height="4" fill="#ccd8fa"/><rect x="96" y="148" width="4" height="4" fill="#7e92d6"/><rect x="100" y="148" width="4" height="4" fill="#7284ca"/><rect x="104" y="148" width="8" height="4" fill="#5e64a4"/><rect x="112" y="148" width="4" height="4" fill="#b0c0f0"/><rect x="116" y="148" width="8" height="4" fill="#505088"/><rect x="124" y="148" width="8" height="4" fill="#6876bc"/><rect x="132" y="148" width="4" height="4" fill="#7284ca"/><rect x="136" y="148" width="4" height="4" fill="#6876bc"/><rect x="140" y="148" width="4" height="4" fill="#96a8e4"/><rect x="144" y="148" width="4" height="4" fill="#b0c0f0"/><rect x="148" y="148" width="4" height="4" fill="#7e92d6"/><rect x="152" y="148" width="8" height="4" fill="#96a8e4"/><rect x="160" y="148" width="4" height="4" fill="#b0c0f0"/><rect x="164" y="148" width="8" height="4" fill="#96a8e4"/><rect x="172" y="148" width="4" height="4" fill="#7e92d6"/><rect x="176" y="148" width="4" height="4" fill="#96a8e4"/><rect x="180" y="148" width="8" height="4" fill="#6876bc"/><rect x="188" y="148" width="4" height="4" fill="#7e92d6"/><rect x="0" y="152" width="4" height="4" fill="#7e92d6"/><rect x="4" y="152" width="4" height="4" fill="#5e64a4"/><rect x="8" y="152" width="4" height="4" fill="#7e92d6"/><rect x="12" y="152" width="12" height="4" fill="#7284ca"/><rect x="24" y="152" width="8" height="4" fill="#6876bc"/><rect x="32" y="152" width="12" height="4" fill="#7e92d6"/><rect x="44" y="152" width="4" height="4" fill="#7284ca"/><rect x="48" y="152" width="4" height="4" fill="#7e92d6"/><rect x="52" y="152" width="4" height="4" fill="#96a8e4"/><rect x="56" y="152" width="4" height="4" fill="#7284ca"/><rect x="60" y="152" width="4" height="4" fill="#6876bc"/><rect x="64" y="152" width="8" height="4" fill="#7e92d6"/><rect x="72" y="152" width="8" height="4" fill="#6876bc"/><rect x="80" y="152" width="4" height="4" fill="#7e92d6"/><rect x="84" y="152" width="8" height="4" fill="#7284ca"/><rect x="92" y="152" width="4" height="4" fill="#7e92d6"/><rect x="96" y="152" width="8" height="4" fill="#7284ca"/><rect x="104" y="152" width="8" height="4" fill="#6876bc"/><rect x="112" y="152" width="4" height="4" fill="#7284ca"/><rect x="116" y="152" width="4" height="4" fill="#6876bc"/><rect x="120" y="152" width="4" height="4" fill="#7e92d6"/><rect x="124" y="152" width="4" height="4" fill="#6876bc"/><rect x="128" y="152" width="4" height="4" fill="#7e92d6"/><rect x="132" y="152" width="4" height="4" fill="#6876bc"/><rect x="136" y="152" width="8" height="4" fill="#7284ca"/><rect x="144" y="152" width="4" height="4" fill="#7e92d6"/><rect x="148" y="152" width="4" height="4" fill="#b0c0f0"/><rect x="152" y="152" width="4" height="4" fill="#7e92d6"/><rect x="156" y="152" width="8" height="4" fill="#96a8e4"/><rect x="164" y="152" width="4" height="4" fill="#7e92d6"/><rect x="168" y="152" width="16" height="4" fill="#7284ca"/><rect x="184" y="152" width="4" height="4" fill="#ccd8fa"/><rect x="188" y="152" width="4" height="4" fill="#5e64a4"/><rect x="0" y="156" width="4" height="4" fill="#6876bc"/><rect x="4" y="156" width="4" height="4" fill="#ccd8fa"/><rect x="8" y="156" width="4" height="4" fill="#b0c0f0"/><rect x="12" y="156" width="12" height="4" fill="#5e64a4"/><rect x="24" y="156" width="4" height="4" fill="#7284ca"/><rect x="28" y="156" width="4" height="4" fill="#6876bc"/><rect x="32" y="156" width="4" height="4" fill="#7e92d6"/><rect x="36" y="156" width="4" height="4" fill="#7284ca"/><rect x="40" y="156" width="4" height="4" fill="#96a8e4"/><rect x="44" y="156" width="4" height="4" fill="#7e92d6"/><rect x="48" y="156" width="12" height="4" fill="#b0c0f0"/><rect x="60" y="156" width="4" height="4" fill="#6876bc"/><rect x="64" y="156" width="4" height="4" fill="#7e92d6"/><rect x="68" y="156" width="4" height="4" fill="#6876bc"/><rect x="72" y="156" width="8" height="4" fill="#7e92d6"/><rect x="80" y="156" width="4" height="4" fill="#ccd8fa"/><rect x="84" y="156" width="4" height="4" fill="#b0c0f0"/><rect x="88" y="156" width="4" height="4" fill="#96a8e4"/><rect x="92" y="156" width="4" height="4" fill="#7284ca"/><rect x="96" y="156" width="4" height="4" fill="#96a8e4"/><rect x="100" y="156" width="4" height="4" fill="#7e92d6"/><rect x="104" y="156" width="4" height="4" fill="#7284ca"/><rect x="108" y="156" width="4" height="4" fill="#6876bc"/><rect x="112" y="156" width="12" height="4" fill="#7284ca"/><rect x="124" y="156" width="4" height="4" fill="#7e92d6"/><rect x="128" y="156" width="4" height="4" fill="#6876bc"/><rect x="132" y="156" width="4" height="4" fill="#7284ca"/><rect x="136" y="156" width="4" height="4" fill="#96a8e4"/><rect x="140" y="156" width="4" height="4" fill="#b0c0f0"/><rect x="144" y="156" width="8" height="4" fill="#96a8e4"/><rect x="152" y="156" width="4" height="4" fill="#7e92d6"/><rect x="156" y="156" width="4" height="4" fill="#96a8e4"/><rect x="160" y="156" width="4" height="4" fill="#7e92d6"/><rect x="164" y="156" width="8" height="4" fill="#7284ca"/><rect x="172" y="156" width="4" height="4" fill="#96a8e4"/><rect x="176" y="156" width="8" height="4" fill="#7e92d6"/><rect x="184" y="156" width="4" height="4" fill="#ccd8fa"/><rect x="188" y="156" width="4" height="4" fill="#7284ca"/><rect x="0" y="160" width="4" height="4" fill="#5e64a4"/><rect x="4" y="160" width="8" height="4" fill="#ccd8fa"/><rect x="12" y="160" width="8" height="4" fill="#7284ca"/><rect x="20" y="160" width="4" height="4" fill="#5e64a4"/><rect x="24" y="160" width="4" height="4" fill="#6876bc"/><rect x="28" y="160" width="4" height="4" fill="#7284ca"/><rect x="32" y="160" width="4" height="4" fill="#96a8e4"/><rect x="36" y="160" width="8" height="4" fill="#7e92d6"/><rect x="44" y="160" width="4" height="4" fill="#7284ca"/><rect x="48" y="160" width="4" height="4" fill="#7e92d6"/><rect x="52" y="160" width="4" height="4" fill="#7284ca"/><rect x="56" y="160" width="4" height="4" fill="#ccd8fa"/><rect x="60" y="160" width="4" height="4" fill="#7284ca"/><rect x="64" y="160" width="8" height="4" fill="#5e64a4"/><rect x="72" y="160" width="4" height="4" fill="#7e92d6"/><rect x="76" y="160" width="4" height="4" fill="#7284ca"/><rect x="80" y="160" width="8" height="4" fill="#96a8e4"/><rect x="88" y="160" width="4" height="4" fill="#ccd8fa"/><rect x="92" y="160" width="8" height="4" fill="#96a8e4"/><rect x="100" y="160" width="4" height="4" fill="#7284ca"/><rect x="104" y="160" width="4" height="4" fill="#7e92d6"/><rect x="108" y="160" width="8" height="4" fill="#7284ca"/><rect x="116" y="160" width="4" height="4" fill="#96a8e4"/><rect x="120" y="160" width="4" height="4" fill="#7e92d6"/><rect x="124" y="160" width="4" height="4" fill="#96a8e4"/><rect x="128" y="160" width="4" height="4" fill="#7e92d6"/><rect x="132" y="160" width="4" height="4" fill="#6876bc"/><rect x="136" y="160" width="4" height="4" fill="#7284ca"/><rect x="140" y="160" width="4" height="4" fill="#7e92d6"/><rect x="144" y="160" width="4" height="4" fill="#96a8e4"/><rect x="148" y="160" width="4" height="4" fill="#7284ca"/><rect x="152" y="160" width="16" height="4" fill="#6876bc"/><rect x="168" y="160" width="8" height="4" fill="#7e92d6"/><rect x="176" y="160" width="12" height="4" fill="#7284ca"/><rect x="188" y="160" width="4" height="4" fill="#ccd8fa"/><rect x="0" y="164" width="4" height="4" fill="#5e64a4"/><rect x="4" y="164" width="4" height="4" fill="#505088"/><rect x="8" y="164" width="4" height="4" fill="#6876bc"/><rect x="12" y="164" width="4" height="4" fill="#7284ca"/><rect x="16" y="164" width="4" height="4" fill="#ccd8fa"/><rect x="20" y="164" width="4" height="4" fill="#b0c0f0"/><rect x="24" y="164" width="4" height="4" fill="#7284ca"/><rect x="28" y="164" width="8" height="4" fill="#7e92d6"/><rect x="36" y="164" width="4" height="4" fill="#7284ca"/><rect x="40" y="164" width="4" height="4" fill="#7e92d6"/><rect x="44" y="164" width="4" height="4" fill="#96a8e4"/><rect x="48" y="164" width="4" height="4" fill="#7e92d6"/><rect x="52" y="164" width="12" height="4" fill="#ccd8fa"/><rect x="64" y="164" width="8" height="4" fill="#6876bc"/><rect x="72" y="164" width="8" height="4" fill="#7e92d6"/><rect x="80" y="164" width="4" height="4" fill="#7284ca"/><rect x="84" y="164" width="12" height="4" fill="#7e92d6"/><rect x="96" y="164" width="4" height="4" fill="#96a8e4"/><rect x="100" y="164" width="4" height="4" fill="#7284ca"/><rect x="104" y="164" width="12" height="4" fill="#7e92d6"/><rect x="116" y="164" width="8" height="4" fill="#7284ca"/><rect x="124" y="164" width="4" height="4" fill="#96a8e4"/><rect x="128" y="164" width="4" height="4" fill="#6876bc"/><rect x="132" y="164" width="4" height="4" fill="#7e92d6"/><rect x="136" y="164" width="4" height="4" fill="#7284ca"/><rect x="140" y="164" width="8" height="4" fill="#7e92d6"/><rect x="148" y="164" width="4" height="4" fill="#7284ca"/><rect x="152" y="164" width="4" height="4" fill="#6876bc"/><rect x="156" y="164" width="4" height="4" fill="#7e92d6"/><rect x="160" y="164" width="8" height="4" fill="#5e64a4"/><rect x="168" y="164" width="4" height="4" fill="#7e92d6"/><rect x="172" y="164" width="8" height="4" fill="#7284ca"/><rect x="180" y="164" width="8" height="4" fill="#96a8e4"/><rect x="188" y="164" width="4" height="4" fill="#5e64a4"/><rect x="0" y="168" width="4" height="4" fill="#7284ca"/><rect x="4" y="168" width="4" height="4" fill="#6876bc"/><rect x="8" y="168" width="4" height="4" fill="#7e92d6"/><rect x="12" y="168" width="4" height="4" fill="#7284ca"/><rect x="16" y="168" width="12" height="4" fill="#ccd8fa"/><rect x="28" y="168" width="4" height="4" fill="#b0c0f0"/><rect x="32" y="168" width="4" height="4" fill="#7e92d6"/><rect x="36" y="168" width="4" height="4" fill="#6876bc"/><rect x="40" y="168" width="4" height="4" fill="#7284ca"/><rect x="44" y="168" width="8" height="4" fill="#b0c0f0"/><rect x="52" y="168" width="8" height="4" fill="#ccd8fa"/><rect x="60" y="168" width="16" height="4" fill="#7e92d6"/><rect x="76" y="168" width="4" height="4" fill="#7284ca"/><rect x="80" y="168" width="4" height="4" fill="#7e92d6"/><rect x="84" y="168" width="4" height="4" fill="#96a8e4"/><rect x="88" y="168" width="4" height="4" fill="#7284ca"/><rect x="92" y="168" width="8" height="4" fill="#5e64a4"/><rect x="100" y="168" width="8" height="4" fill="#7e92d6"/><rect x="108" y="168" width="4" height="4" fill="#96a8e4"/><rect x="112" y="168" width="8" height="4" fill="#6876bc"/><rect x="120" y="168" width="4" height="4" fill="#7e92d6"/><rect x="124" y="168" width="8" height="4" fill="#7284ca"/><rect x="132" y="168" width="4" height="4" fill="#6876bc"/><rect x="136" y="168" width="4" height="4" fill="#7e92d6"/><rect x="140" y="168" width="8" height="4" fill="#96a8e4"/><rect x="148" y="168" width="8" height="4" fill="#7284ca"/><rect x="156" y="168" width="12" height="4" fill="#6876bc"/><rect x="168" y="168" width="4" height="4" fill="#7284ca"/><rect x="172" y="168" width="8" height="4" fill="#96a8e4"/><rect x="180" y="168" width="4" height="4" fill="#7284ca"/><rect x="184" y="168" width="8" height="4" fill="#7e92d6"/><rect x="0" y="172" width="4" height="4" fill="#7284ca"/><rect x="4" y="172" width="8" height="4" fill="#96a8e4"/><rect x="12" y="172" width="4" height="4" fill="#6876bc"/><rect x="16" y="172" width="4" height="4" fill="#7e92d6"/><rect x="20" y="172" width="20" height="4" fill="#7284ca"/><rect x="40" y="172" width="4" height="4" fill="#ccd8fa"/><rect x="44" y="172" width="8" height="4" fill="#b0c0f0"/><rect x="52" y="172" width="4" height="4" fill="#7e92d6"/><rect x="56" y="172" width="4" height="4" fill="#7284ca"/><rect x="60" y="172" width="4" height="4" fill="#96a8e4"/><rect x="64" y="172" width="4" height="4" fill="#7e92d6"/><rect x="68" y="172" width="4" height="4" fill="#6876bc"/><rect x="72" y="172" width="4" height="4" fill="#96a8e4"/><rect x="76" y="172" width="4" height="4" fill="#7284ca"/><rect x="80" y="172" width="4" height="4" fill="#7e92d6"/><rect x="84" y="172" width="4" height="4" fill="#96a8e4"/><rect x="88" y="172" width="8" height="4" fill="#6876bc"/><rect x="96" y="172" width="8" height="4" fill="#5e64a4"/><rect x="104" y="172" width="4" height="4" fill="#6876bc"/><rect x="108" y="172" width="8" height="4" fill="#7e92d6"/><rect x="116" y="172" width="4" height="4" fill="#6876bc"/><rect x="120" y="172" width="8" height="4" fill="#7284ca"/><rect x="128" y="172" width="4" height="4" fill="#6876bc"/><rect x="132" y="172" width="4" height="4" fill="#7284ca"/><rect x="136" y="172" width="4" height="4" fill="#6876bc"/><rect x="140" y="172" width="4" height="4" fill="#7e92d6"/><rect x="144" y="172" width="4" height="4" fill="#7284ca"/><rect x="148" y="172" width="4" height="4" fill="#96a8e4"/><rect x="152" y="172" width="4" height="4" fill="#7284ca"/><rect x="156" y="172" width="12" height="4" fill="#6876bc"/><rect x="168" y="172" width="4" height="4" fill="#96a8e4"/><rect x="172" y="172" width="4" height="4" fill="#b0c0f0"/><rect x="176" y="172" width="4" height="4" fill="#7e92d6"/><rect x="180" y="172" width="4" height="4" fill="#7284ca"/><rect x="184" y="172" width="8" height="4" fill="#96a8e4"/><rect x="0" y="176" width="8" height="4" fill="#ccd8fa"/><rect x="8" y="176" width="4" height="4" fill="#7e92d6"/><rect x="12" y="176" width="12" height="4" fill="#7284ca"/><rect x="24" y="176" width="4" height="4" fill="#6876bc"/><rect x="28" y="176" width="4" height="4" fill="#5e64a4"/><rect x="32" y="176" width="8" height="4" fill="#6876bc"/><rect x="40" y="176" width="4" height="4" fill="#96a8e4"/><rect x="44" y="176" width="8" height="4" fill="#b0c0f0"/><rect x="52" y="176" width="4" height="4" fill="#7e92d6"/><rect x="56" y="176" width="4" height="4" fill="#96a8e4"/><rect x="60" y="176" width="4" height="4" fill="#7284ca"/><rect x="64" y="176" width="4" height="4" fill="#96a8e4"/><rect x="68" y="176" width="4" height="4" fill="#7284ca"/><rect x="72" y="176" width="16" height="4" fill="#7e92d6"/><rect x="88" y="176" width="4" height="4" fill="#5e64a4"/><rect x="92" y="176" width="8" height="4" fill="#505088"/><rect x="100" y="176" width="4" height="4" fill="#6876bc"/><rect x="104" y="176" width="4" height="4" fill="#505088"/><rect x="108" y="176" width="8" height="4" fill="#6876bc"/><rect x="116" y="176" width="8" height="4" fill="#ccd8fa"/><rect x="124" y="176" width="4" height="4" fill="#5e64a4"/><rect x="128" y="176" width="8" height="4" fill="#505088"/><rect x="136" y="176" width="4" height="4" fill="#6876bc"/><rect x="140" y="176" width="8" height="4" fill="#7e92d6"/><rect x="148" y="176" width="4" height="4" fill="#ccd8fa"/><rect x="152" y="176" width="4" height="4" fill="#7284ca"/><rect x="156" y="176" width="8" height="4" fill="#6876bc"/><rect x="164" y="176" width="4" height="4" fill="#5e64a4"/><rect x="168" y="176" width="8" height="4" fill="#96a8e4"/><rect x="176" y="176" width="8" height="4" fill="#7284ca"/><rect x="184" y="176" width="4" height="4" fill="#96a8e4"/><rect x="188" y="176" width="4" height="4" fill="#7e92d6"/><rect x="0" y="180" width="8" height="4" fill="#96a8e4"/><rect x="8" y="180" width="4" height="4" fill="#7284ca"/><rect x="12" y="180" width="4" height="4" fill="#96a8e4"/><rect x="16" y="180" width="4" height="4" fill="#7284ca"/><rect x="20" y="180" width="4" height="4" fill="#6876bc"/><rect x="24" y="180" width="4" height="4" fill="#7e92d6"/><rect x="28" y="180" width="4" height="4" fill="#7284ca"/><rect x="32" y="180" width="8" height="4" fill="#6876bc"/><rect x="40" y="180" width="8" height="4" fill="#7e92d6"/><rect x="48" y="180" width="4" height="4" fill="#96a8e4"/><rect x="52" y="180" width="4" height="4" fill="#b0c0f0"/><rect x="56" y="180" width="4" height="4" fill="#7284ca"/><rect x="60" y="180" width="8" height="4" fill="#ccd8fa"/><rect x="68" y="180" width="4" height="4" fill="#96a8e4"/><rect x="72" y="180" width="4" height="4" fill="#7284ca"/><rect x="76" y="180" width="4" height="4" fill="#6876bc"/><rect x="80" y="180" width="4" height="4" fill="#7284ca"/><rect x="84" y="180" width="4" height="4" fill="#6876bc"/><rect x="88" y="180" width="4" height="4" fill="#7e92d6"/><rect x="92" y="180" width="8" height="4" fill="#6876bc"/><rect x="100" y="180" width="4" height="4" fill="#5e64a4"/><rect x="104" y="180" width="4" height="4" fill="#6876bc"/><rect x="108" y="180" width="4" height="4" fill="#7e92d6"/><rect x="112" y="180" width="8" height="4" fill="#6876bc"/><rect x="120" y="180" width="4" height="4" fill="#7e92d6"/><rect x="124" y="180" width="8" height="4" fill="#7284ca"/><rect x="132" y="180" width="12" height="4" fill="#7e92d6"/><rect x="144" y="180" width="4" height="4" fill="#96a8e4"/><rect x="148" y="180" width="4" height="4" fill="#ccd8fa"/><rect x="152" y="180" width="8" height="4" fill="#6876bc"/><rect x="160" y="180" width="4" height="4" fill="#7e92d6"/><rect x="164" y="180" width="4" height="4" fill="#7284ca"/><rect x="168" y="180" width="4" height="4" fill="#6876bc"/><rect x="172" y="180" width="4" height="4" fill="#7e92d6"/><rect x="176" y="180" width="4" height="4" fill="#b0c0f0"/><rect x="180" y="180" width="8" height="4" fill="#7e92d6"/><rect x="188" y="180" width="4" height="4" fill="#7284ca"/><rect x="0" y="184" width="8" height="4" fill="#7e92d6"/><rect x="8" y="184" width="4" height="4" fill="#7284ca"/><rect x="12" y="184" width="8" height="4" fill="#96a8e4"/><rect x="20" y="184" width="12" height="4" fill="#7e92d6"/><rect x="32" y="184" width="4" height="4" fill="#6876bc"/><rect x="36" y="184" width="12" height="4" fill="#7284ca"/><rect x="48" y="184" width="4" height="4" fill="#b0c0f0"/><rect x="52" y="184" width="4" height="4" fill="#7e92d6"/><rect x="56" y="184" width="4" height="4" fill="#96a8e4"/><rect x="60" y="184" width="4" height="4" fill="#7e92d6"/><rect x="64" y="184" width="4" height="4" fill="#7284ca"/><rect x="68" y="184" width="4" height="4" fill="#ccd8fa"/><rect x="72" y="184" width="4" height="4" fill="#6876bc"/><rect x="76" y="184" width="4" height="4" fill="#7e92d6"/><rect x="80" y="184" width="4" height="4" fill="#96a8e4"/><rect x="84" y="184" width="4" height="4" fill="#7284ca"/><rect x="88" y="184" width="4" height="4" fill="#7e92d6"/><rect x="92" y="184" width="4" height="4" fill="#6876bc"/><rect x="96" y="184" width="4" height="4" fill="#7284ca"/><rect x="100" y="184" width="8" height="4" fill="#7e92d6"/><rect x="108" y="184" width="4" height="4" fill="#7284ca"/><rect x="112" y="184" width="4" height="4" fill="#7e92d6"/><rect x="116" y="184" width="4" height="4" fill="#6876bc"/><rect x="120" y="184" width="8" height="4" fill="#7284ca"/><rect x="128" y="184" width="8" height="4" fill="#6876bc"/><rect x="136" y="184" width="16" height="4" fill="#96a8e4"/><rect x="152" y="184" width="4" height="4" fill="#ccd8fa"/><rect x="156" y="184" width="12" height="4" fill="#7284ca"/><rect x="168" y="184" width="8" height="4" fill="#96a8e4"/><rect x="176" y="184" width="4" height="4" fill="#7284ca"/><rect x="180" y="184" width="4" height="4" fill="#96a8e4"/><rect x="184" y="184" width="4" height="4" fill="#7e92d6"/><rect x="188" y="184" width="4" height="4" fill="#6876bc"/><rect x="0" y="188" width="4" height="4" fill="#7284ca"/><rect x="4" y="188" width="4" height="4" fill="#6876bc"/><rect x="8" y="188" width="12" height="4" fill="#7e92d6"/><rect x="20" y="188" width="4" height="4" fill="#6876bc"/><rect x="24" y="188" width="12" height="4" fill="#96a8e4"/><rect x="36" y="188" width="4" height="4" fill="#7284ca"/><rect x="40" y="188" width="4" height="4" fill="#ccd8fa"/><rect x="44" y="188" width="4" height="4" fill="#7284ca"/><rect x="48" y="188" width="4" height="4" fill="#96a8e4"/><rect x="52" y="188" width="4" height="4" fill="#7e92d6"/><rect x="56" y="188" width="4" height="4" fill="#7284ca"/><rect x="60" y="188" width="4" height="4" fill="#6876bc"/><rect x="64" y="188" width="4" height="4" fill="#5e64a4"/><rect x="68" y="188" width="8" height="4" fill="#6876bc"/><rect x="76" y="188" width="4" height="4" fill="#7284ca"/><rect x="80" y="188" width="4" height="4" fill="#7e92d6"/><rect x="84" y="188" width="8" height="4" fill="#7284ca"/><rect x="92" y="188" width="4" height="4" fill="#b0c0f0"/><rect x="96" y="188" width="4" height="4" fill="#7284ca"/><rect x="100" y="188" width="4" height="4" fill="#96a8e4"/><rect x="104" y="188" width="4" height="4" fill="#7e92d6"/><rect x="108" y="188" width="4" height="4" fill="#6876bc"/><rect x="112" y="188" width="4" height="4" fill="#7284ca"/><rect x="116" y="188" width="4" height="4" fill="#7e92d6"/><rect x="120" y="188" width="4" height="4" fill="#7284ca"/><rect x="124" y="188" width="4" height="4" fill="#96a8e4"/><rect x="128" y="188" width="4" height="4" fill="#7284ca"/><rect x="132" y="188" width="4" height="4" fill="#7e92d6"/><rect x="136" y="188" width="4" height="4" fill="#96a8e4"/><rect x="140" y="188" width="4" height="4" fill="#b0c0f0"/><rect x="144" y="188" width="8" height="4" fill="#7e92d6"/><rect x="152" y="188" width="4" height="4" fill="#96a8e4"/><rect x="156" y="188" width="4" height="4" fill="#7284ca"/><rect x="160" y="188" width="8" height="4" fill="#6876bc"/><rect x="168" y="188" width="4" height="4" fill="#7e92d6"/><rect x="172" y="188" width="4" height="4" fill="#7284ca"/><rect x="176" y="188" width="8" height="4" fill="#7e92d6"/><rect x="184" y="188" width="4" height="4" fill="#7284ca"/><rect x="188" y="188" width="4" height="4" fill="#5e64a4"/></g>
<rect x="80" y="113" width="192" height="192" fill="url(#pt)" opacity="0.85"/>
<rect x="79.5" y="112.5" width="193" height="193" fill="none" stroke="#fff" stroke-width="1" stroke-dasharray="3 3"/>
</svg>
<div class="a" style="left:284px;top:682px;width:39px;height:27px;background:#36393c;border:1px solid #26282a"></div>
<div class="a t" style="left:290px;top:689.53px;font-size:14px;color:#d8dadc;letter-spacing:2.0px;">1/2</div>
<div class="a" style="left:324px;top:682px;width:39px;height:27px;background:#36393c;border:1px solid #26282a"></div>
<div class="a t" style="left:335px;top:689.53px;font-size:14px;color:#d8dadc;letter-spacing:0.6px;">x1</div>
<div class="a" style="left:364px;top:682px;width:39px;height:27px;background:#36393c;border:1px solid #26282a"></div>
<div class="a t" style="left:375.5px;top:689.53px;font-size:14px;color:#d8dadc;letter-spacing:0.6px;">x2</div>
<div class="a" style="left:404px;top:682px;width:39px;height:27px;background:#46494c;border:none"></div>
<div class="a t" style="left:415px;top:689.53px;font-size:14px;color:#d8dadc;letter-spacing:0.6px;">x4</div>
<div class="a" style="left:444px;top:682px;width:39px;height:27px;background:#36393c;border:1px solid #26282a"></div>
<div class="a t" style="left:455px;top:689.53px;font-size:14px;color:#d8dadc;letter-spacing:0.6px;">x8</div>
<div class="a" style="left:484px;top:682px;width:39px;height:27px;background:#36393c;border:1px solid #26282a"></div>
<div class="a t" style="left:492px;top:689.53px;font-size:14px;color:#d8dadc;letter-spacing:0.6px;">x16</div>
<div class="a" style="left:860px;top:47px;width:339px;height:674px;background:#2d3134;border-bottom-right-radius:6px"></div>
<div class="a" style="left:1193px;top:47px;width:1px;height:672px;background:#272a2d"></div>
<div class="a" style="left:871px;top:58px;width:319px;height:238px;border:1px solid #1a1c1e;border-radius:6px;background:#3d4043"></div>
<div class="a t" style="left:876px;top:63.13px;font-size:14px;color:#d8dadc;font-weight:bold;letter-spacing:0.45px;">Color Picker</div>
<div class="a" style="left:880px;top:83px;width:274px;height:154px;background:linear-gradient(to top,#000,rgba(0,0,0,0)),linear-gradient(to right,#fff,#f00)"></div>
<div class="a" style="left:1164px;top:85px;width:16px;height:152px;background:linear-gradient(#f00,#f0f 14%,#00f 31%,#0ff 51%,#0f0 75%,#ff0 85%,#f00)"></div>
<div class="a" style="left:1163px;top:81px;width:18px;height:4.5px;border:1.2px solid #fff;background:#a00"></div>
<div class="a" style="left:880px;top:248px;width:296px;height:1px;background:#2a2c2e"></div>
<div class="a" style="left:880px;top:249px;width:296px;height:1px;background:#4a4d50"></div>
<div class="a" style="left:881px;top:262px;width:26px;height:26px;border:1.5px solid #fff;background:#000"></div>
<div class="a" style="left:924px;top:261px;width:28px;height:28px;background:#000"></div>
<div class="a" style="left:956px;top:261px;width:28px;height:28px;background:#000"></div>
<div class="a" style="left:988px;top:261px;width:28px;height:28px;background:#000"></div>
<div class="a" style="left:1020px;top:261px;width:28px;height:28px;background:#000"></div>
<div class="a" style="left:1052px;top:261px;width:28px;height:28px;background:#000"></div>
<div class="a" style="left:1084px;top:261px;width:28px;height:28px;background:#000"></div>
<div class="a" style="left:1116px;top:261px;width:28px;height:28px;background:#000"></div>
<div class="a" style="left:1148px;top:261px;width:28px;height:28px;background:#000"></div>
<div class="a circ" style="left:891.5px;top:427.5px;width:157.5px;height:157px"></div>
<div class="a circ" style="left:1072px;top:488px;width:97px;height:97px"></div>
<div class="a dd" style="left:931px;top:591px;width:78px;height:25px"></div>
<div class="a t" style="left:940.5px;top:596.33px;font-size:14px;color:#a8aaac;letter-spacing:0.5px;">1px</div>
<div class="a dd" style="left:1081px;top:591px;width:78px;height:25px"></div>
<div class="a t" style="left:1090.5px;top:596.33px;font-size:14px;color:#a8aaac;letter-spacing:0.5px;">1px</div>
<div class="a" style="left:884px;top:628px;width:292px;height:1px;background:#1e2022"></div>
<div class="a rb" style="left:886px"></div>
<div class="a rb" style="left:958px"></div>
<div class="a rb" style="left:1030px"></div>
<div class="a rb" style="left:1114px"></div>
<div class="a" style="left:0;top:721px;width:93px;height:2px;background:#050505"></div>
<div class="a" style="left:93px;top:721px;width:1106px;height:2px;background:#c4c6c8"></div>
<svg class="a" style="left:0;top:0;pointer-events:none" width="1201" height="723">
<defs>
<linearGradient id="gU" x1="0" y1="0" x2="1" y2="0"><stop offset="0" stop-color="#22b43a"/><stop offset="0.6" stop-color="#9ed41e"/><stop offset="1" stop-color="#c8e020"/></linearGradient>
<linearGradient id="gR" x1="1" y1="0" x2="0" y2="0"><stop offset="0" stop-color="#22b43a"/><stop offset="0.6" stop-color="#9ed41e"/><stop offset="1" stop-color="#c8e020"/></linearGradient>
<radialGradient id="sh"><stop offset="0" stop-color="#000" stop-opacity="0.75"/><stop offset="1" stop-color="#000" stop-opacity="0"/></radialGradient><radialGradient id="sh2"><stop offset="0" stop-color="#000" stop-opacity="0.45"/><stop offset="1" stop-color="#000" stop-opacity="0"/></radialGradient>
</defs>
<!-- toolbar icons -->
<g stroke="#1c1a1b" stroke-width="1.3">
<rect x="304.5" y="78.5" width="20.5" height="20.5" fill="#8b8687"/>
<path d="M305 98.5Q322 97 324.5 79L324.5 98.5Z" fill="#403c3d" stroke="none"/>
<rect x="304.5" y="78.5" width="20.5" height="20.5" fill="none"/>
<rect x="369.5" y="69.5" width="19" height="38.5" fill="#8b8687"/>
<path d="M376 107.5Q386 96 388 70L388 107.5Z" fill="#403c3d" stroke="none"/>
<rect x="369.5" y="69.5" width="19" height="38.5" fill="none"/><path d="M369.5 88.5H388.5"/>
<rect x="423.5" y="78.5" width="38.5" height="19.5" fill="#8b8687"/>
<path d="M424 91.5Q446 91 461.5 85L461.5 97.5L424 97.5Z" fill="#403c3d" stroke="none"/>
<rect x="423.5" y="78.5" width="38.5" height="19.5" fill="none"/><path d="M442.5 78.5V98"/>
<rect x="487.5" y="69.5" width="38.5" height="38.5" fill="#8b8687"/>
<path d="M488 96Q511 96 525.5 86L525.5 107.5L488 107.5Z" fill="#403c3d" stroke="none"/>
<rect x="487.5" y="69.5" width="38.5" height="38.5" fill="none"/><path d="M506.5 69.5V108M487.5 88.5H526"/>
</g>
<clipPath id="atc"><rect x="551.5" y="69.5" width="39.5" height="39.5" rx="10"/></clipPath>
<g clip-path="url(#atc)"><rect x="551" y="69" width="41" height="41" fill="#4c4748"/><path d="M551 69H592V82Q571 79 551 82Z" fill="#8b8687"/></g>
<rect x="551.5" y="69.5" width="39.5" height="39.5" rx="10" fill="none" stroke="#1c1a1b" stroke-width="1.5"/>
<text x="571.3" y="87.5" font-family="Liberation Sans" font-weight="bold" font-size="10" fill="#a5a0a1" text-anchor="middle">AUTO</text>
<text x="571.3" y="99.3" font-family="Liberation Sans" font-weight="bold" font-size="10" fill="#a5a0a1" text-anchor="middle">TILE</text>
<clipPath id="hc"><path d="M634.5 70.5L654.5 88.5H650.5V107.5H640.2V93H631V107.5H620.5V88.5H615Z"/></clipPath>
<g clip-path="url(#hc)"><rect x="610" y="65" width="50" height="50" fill="#4c4748"/><path d="M610 65H660V82L615 101H610Z" fill="#8b8687"/></g>
<path d="M634.5 70.5L654.5 88.5H650.5V107.5H640.2V93H631V107.5H620.5V88.5H615Z" fill="none" stroke="#1c1a1b" stroke-width="1.5" stroke-linejoin="round"/>

<!-- pencil -->
<ellipse cx="972" cy="549" rx="50" ry="6.5" fill="url(#sh)"/>
<g transform="translate(960.4,500.9) rotate(30.7)">
<rect x="-7" y="-38" width="14" height="71" fill="#707070"/>
<rect x="-7" y="-38" width="3" height="71" fill="#8a8a8a"/>
<rect x="-4" y="-38" width="3" height="71" fill="#a4a4a4"/>
<rect x="2.5" y="-38" width="4.5" height="71" fill="#4a4a4a"/>
<rect x="-7" y="-50" width="14" height="12" fill="#e4e4e4"/>
<rect x="3" y="-50" width="4" height="12" fill="#b4b4b4"/>
<rect x="-7" y="-50.5" width="14" height="1.2" fill="#888"/>
<rect x="-5.5" y="-58" width="11" height="7.5" fill="#f2f2f2"/>
<rect x="2" y="-58" width="3.5" height="7.5" fill="#c4c4c4"/>
<path d="M-7 33L7 33L2 55L0 58L-1.5 55Z" fill="#ececec"/>
<path d="M1.5 33L7 33L2 55L0.5 56Z" fill="#b8b8b8"/>
</g>
<!-- eraser -->
<ellipse cx="1120" cy="561" rx="30" ry="5" fill="url(#sh)"/>
<path d="M1112.9 504.4L1141.5 513.5L1123.5 551L1095 540.5Z" fill="#1d5878"/>
<path d="M1141.5 513.5L1142 522L1127 557L1123.5 551Z" fill="#0c2a48"/>
<path d="M1121.5 506.8L1131 509.8L1114.5 546.5L1105.5 543Z" fill="#e8eef0"/>
<text transform="translate(1114,541) rotate(-66)" font-family="Liberation Sans" font-weight="bold" font-size="6" fill="#1d4060" textLength="33" lengthAdjust="spacingAndGlyphs">RPG MAKER</text>
<path d="M1095 540.5L1123.5 551L1123 564L1094.5 554Z" fill="#e4e2da"/>
<path d="M1123.5 551L1127 557L1126.5 562L1123 564Z" fill="#b8b6ae"/>
<!-- undo/redo -->
<ellipse cx="918" cy="688" rx="20" ry="3.5" fill="url(#sh2)"/>
<ellipse cx="989" cy="688" rx="20" ry="3.5" fill="url(#sh2)"/>
<path d="M898 677.4L902 659L908 662.8Q919 655.8 928 662.3Q933.8 668 933.5 677Q933.2 684.5 927.5 688.7L926.3 686.6Q929.6 681 929.4 675Q929 668.5 921 666.3Q916.5 666 913.6 668.2L916.8 671.5Z" fill="url(#gU)" stroke="#1a8a2a" stroke-width="0.5"/>
<path d="M1009 677.4L1005 659L999 662.8Q988 655.8 979 662.3Q973.2 668 973.5 677Q973.8 684.5 979.5 688.7L980.7 686.6Q977.4 681 977.6 675Q978 668.5 986 666.3Q990.5 666 993.4 668.2L990.2 671.5Z" fill="url(#gR)" stroke="#1a8a2a" stroke-width="0.5"/>
<!-- palette -->
<ellipse cx="1068" cy="688" rx="20" ry="3.5" fill="url(#sh2)"/>
<path d="M1054 684L1043 665L1049 663L1058 682Z" fill="#d01c24"/>
<path d="M1055 683L1049.3 663L1054.5 661L1059 682Z" fill="#f0c830"/>
<path d="M1056 683L1055.5 661L1062.5 661.3L1060 682Z" fill="#8cc83a"/>
<path d="M1057 683L1063 661.5L1070 663.7L1061 682Z" fill="#2a94dc"/>
<path d="M1058 683L1070 665L1074 670L1062 682Z" fill="#7a34b8"/>
<path d="M1053.7 679.3L1075.5 670L1078.6 675.5L1056.8 686.1Z" fill="#fbfbfb"/>
<circle cx="1075" cy="674" r="1.6" fill="#306a9a"/>
<!-- floppy -->
<ellipse cx="1146" cy="689" rx="22" ry="3.5" fill="url(#sh2)"/>
<rect x="1131" y="659" width="29" height="28.5" fill="#4a4546"/>
<rect x="1136" y="659" width="20" height="11" fill="#e8e8e8"/>
<rect x="1151" y="663" width="3" height="5" fill="#4a4546"/>
<rect x="1136" y="674" width="20" height="13.5" fill="#f4f4f4"/>
<rect x="1136" y="674" width="20" height="3.4" fill="#8cc83a"/>
</svg>
</body></html>
